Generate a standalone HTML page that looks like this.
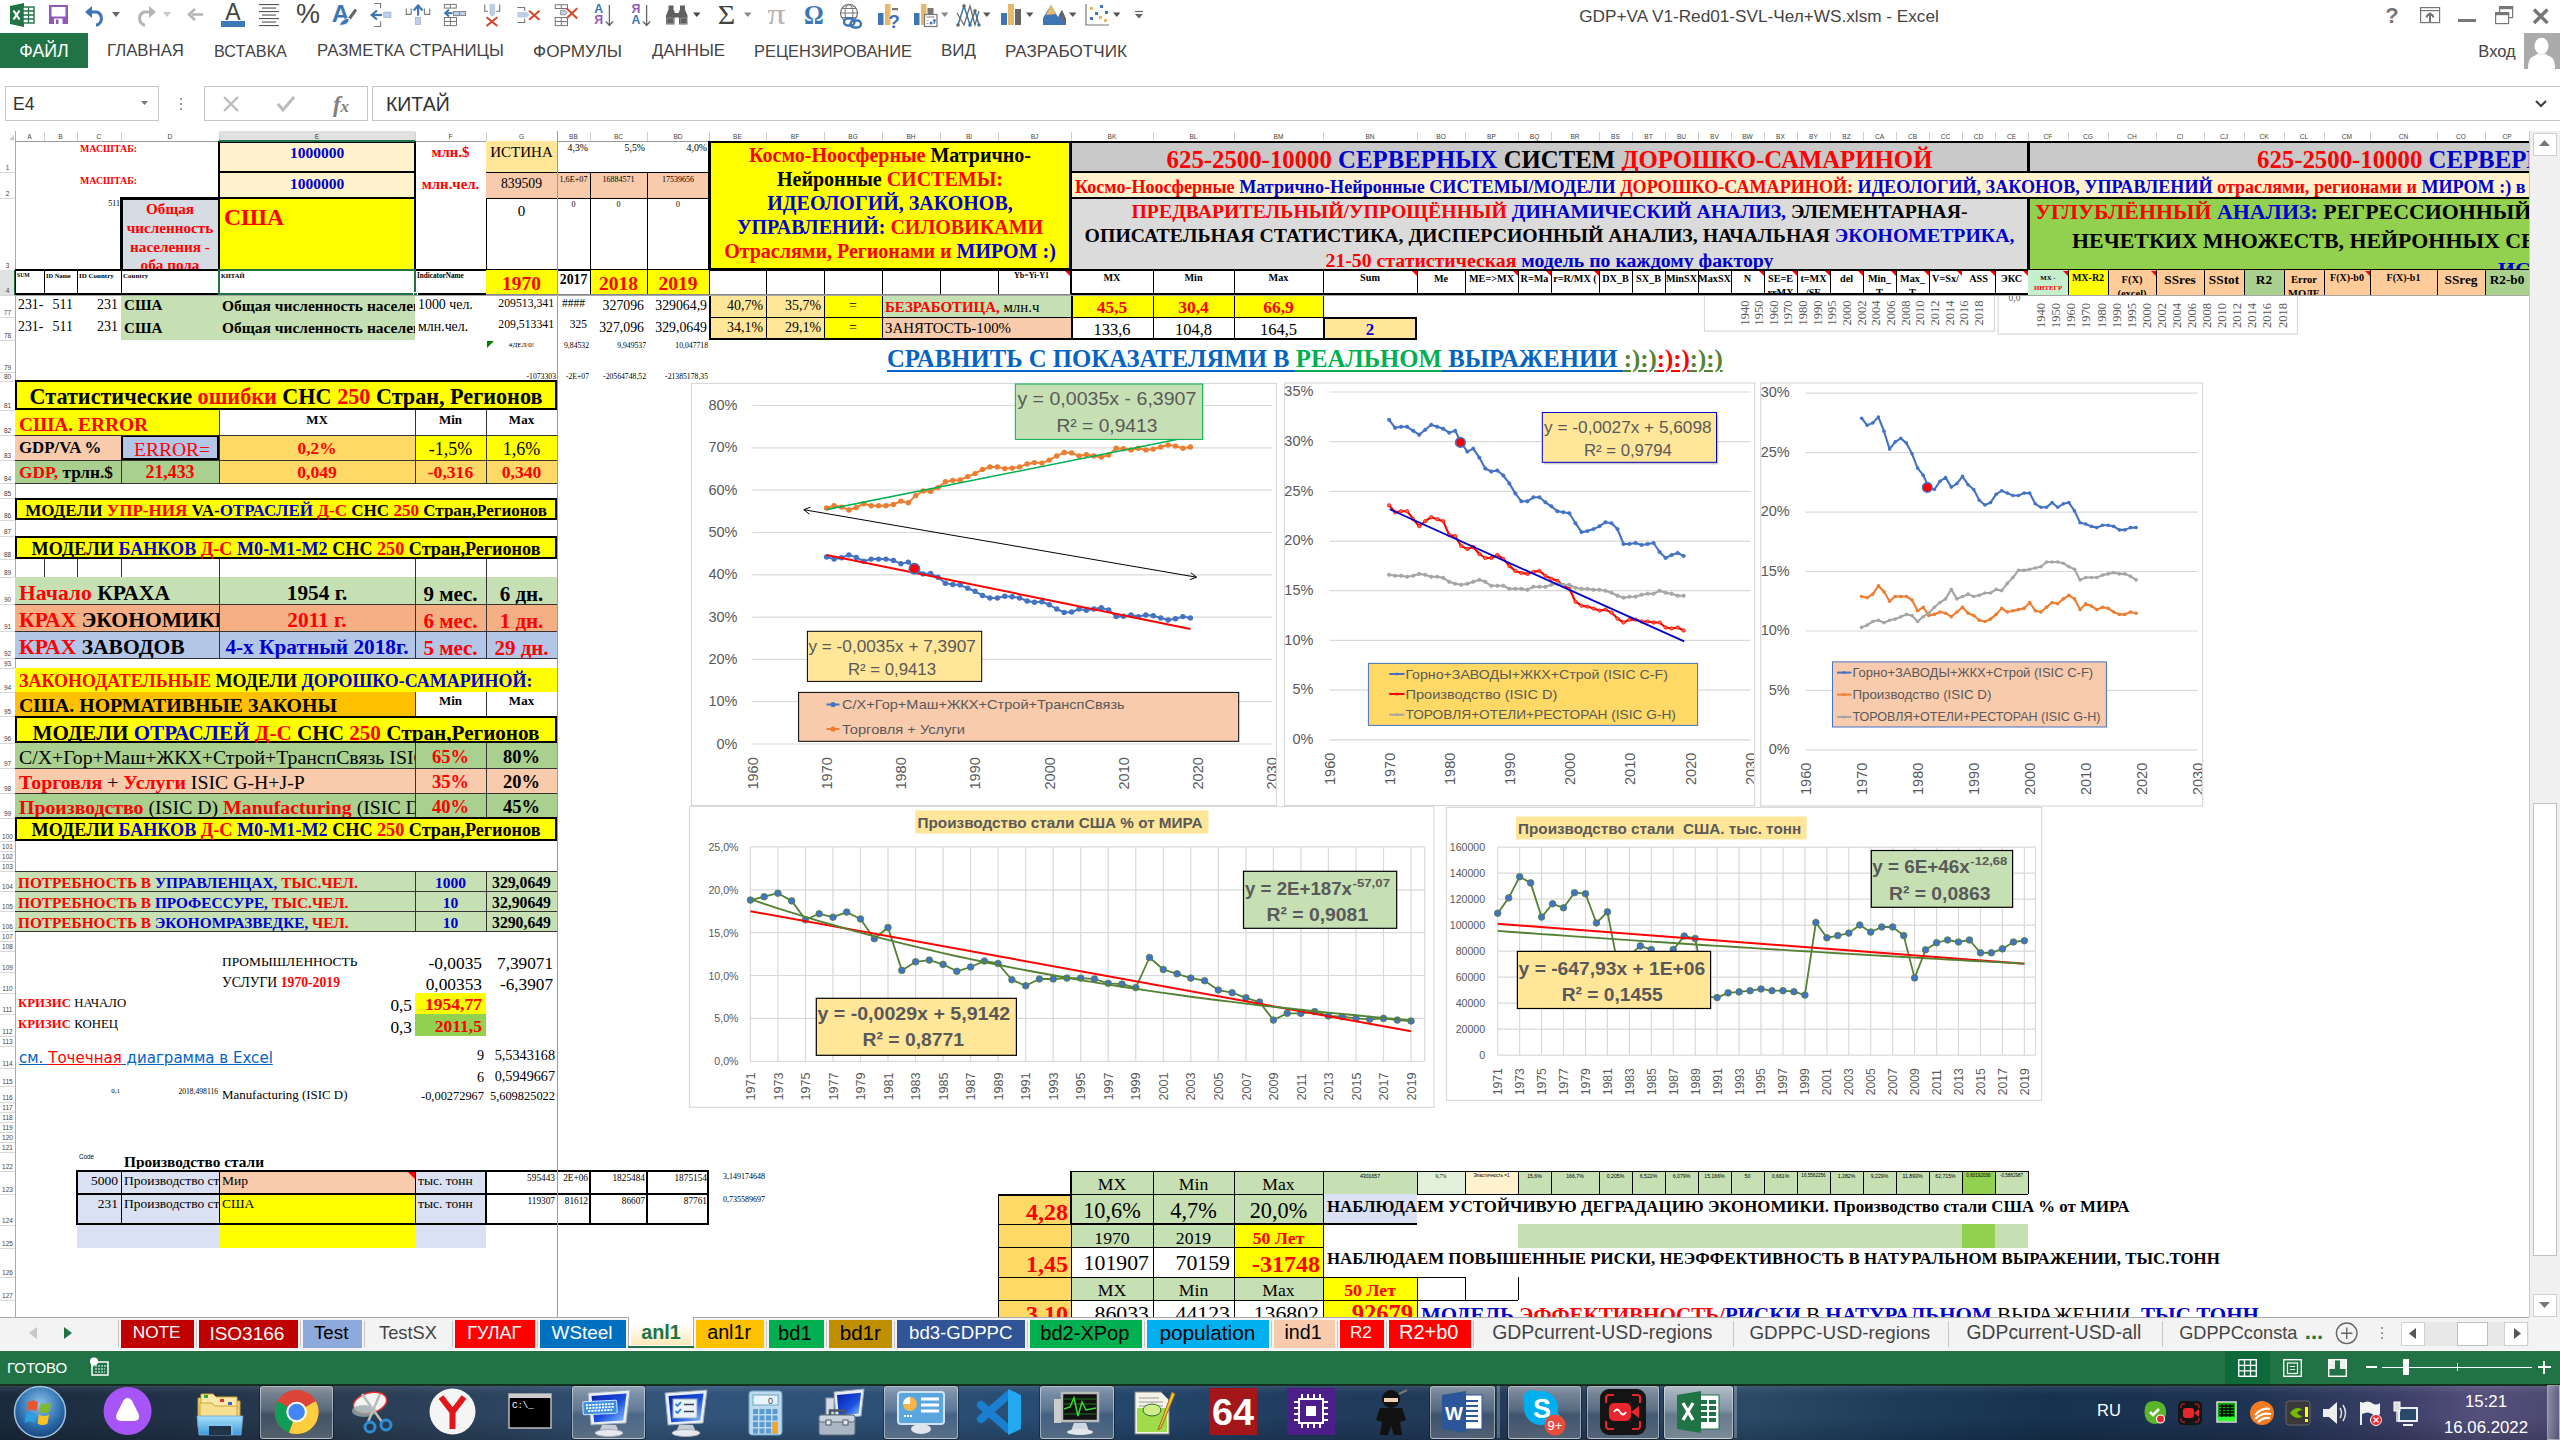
<!DOCTYPE html>
<html lang="ru"><head><meta charset="utf-8"><title>GDP+VA V1-Red01-SVL-Чел+WS.xlsm - Excel</title>
<style>
*{box-sizing:border-box;margin:0;padding:0}
html,body{width:2560px;height:1440px;overflow:hidden;background:#fff}
body{position:relative;font-family:"Liberation Serif",serif;color:#000}
div{position:absolute}
.t{display:flex;white-space:nowrap;overflow:hidden;line-height:1.0}
.t.nc{overflow:visible}
.t.wr{white-space:normal}
.t span{display:block}
.ts{font-family:"Liberation Serif",serif}
.ta{font-family:"Liberation Sans",sans-serif}
.td{font-family:"DejaVu Sans","Liberation Sans",sans-serif}
.b{font-weight:bold}
.al{justify-content:flex-start;text-align:left}
.ac{justify-content:center;text-align:center}
.ar{justify-content:flex-end;text-align:right}
.vt{align-items:flex-start}
.vm{align-items:center}
.vb{align-items:flex-end}
i{font-style:normal}
i.r{color:#f00}
i.u{color:#0000cd}
i.k{color:#000}
i.g{color:#00b050}
svg{position:absolute;overflow:visible}
</style></head>
<body>
<svg style="left:0;top:0" width="2560" height="1440" font-family="Liberation Sans, sans-serif"><path d="M1704.5 295V331.2H1994.5V295" fill="#fff" stroke="#d9d9d9" stroke-width="1.2"/><text x="1748.5" y="325.5" font-size="12.5" font-family="Liberation Serif, serif" fill="#595959" transform="rotate(-90 1748.5 325.5)">1940</text><text x="1763.1" y="325.5" font-size="12.5" font-family="Liberation Serif, serif" fill="#595959" transform="rotate(-90 1763.1 325.5)">1950</text><text x="1777.8" y="325.5" font-size="12.5" font-family="Liberation Serif, serif" fill="#595959" transform="rotate(-90 1777.8 325.5)">1960</text><text x="1792.4" y="325.5" font-size="12.5" font-family="Liberation Serif, serif" fill="#595959" transform="rotate(-90 1792.4 325.5)">1970</text><text x="1807.1" y="325.5" font-size="12.5" font-family="Liberation Serif, serif" fill="#595959" transform="rotate(-90 1807.1 325.5)">1980</text><text x="1821.7" y="325.5" font-size="12.5" font-family="Liberation Serif, serif" fill="#595959" transform="rotate(-90 1821.7 325.5)">1990</text><text x="1836.3" y="325.5" font-size="12.5" font-family="Liberation Serif, serif" fill="#595959" transform="rotate(-90 1836.3 325.5)">1995</text><text x="1851.0" y="325.5" font-size="12.5" font-family="Liberation Serif, serif" fill="#595959" transform="rotate(-90 1851.0 325.5)">2000</text><text x="1865.6" y="325.5" font-size="12.5" font-family="Liberation Serif, serif" fill="#595959" transform="rotate(-90 1865.6 325.5)">2002</text><text x="1880.3" y="325.5" font-size="12.5" font-family="Liberation Serif, serif" fill="#595959" transform="rotate(-90 1880.3 325.5)">2004</text><text x="1894.9" y="325.5" font-size="12.5" font-family="Liberation Serif, serif" fill="#595959" transform="rotate(-90 1894.9 325.5)">2006</text><text x="1909.5" y="325.5" font-size="12.5" font-family="Liberation Serif, serif" fill="#595959" transform="rotate(-90 1909.5 325.5)">2008</text><text x="1924.2" y="325.5" font-size="12.5" font-family="Liberation Serif, serif" fill="#595959" transform="rotate(-90 1924.2 325.5)">2010</text><text x="1938.8" y="325.5" font-size="12.5" font-family="Liberation Serif, serif" fill="#595959" transform="rotate(-90 1938.8 325.5)">2012</text><text x="1953.5" y="325.5" font-size="12.5" font-family="Liberation Serif, serif" fill="#595959" transform="rotate(-90 1953.5 325.5)">2014</text><text x="1968.1" y="325.5" font-size="12.5" font-family="Liberation Serif, serif" fill="#595959" transform="rotate(-90 1968.1 325.5)">2016</text><text x="1982.7" y="325.5" font-size="12.5" font-family="Liberation Serif, serif" fill="#595959" transform="rotate(-90 1982.7 325.5)">2018</text><path d="M1998.2 295V334.2H2297.5V295" fill="#fff" stroke="#d9d9d9" stroke-width="1.2"/><text x="2045.2" y="328" font-size="12.5" font-family="Liberation Serif, serif" fill="#595959" transform="rotate(-90 2045.2 328)">1940</text><text x="2060.3" y="328" font-size="12.5" font-family="Liberation Serif, serif" fill="#595959" transform="rotate(-90 2060.3 328)">1950</text><text x="2075.4" y="328" font-size="12.5" font-family="Liberation Serif, serif" fill="#595959" transform="rotate(-90 2075.4 328)">1960</text><text x="2090.4" y="328" font-size="12.5" font-family="Liberation Serif, serif" fill="#595959" transform="rotate(-90 2090.4 328)">1970</text><text x="2105.5" y="328" font-size="12.5" font-family="Liberation Serif, serif" fill="#595959" transform="rotate(-90 2105.5 328)">1980</text><text x="2120.6" y="328" font-size="12.5" font-family="Liberation Serif, serif" fill="#595959" transform="rotate(-90 2120.6 328)">1990</text><text x="2135.7" y="328" font-size="12.5" font-family="Liberation Serif, serif" fill="#595959" transform="rotate(-90 2135.7 328)">1995</text><text x="2150.8" y="328" font-size="12.5" font-family="Liberation Serif, serif" fill="#595959" transform="rotate(-90 2150.8 328)">2000</text><text x="2165.8" y="328" font-size="12.5" font-family="Liberation Serif, serif" fill="#595959" transform="rotate(-90 2165.8 328)">2002</text><text x="2180.9" y="328" font-size="12.5" font-family="Liberation Serif, serif" fill="#595959" transform="rotate(-90 2180.9 328)">2004</text><text x="2196.0" y="328" font-size="12.5" font-family="Liberation Serif, serif" fill="#595959" transform="rotate(-90 2196.0 328)">2006</text><text x="2211.1" y="328" font-size="12.5" font-family="Liberation Serif, serif" fill="#595959" transform="rotate(-90 2211.1 328)">2008</text><text x="2226.2" y="328" font-size="12.5" font-family="Liberation Serif, serif" fill="#595959" transform="rotate(-90 2226.2 328)">2010</text><text x="2241.2" y="328" font-size="12.5" font-family="Liberation Serif, serif" fill="#595959" transform="rotate(-90 2241.2 328)">2012</text><text x="2256.3" y="328" font-size="12.5" font-family="Liberation Serif, serif" fill="#595959" transform="rotate(-90 2256.3 328)">2014</text><text x="2271.4" y="328" font-size="12.5" font-family="Liberation Serif, serif" fill="#595959" transform="rotate(-90 2271.4 328)">2016</text><text x="2286.5" y="328" font-size="12.5" font-family="Liberation Serif, serif" fill="#595959" transform="rotate(-90 2286.5 328)">2018</text><text x="2008.5" y="301" font-size="9.5" font-family="Liberation Serif, serif" fill="#595959">0,0</text></svg>
<div style="left:15px;top:141px;width:2514px;height:154px;background:#fff;"></div>
<svg style="left:0;top:0" width="2560" height="1440" font-family="Liberation Sans, sans-serif"><defs><clipPath id="k1"><rect x="692" y="384" width="584" height="421"/></clipPath><clipPath id="k2"><rect x="1285" y="384" width="469" height="421"/></clipPath><clipPath id="k3"><rect x="1761" y="384" width="441" height="421"/></clipPath></defs><rect x="691.5" y="383.5" width="585.0" height="422.0" fill="#fff" stroke="#d9d9d9" stroke-width="1.2"/><path d="M752.4 744.0H1272" stroke="#d9d9d9" stroke-width="1.2"/><text x="737.5" y="748.5" font-size="14.5" text-anchor="end" fill="#595959">0%</text><path d="M752.4 701.7H1272" stroke="#d9d9d9" stroke-width="1.2"/><text x="737.5" y="706.2" font-size="14.5" text-anchor="end" fill="#595959">10%</text><path d="M752.4 659.4H1272" stroke="#d9d9d9" stroke-width="1.2"/><text x="737.5" y="663.9" font-size="14.5" text-anchor="end" fill="#595959">20%</text><path d="M752.4 617.1H1272" stroke="#d9d9d9" stroke-width="1.2"/><text x="737.5" y="621.6" font-size="14.5" text-anchor="end" fill="#595959">30%</text><path d="M752.4 574.8H1272" stroke="#d9d9d9" stroke-width="1.2"/><text x="737.5" y="579.3" font-size="14.5" text-anchor="end" fill="#595959">40%</text><path d="M752.4 532.5H1272" stroke="#d9d9d9" stroke-width="1.2"/><text x="737.5" y="537.0" font-size="14.5" text-anchor="end" fill="#595959">50%</text><path d="M752.4 490.1H1272" stroke="#d9d9d9" stroke-width="1.2"/><text x="737.5" y="494.6" font-size="14.5" text-anchor="end" fill="#595959">60%</text><path d="M752.4 447.8H1272" stroke="#d9d9d9" stroke-width="1.2"/><text x="737.5" y="452.3" font-size="14.5" text-anchor="end" fill="#595959">70%</text><path d="M752.4 405.5H1272" stroke="#d9d9d9" stroke-width="1.2"/><text x="737.5" y="410.0" font-size="14.5" text-anchor="end" fill="#595959">80%</text><g clip-path="url(#k1)"><text x="757.6" y="789.5" font-size="14.5" fill="#595959" transform="rotate(-90 757.6 789.5)">1960</text><text x="831.8" y="789.5" font-size="14.5" fill="#595959" transform="rotate(-90 831.8 789.5)">1970</text><text x="906.1" y="789.5" font-size="14.5" fill="#595959" transform="rotate(-90 906.1 789.5)">1980</text><text x="980.3" y="789.5" font-size="14.5" fill="#595959" transform="rotate(-90 980.3 789.5)">1990</text><text x="1054.5" y="789.5" font-size="14.5" fill="#595959" transform="rotate(-90 1054.5 789.5)">2000</text><text x="1128.8" y="789.5" font-size="14.5" fill="#595959" transform="rotate(-90 1128.8 789.5)">2010</text><text x="1203.0" y="789.5" font-size="14.5" fill="#595959" transform="rotate(-90 1203.0 789.5)">2020</text><text x="1277.2" y="789.5" font-size="14.5" fill="#595959" transform="rotate(-90 1277.2 789.5)">2030</text></g><polyline points="826.6,557.0 834.1,559.1 841.5,557.8 848.9,554.9 856.3,557.4 863.7,561.2 871.2,559.1 878.6,559.1 886.0,559.1 893.4,560.4 900.9,563.8 908.3,562.1 915.7,569.3 923.1,573.9 930.6,573.5 938.0,577.3 945.4,583.2 952.8,584.5 960.2,584.9 967.7,588.3 975.1,591.3 982.5,595.5 989.9,598.0 997.4,598.0 1004.8,596.3 1012.2,596.8 1019.6,598.0 1027.1,601.0 1034.5,602.3 1041.9,601.8 1049.3,604.8 1056.7,609.0 1064.2,612.4 1071.6,612.0 1079.0,609.0 1086.4,610.3 1093.9,609.0 1101.3,607.8 1108.7,609.9 1116.1,616.6 1123.5,616.2 1131.0,615.0 1138.4,616.6 1145.8,615.0 1153.2,615.8 1160.7,617.9 1168.1,620.0 1175.5,618.8 1182.9,616.6 1190.4,617.9" fill="none" stroke="#4472c4" stroke-width="2" stroke-linejoin="round"/><circle cx="826.6" cy="557.0" r="2.7" fill="#4472c4"/><circle cx="834.1" cy="559.1" r="2.7" fill="#4472c4"/><circle cx="841.5" cy="557.8" r="2.7" fill="#4472c4"/><circle cx="848.9" cy="554.9" r="2.7" fill="#4472c4"/><circle cx="856.3" cy="557.4" r="2.7" fill="#4472c4"/><circle cx="863.7" cy="561.2" r="2.7" fill="#4472c4"/><circle cx="871.2" cy="559.1" r="2.7" fill="#4472c4"/><circle cx="878.6" cy="559.1" r="2.7" fill="#4472c4"/><circle cx="886.0" cy="559.1" r="2.7" fill="#4472c4"/><circle cx="893.4" cy="560.4" r="2.7" fill="#4472c4"/><circle cx="900.9" cy="563.8" r="2.7" fill="#4472c4"/><circle cx="908.3" cy="562.1" r="2.7" fill="#4472c4"/><circle cx="915.7" cy="569.3" r="2.7" fill="#4472c4"/><circle cx="923.1" cy="573.9" r="2.7" fill="#4472c4"/><circle cx="930.6" cy="573.5" r="2.7" fill="#4472c4"/><circle cx="938.0" cy="577.3" r="2.7" fill="#4472c4"/><circle cx="945.4" cy="583.2" r="2.7" fill="#4472c4"/><circle cx="952.8" cy="584.5" r="2.7" fill="#4472c4"/><circle cx="960.2" cy="584.9" r="2.7" fill="#4472c4"/><circle cx="967.7" cy="588.3" r="2.7" fill="#4472c4"/><circle cx="975.1" cy="591.3" r="2.7" fill="#4472c4"/><circle cx="982.5" cy="595.5" r="2.7" fill="#4472c4"/><circle cx="989.9" cy="598.0" r="2.7" fill="#4472c4"/><circle cx="997.4" cy="598.0" r="2.7" fill="#4472c4"/><circle cx="1004.8" cy="596.3" r="2.7" fill="#4472c4"/><circle cx="1012.2" cy="596.8" r="2.7" fill="#4472c4"/><circle cx="1019.6" cy="598.0" r="2.7" fill="#4472c4"/><circle cx="1027.1" cy="601.0" r="2.7" fill="#4472c4"/><circle cx="1034.5" cy="602.3" r="2.7" fill="#4472c4"/><circle cx="1041.9" cy="601.8" r="2.7" fill="#4472c4"/><circle cx="1049.3" cy="604.8" r="2.7" fill="#4472c4"/><circle cx="1056.7" cy="609.0" r="2.7" fill="#4472c4"/><circle cx="1064.2" cy="612.4" r="2.7" fill="#4472c4"/><circle cx="1071.6" cy="612.0" r="2.7" fill="#4472c4"/><circle cx="1079.0" cy="609.0" r="2.7" fill="#4472c4"/><circle cx="1086.4" cy="610.3" r="2.7" fill="#4472c4"/><circle cx="1093.9" cy="609.0" r="2.7" fill="#4472c4"/><circle cx="1101.3" cy="607.8" r="2.7" fill="#4472c4"/><circle cx="1108.7" cy="609.9" r="2.7" fill="#4472c4"/><circle cx="1116.1" cy="616.6" r="2.7" fill="#4472c4"/><circle cx="1123.5" cy="616.2" r="2.7" fill="#4472c4"/><circle cx="1131.0" cy="615.0" r="2.7" fill="#4472c4"/><circle cx="1138.4" cy="616.6" r="2.7" fill="#4472c4"/><circle cx="1145.8" cy="615.0" r="2.7" fill="#4472c4"/><circle cx="1153.2" cy="615.8" r="2.7" fill="#4472c4"/><circle cx="1160.7" cy="617.9" r="2.7" fill="#4472c4"/><circle cx="1168.1" cy="620.0" r="2.7" fill="#4472c4"/><circle cx="1175.5" cy="618.8" r="2.7" fill="#4472c4"/><circle cx="1182.9" cy="616.6" r="2.7" fill="#4472c4"/><circle cx="1190.4" cy="617.9" r="2.7" fill="#4472c4"/><polyline points="826.6,507.9 834.1,505.8 841.5,507.1 848.9,510.0 856.3,507.5 863.7,503.7 871.2,505.8 878.6,505.8 886.0,505.8 893.4,504.5 900.9,501.1 908.3,502.8 915.7,495.6 923.1,491.0 930.6,491.4 938.0,487.6 945.4,481.7 952.8,480.4 960.2,480.0 967.7,476.6 975.1,473.6 982.5,469.4 989.9,466.9 997.4,466.9 1004.8,468.6 1012.2,468.1 1019.6,466.9 1027.1,463.9 1034.5,462.6 1041.9,463.1 1049.3,460.1 1056.7,455.9 1064.2,452.5 1071.6,452.9 1079.0,455.9 1086.4,454.6 1093.9,455.9 1101.3,457.1 1108.7,455.0 1116.1,448.3 1123.5,448.7 1131.0,449.9 1138.4,448.3 1145.8,449.9 1153.2,449.1 1160.7,447.0 1168.1,444.9 1175.5,446.1 1182.9,448.3 1190.4,447.0" fill="none" stroke="#ed7d31" stroke-width="2" stroke-linejoin="round"/><circle cx="826.6" cy="507.9" r="2.7" fill="#ed7d31"/><circle cx="834.1" cy="505.8" r="2.7" fill="#ed7d31"/><circle cx="841.5" cy="507.1" r="2.7" fill="#ed7d31"/><circle cx="848.9" cy="510.0" r="2.7" fill="#ed7d31"/><circle cx="856.3" cy="507.5" r="2.7" fill="#ed7d31"/><circle cx="863.7" cy="503.7" r="2.7" fill="#ed7d31"/><circle cx="871.2" cy="505.8" r="2.7" fill="#ed7d31"/><circle cx="878.6" cy="505.8" r="2.7" fill="#ed7d31"/><circle cx="886.0" cy="505.8" r="2.7" fill="#ed7d31"/><circle cx="893.4" cy="504.5" r="2.7" fill="#ed7d31"/><circle cx="900.9" cy="501.1" r="2.7" fill="#ed7d31"/><circle cx="908.3" cy="502.8" r="2.7" fill="#ed7d31"/><circle cx="915.7" cy="495.6" r="2.7" fill="#ed7d31"/><circle cx="923.1" cy="491.0" r="2.7" fill="#ed7d31"/><circle cx="930.6" cy="491.4" r="2.7" fill="#ed7d31"/><circle cx="938.0" cy="487.6" r="2.7" fill="#ed7d31"/><circle cx="945.4" cy="481.7" r="2.7" fill="#ed7d31"/><circle cx="952.8" cy="480.4" r="2.7" fill="#ed7d31"/><circle cx="960.2" cy="480.0" r="2.7" fill="#ed7d31"/><circle cx="967.7" cy="476.6" r="2.7" fill="#ed7d31"/><circle cx="975.1" cy="473.6" r="2.7" fill="#ed7d31"/><circle cx="982.5" cy="469.4" r="2.7" fill="#ed7d31"/><circle cx="989.9" cy="466.9" r="2.7" fill="#ed7d31"/><circle cx="997.4" cy="466.9" r="2.7" fill="#ed7d31"/><circle cx="1004.8" cy="468.6" r="2.7" fill="#ed7d31"/><circle cx="1012.2" cy="468.1" r="2.7" fill="#ed7d31"/><circle cx="1019.6" cy="466.9" r="2.7" fill="#ed7d31"/><circle cx="1027.1" cy="463.9" r="2.7" fill="#ed7d31"/><circle cx="1034.5" cy="462.6" r="2.7" fill="#ed7d31"/><circle cx="1041.9" cy="463.1" r="2.7" fill="#ed7d31"/><circle cx="1049.3" cy="460.1" r="2.7" fill="#ed7d31"/><circle cx="1056.7" cy="455.9" r="2.7" fill="#ed7d31"/><circle cx="1064.2" cy="452.5" r="2.7" fill="#ed7d31"/><circle cx="1071.6" cy="452.9" r="2.7" fill="#ed7d31"/><circle cx="1079.0" cy="455.9" r="2.7" fill="#ed7d31"/><circle cx="1086.4" cy="454.6" r="2.7" fill="#ed7d31"/><circle cx="1093.9" cy="455.9" r="2.7" fill="#ed7d31"/><circle cx="1101.3" cy="457.1" r="2.7" fill="#ed7d31"/><circle cx="1108.7" cy="455.0" r="2.7" fill="#ed7d31"/><circle cx="1116.1" cy="448.3" r="2.7" fill="#ed7d31"/><circle cx="1123.5" cy="448.7" r="2.7" fill="#ed7d31"/><circle cx="1131.0" cy="449.9" r="2.7" fill="#ed7d31"/><circle cx="1138.4" cy="448.3" r="2.7" fill="#ed7d31"/><circle cx="1145.8" cy="449.9" r="2.7" fill="#ed7d31"/><circle cx="1153.2" cy="449.1" r="2.7" fill="#ed7d31"/><circle cx="1160.7" cy="447.0" r="2.7" fill="#ed7d31"/><circle cx="1168.1" cy="444.9" r="2.7" fill="#ed7d31"/><circle cx="1175.5" cy="446.1" r="2.7" fill="#ed7d31"/><circle cx="1182.9" cy="448.3" r="2.7" fill="#ed7d31"/><circle cx="1190.4" cy="447.0" r="2.7" fill="#ed7d31"/><path d="M826.6 509.6L1190.4 436.8" stroke="#00b050" stroke-width="1.6"/><path d="M826.6 554.9L1190.4 628.9" stroke="#f00" stroke-width="2"/><path d="M803.8 509.7L1196.5 577.2" stroke="#000" stroke-width="1"/><path d="M810.5 507.2L803.8 509.7L809.5 514.2" fill="none" stroke="#000" stroke-width="1"/><path d="M1190.8 572.700L1196.500 577.200L1189.800 579.700" fill="none" stroke="#000" stroke-width="1"/><circle cx="914.4" cy="568.7" r="5.2" fill="#f00" stroke="#4472c4" stroke-width="1.6"/><rect x="1015.3" y="384" width="187.3" height="55.4" fill="#c6e0b4" stroke="#00b050" stroke-width="1"/><text x="1017.4" y="404.5" font-size="17.5" textLength="179.0" lengthAdjust="spacingAndGlyphs" fill="#595959">y = 0,0035x - 6,3907</text><text x="1056.5" y="431.5" font-size="17.5" textLength="100.9" lengthAdjust="spacingAndGlyphs" fill="#595959">R² = 0,9413</text><rect x="807.4" y="631.3" width="174.3" height="50.1" fill="#ffe699" stroke="#000" stroke-width="1"/><text x="808.4" y="652.0" font-size="16" textLength="167.5" lengthAdjust="spacingAndGlyphs" fill="#595959">y = -0,0035x + 7,3907</text><text x="848.0" y="675.0" font-size="16" textLength="88.0" lengthAdjust="spacingAndGlyphs" fill="#595959">R² = 0,9413</text><rect x="798.6" y="692.4" width="440.1" height="48.9" fill="#f8cbad" stroke="#000" stroke-width="1"/><path d="M826.5 704.500h13" stroke="#4472c4" stroke-width="2"/><circle cx="833" cy="704.500" r="2.6" fill="#4472c4"/><text x="842.0" y="709.3" font-size="13.5" textLength="282.7" lengthAdjust="spacingAndGlyphs" fill="#595959">С/Х+Гор+Маш+ЖКХ+Строй+ТранспСвязь</text><path d="M826.5 729h13" stroke="#ed7d31" stroke-width="2"/><circle cx="833" cy="729" r="2.6" fill="#ed7d31"/><text x="842.0" y="733.8" font-size="13.5" textLength="123.0" lengthAdjust="spacingAndGlyphs" fill="#595959">Торговля + Услуги</text><rect x="1284.5" y="383" width="470.20000000000005" height="422.5" fill="#fff" stroke="#d9d9d9" stroke-width="1.2"/><path d="M1329.6 739.8H1750.4" stroke="#d9d9d9" stroke-width="1.2"/><text x="1313.4" y="744.0" font-size="14.5" text-anchor="end" fill="#595959">0%</text><path d="M1329.6 690.1H1750.4" stroke="#d9d9d9" stroke-width="1.2"/><text x="1313.4" y="694.3" font-size="14.5" text-anchor="end" fill="#595959">5%</text><path d="M1329.6 640.4H1750.4" stroke="#d9d9d9" stroke-width="1.2"/><text x="1313.4" y="644.6" font-size="14.5" text-anchor="end" fill="#595959">10%</text><path d="M1329.6 590.7H1750.4" stroke="#d9d9d9" stroke-width="1.2"/><text x="1313.4" y="594.9" font-size="14.5" text-anchor="end" fill="#595959">15%</text><path d="M1329.6 541.1H1750.4" stroke="#d9d9d9" stroke-width="1.2"/><text x="1313.4" y="545.3" font-size="14.5" text-anchor="end" fill="#595959">20%</text><path d="M1329.6 491.4H1750.4" stroke="#d9d9d9" stroke-width="1.2"/><text x="1313.4" y="495.6" font-size="14.5" text-anchor="end" fill="#595959">25%</text><path d="M1329.6 441.7H1750.4" stroke="#d9d9d9" stroke-width="1.2"/><text x="1313.4" y="445.9" font-size="14.5" text-anchor="end" fill="#595959">30%</text><path d="M1329.6 392.0H1750.4" stroke="#d9d9d9" stroke-width="1.2"/><text x="1313.4" y="396.2" font-size="14.5" text-anchor="end" fill="#595959">35%</text><g clip-path="url(#k2)"><text x="1334.8" y="785.0" font-size="14.5" fill="#595959" transform="rotate(-90 1334.8 785.0)">1960</text><text x="1394.9" y="785.0" font-size="14.5" fill="#595959" transform="rotate(-90 1394.9 785.0)">1970</text><text x="1455.0" y="785.0" font-size="14.5" fill="#595959" transform="rotate(-90 1455.0 785.0)">1980</text><text x="1515.1" y="785.0" font-size="14.5" fill="#595959" transform="rotate(-90 1515.1 785.0)">1990</text><text x="1575.2" y="785.0" font-size="14.5" fill="#595959" transform="rotate(-90 1575.2 785.0)">2000</text><text x="1635.3" y="785.0" font-size="14.5" fill="#595959" transform="rotate(-90 1635.3 785.0)">2010</text><text x="1695.5" y="785.0" font-size="14.5" fill="#595959" transform="rotate(-90 1695.5 785.0)">2020</text><text x="1755.6" y="785.0" font-size="14.5" fill="#595959" transform="rotate(-90 1755.6 785.0)">2030</text></g><polyline points="1389.1,419.8 1395.1,427.8 1401.1,426.8 1407.1,426.8 1413.2,430.8 1419.2,434.7 1425.2,429.8 1431.2,424.8 1437.2,426.8 1443.2,428.8 1449.2,432.7 1455.2,430.8 1461.2,442.7 1467.3,451.6 1473.3,448.6 1479.3,457.6 1485.3,468.5 1491.3,471.5 1497.3,470.5 1503.3,475.5 1509.3,483.4 1515.3,493.4 1521.4,501.3 1527.4,501.3 1533.4,497.3 1539.4,497.3 1545.4,502.3 1551.4,506.3 1557.4,511.2 1563.4,512.2 1569.4,513.2 1575.5,523.2 1581.5,532.1 1587.5,531.1 1593.5,529.1 1599.5,526.2 1605.5,522.2 1611.5,523.2 1617.5,529.1 1623.5,544.0 1629.5,544.0 1635.6,543.0 1641.6,545.0 1647.6,544.0 1653.6,543.0 1659.6,552.0 1665.6,558.0 1671.6,555.0 1677.6,553.0 1683.6,556.0" fill="none" stroke="#4472c4" stroke-width="2.1" stroke-linejoin="round"/><circle cx="1389.1" cy="419.8" r="1.7" fill="#4472c4" stroke="#4472c4" stroke-width="0.7"/><circle cx="1395.1" cy="427.8" r="1.7" fill="#4472c4" stroke="#4472c4" stroke-width="0.7"/><circle cx="1401.1" cy="426.8" r="1.7" fill="#4472c4" stroke="#4472c4" stroke-width="0.7"/><circle cx="1407.1" cy="426.8" r="1.7" fill="#4472c4" stroke="#4472c4" stroke-width="0.7"/><circle cx="1413.2" cy="430.8" r="1.7" fill="#4472c4" stroke="#4472c4" stroke-width="0.7"/><circle cx="1419.2" cy="434.7" r="1.7" fill="#4472c4" stroke="#4472c4" stroke-width="0.7"/><circle cx="1425.2" cy="429.8" r="1.7" fill="#4472c4" stroke="#4472c4" stroke-width="0.7"/><circle cx="1431.2" cy="424.8" r="1.7" fill="#4472c4" stroke="#4472c4" stroke-width="0.7"/><circle cx="1437.2" cy="426.8" r="1.7" fill="#4472c4" stroke="#4472c4" stroke-width="0.7"/><circle cx="1443.2" cy="428.8" r="1.7" fill="#4472c4" stroke="#4472c4" stroke-width="0.7"/><circle cx="1449.2" cy="432.7" r="1.7" fill="#4472c4" stroke="#4472c4" stroke-width="0.7"/><circle cx="1455.2" cy="430.8" r="1.7" fill="#4472c4" stroke="#4472c4" stroke-width="0.7"/><circle cx="1461.2" cy="442.7" r="1.7" fill="#4472c4" stroke="#4472c4" stroke-width="0.7"/><circle cx="1467.3" cy="451.6" r="1.7" fill="#4472c4" stroke="#4472c4" stroke-width="0.7"/><circle cx="1473.3" cy="448.6" r="1.7" fill="#4472c4" stroke="#4472c4" stroke-width="0.7"/><circle cx="1479.3" cy="457.6" r="1.7" fill="#4472c4" stroke="#4472c4" stroke-width="0.7"/><circle cx="1485.3" cy="468.5" r="1.7" fill="#4472c4" stroke="#4472c4" stroke-width="0.7"/><circle cx="1491.3" cy="471.5" r="1.7" fill="#4472c4" stroke="#4472c4" stroke-width="0.7"/><circle cx="1497.3" cy="470.5" r="1.7" fill="#4472c4" stroke="#4472c4" stroke-width="0.7"/><circle cx="1503.3" cy="475.5" r="1.7" fill="#4472c4" stroke="#4472c4" stroke-width="0.7"/><circle cx="1509.3" cy="483.4" r="1.7" fill="#4472c4" stroke="#4472c4" stroke-width="0.7"/><circle cx="1515.3" cy="493.4" r="1.7" fill="#4472c4" stroke="#4472c4" stroke-width="0.7"/><circle cx="1521.4" cy="501.3" r="1.7" fill="#4472c4" stroke="#4472c4" stroke-width="0.7"/><circle cx="1527.4" cy="501.3" r="1.7" fill="#4472c4" stroke="#4472c4" stroke-width="0.7"/><circle cx="1533.4" cy="497.3" r="1.7" fill="#4472c4" stroke="#4472c4" stroke-width="0.7"/><circle cx="1539.4" cy="497.3" r="1.7" fill="#4472c4" stroke="#4472c4" stroke-width="0.7"/><circle cx="1545.4" cy="502.3" r="1.7" fill="#4472c4" stroke="#4472c4" stroke-width="0.7"/><circle cx="1551.4" cy="506.3" r="1.7" fill="#4472c4" stroke="#4472c4" stroke-width="0.7"/><circle cx="1557.4" cy="511.2" r="1.7" fill="#4472c4" stroke="#4472c4" stroke-width="0.7"/><circle cx="1563.4" cy="512.2" r="1.7" fill="#4472c4" stroke="#4472c4" stroke-width="0.7"/><circle cx="1569.4" cy="513.2" r="1.7" fill="#4472c4" stroke="#4472c4" stroke-width="0.7"/><circle cx="1575.5" cy="523.2" r="1.7" fill="#4472c4" stroke="#4472c4" stroke-width="0.7"/><circle cx="1581.5" cy="532.1" r="1.7" fill="#4472c4" stroke="#4472c4" stroke-width="0.7"/><circle cx="1587.5" cy="531.1" r="1.7" fill="#4472c4" stroke="#4472c4" stroke-width="0.7"/><circle cx="1593.5" cy="529.1" r="1.7" fill="#4472c4" stroke="#4472c4" stroke-width="0.7"/><circle cx="1599.5" cy="526.2" r="1.7" fill="#4472c4" stroke="#4472c4" stroke-width="0.7"/><circle cx="1605.5" cy="522.2" r="1.7" fill="#4472c4" stroke="#4472c4" stroke-width="0.7"/><circle cx="1611.5" cy="523.2" r="1.7" fill="#4472c4" stroke="#4472c4" stroke-width="0.7"/><circle cx="1617.5" cy="529.1" r="1.7" fill="#4472c4" stroke="#4472c4" stroke-width="0.7"/><circle cx="1623.5" cy="544.0" r="1.7" fill="#4472c4" stroke="#4472c4" stroke-width="0.7"/><circle cx="1629.5" cy="544.0" r="1.7" fill="#4472c4" stroke="#4472c4" stroke-width="0.7"/><circle cx="1635.6" cy="543.0" r="1.7" fill="#4472c4" stroke="#4472c4" stroke-width="0.7"/><circle cx="1641.6" cy="545.0" r="1.7" fill="#4472c4" stroke="#4472c4" stroke-width="0.7"/><circle cx="1647.6" cy="544.0" r="1.7" fill="#4472c4" stroke="#4472c4" stroke-width="0.7"/><circle cx="1653.6" cy="543.0" r="1.7" fill="#4472c4" stroke="#4472c4" stroke-width="0.7"/><circle cx="1659.6" cy="552.0" r="1.7" fill="#4472c4" stroke="#4472c4" stroke-width="0.7"/><circle cx="1665.6" cy="558.0" r="1.7" fill="#4472c4" stroke="#4472c4" stroke-width="0.7"/><circle cx="1671.6" cy="555.0" r="1.7" fill="#4472c4" stroke="#4472c4" stroke-width="0.7"/><circle cx="1677.6" cy="553.0" r="1.7" fill="#4472c4" stroke="#4472c4" stroke-width="0.7"/><circle cx="1683.6" cy="556.0" r="1.7" fill="#4472c4" stroke="#4472c4" stroke-width="0.7"/><polyline points="1389.1,505.3 1395.1,512.2 1401.1,511.2 1407.1,511.2 1413.2,519.2 1419.2,526.2 1425.2,521.2 1431.2,517.2 1437.2,519.2 1443.2,521.2 1449.2,535.1 1455.2,536.1 1461.2,546.0 1467.3,549.0 1473.3,547.0 1479.3,554.0 1485.3,558.0 1491.3,558.0 1497.3,555.0 1503.3,558.9 1509.3,565.9 1515.3,570.9 1521.4,572.9 1527.4,573.9 1533.4,571.9 1539.4,570.9 1545.4,575.8 1551.4,578.8 1557.4,580.8 1563.4,585.8 1569.4,588.8 1575.5,601.7 1581.5,605.7 1587.5,606.6 1593.5,608.6 1599.5,610.6 1605.5,609.6 1611.5,612.6 1617.5,618.6 1623.5,622.5 1629.5,619.6 1635.6,619.6 1641.6,621.5 1647.6,621.5 1653.6,622.5 1659.6,622.5 1665.6,627.5 1671.6,628.5 1677.6,627.5 1683.6,630.5" fill="none" stroke="#f00" stroke-width="2.1" stroke-linejoin="round"/><circle cx="1389.1" cy="505.3" r="1.7" fill="#ff6a3c" stroke="#f00" stroke-width="0.7"/><circle cx="1395.1" cy="512.2" r="1.7" fill="#ff6a3c" stroke="#f00" stroke-width="0.7"/><circle cx="1401.1" cy="511.2" r="1.7" fill="#ff6a3c" stroke="#f00" stroke-width="0.7"/><circle cx="1407.1" cy="511.2" r="1.7" fill="#ff6a3c" stroke="#f00" stroke-width="0.7"/><circle cx="1413.2" cy="519.2" r="1.7" fill="#ff6a3c" stroke="#f00" stroke-width="0.7"/><circle cx="1419.2" cy="526.2" r="1.7" fill="#ff6a3c" stroke="#f00" stroke-width="0.7"/><circle cx="1425.2" cy="521.2" r="1.7" fill="#ff6a3c" stroke="#f00" stroke-width="0.7"/><circle cx="1431.2" cy="517.2" r="1.7" fill="#ff6a3c" stroke="#f00" stroke-width="0.7"/><circle cx="1437.2" cy="519.2" r="1.7" fill="#ff6a3c" stroke="#f00" stroke-width="0.7"/><circle cx="1443.2" cy="521.2" r="1.7" fill="#ff6a3c" stroke="#f00" stroke-width="0.7"/><circle cx="1449.2" cy="535.1" r="1.7" fill="#ff6a3c" stroke="#f00" stroke-width="0.7"/><circle cx="1455.2" cy="536.1" r="1.7" fill="#ff6a3c" stroke="#f00" stroke-width="0.7"/><circle cx="1461.2" cy="546.0" r="1.7" fill="#ff6a3c" stroke="#f00" stroke-width="0.7"/><circle cx="1467.3" cy="549.0" r="1.7" fill="#ff6a3c" stroke="#f00" stroke-width="0.7"/><circle cx="1473.3" cy="547.0" r="1.7" fill="#ff6a3c" stroke="#f00" stroke-width="0.7"/><circle cx="1479.3" cy="554.0" r="1.7" fill="#ff6a3c" stroke="#f00" stroke-width="0.7"/><circle cx="1485.3" cy="558.0" r="1.7" fill="#ff6a3c" stroke="#f00" stroke-width="0.7"/><circle cx="1491.3" cy="558.0" r="1.7" fill="#ff6a3c" stroke="#f00" stroke-width="0.7"/><circle cx="1497.3" cy="555.0" r="1.7" fill="#ff6a3c" stroke="#f00" stroke-width="0.7"/><circle cx="1503.3" cy="558.9" r="1.7" fill="#ff6a3c" stroke="#f00" stroke-width="0.7"/><circle cx="1509.3" cy="565.9" r="1.7" fill="#ff6a3c" stroke="#f00" stroke-width="0.7"/><circle cx="1515.3" cy="570.9" r="1.7" fill="#ff6a3c" stroke="#f00" stroke-width="0.7"/><circle cx="1521.4" cy="572.9" r="1.7" fill="#ff6a3c" stroke="#f00" stroke-width="0.7"/><circle cx="1527.4" cy="573.9" r="1.7" fill="#ff6a3c" stroke="#f00" stroke-width="0.7"/><circle cx="1533.4" cy="571.9" r="1.7" fill="#ff6a3c" stroke="#f00" stroke-width="0.7"/><circle cx="1539.4" cy="570.9" r="1.7" fill="#ff6a3c" stroke="#f00" stroke-width="0.7"/><circle cx="1545.4" cy="575.8" r="1.7" fill="#ff6a3c" stroke="#f00" stroke-width="0.7"/><circle cx="1551.4" cy="578.8" r="1.7" fill="#ff6a3c" stroke="#f00" stroke-width="0.7"/><circle cx="1557.4" cy="580.8" r="1.7" fill="#ff6a3c" stroke="#f00" stroke-width="0.7"/><circle cx="1563.4" cy="585.8" r="1.7" fill="#ff6a3c" stroke="#f00" stroke-width="0.7"/><circle cx="1569.4" cy="588.8" r="1.7" fill="#ff6a3c" stroke="#f00" stroke-width="0.7"/><circle cx="1575.5" cy="601.7" r="1.7" fill="#ff6a3c" stroke="#f00" stroke-width="0.7"/><circle cx="1581.5" cy="605.7" r="1.7" fill="#ff6a3c" stroke="#f00" stroke-width="0.7"/><circle cx="1587.5" cy="606.6" r="1.7" fill="#ff6a3c" stroke="#f00" stroke-width="0.7"/><circle cx="1593.5" cy="608.6" r="1.7" fill="#ff6a3c" stroke="#f00" stroke-width="0.7"/><circle cx="1599.5" cy="610.6" r="1.7" fill="#ff6a3c" stroke="#f00" stroke-width="0.7"/><circle cx="1605.5" cy="609.6" r="1.7" fill="#ff6a3c" stroke="#f00" stroke-width="0.7"/><circle cx="1611.5" cy="612.6" r="1.7" fill="#ff6a3c" stroke="#f00" stroke-width="0.7"/><circle cx="1617.5" cy="618.6" r="1.7" fill="#ff6a3c" stroke="#f00" stroke-width="0.7"/><circle cx="1623.5" cy="622.5" r="1.7" fill="#ff6a3c" stroke="#f00" stroke-width="0.7"/><circle cx="1629.5" cy="619.6" r="1.7" fill="#ff6a3c" stroke="#f00" stroke-width="0.7"/><circle cx="1635.6" cy="619.6" r="1.7" fill="#ff6a3c" stroke="#f00" stroke-width="0.7"/><circle cx="1641.6" cy="621.5" r="1.7" fill="#ff6a3c" stroke="#f00" stroke-width="0.7"/><circle cx="1647.6" cy="621.5" r="1.7" fill="#ff6a3c" stroke="#f00" stroke-width="0.7"/><circle cx="1653.6" cy="622.5" r="1.7" fill="#ff6a3c" stroke="#f00" stroke-width="0.7"/><circle cx="1659.6" cy="622.5" r="1.7" fill="#ff6a3c" stroke="#f00" stroke-width="0.7"/><circle cx="1665.6" cy="627.5" r="1.7" fill="#ff6a3c" stroke="#f00" stroke-width="0.7"/><circle cx="1671.6" cy="628.5" r="1.7" fill="#ff6a3c" stroke="#f00" stroke-width="0.7"/><circle cx="1677.6" cy="627.5" r="1.7" fill="#ff6a3c" stroke="#f00" stroke-width="0.7"/><circle cx="1683.6" cy="630.5" r="1.7" fill="#ff6a3c" stroke="#f00" stroke-width="0.7"/><polyline points="1389.1,574.8 1395.1,575.8 1401.1,575.8 1407.1,576.8 1413.2,575.8 1419.2,573.9 1425.2,574.8 1431.2,576.8 1437.2,576.8 1443.2,577.8 1449.2,581.8 1455.2,583.8 1461.2,584.8 1467.3,583.8 1473.3,581.8 1479.3,579.8 1485.3,581.8 1491.3,585.8 1497.3,585.8 1503.3,585.8 1509.3,588.8 1515.3,588.8 1521.4,588.8 1527.4,589.8 1533.4,586.8 1539.4,586.8 1545.4,586.8 1551.4,584.8 1557.4,583.8 1563.4,584.8 1569.4,584.8 1575.5,587.8 1581.5,588.8 1587.5,588.8 1593.5,589.8 1599.5,589.8 1605.5,590.7 1611.5,592.7 1617.5,595.7 1623.5,597.7 1629.5,596.7 1635.6,596.7 1641.6,594.7 1647.6,593.7 1653.6,593.7 1659.6,590.7 1665.6,592.7 1671.6,593.7 1677.6,595.7 1683.6,595.7" fill="none" stroke="#a5a5a5" stroke-width="2.1" stroke-linejoin="round"/><circle cx="1389.1" cy="574.8" r="1.7" fill="#a5a5a5" stroke="#a5a5a5" stroke-width="0.7"/><circle cx="1395.1" cy="575.8" r="1.7" fill="#a5a5a5" stroke="#a5a5a5" stroke-width="0.7"/><circle cx="1401.1" cy="575.8" r="1.7" fill="#a5a5a5" stroke="#a5a5a5" stroke-width="0.7"/><circle cx="1407.1" cy="576.8" r="1.7" fill="#a5a5a5" stroke="#a5a5a5" stroke-width="0.7"/><circle cx="1413.2" cy="575.8" r="1.7" fill="#a5a5a5" stroke="#a5a5a5" stroke-width="0.7"/><circle cx="1419.2" cy="573.9" r="1.7" fill="#a5a5a5" stroke="#a5a5a5" stroke-width="0.7"/><circle cx="1425.2" cy="574.8" r="1.7" fill="#a5a5a5" stroke="#a5a5a5" stroke-width="0.7"/><circle cx="1431.2" cy="576.8" r="1.7" fill="#a5a5a5" stroke="#a5a5a5" stroke-width="0.7"/><circle cx="1437.2" cy="576.8" r="1.7" fill="#a5a5a5" stroke="#a5a5a5" stroke-width="0.7"/><circle cx="1443.2" cy="577.8" r="1.7" fill="#a5a5a5" stroke="#a5a5a5" stroke-width="0.7"/><circle cx="1449.2" cy="581.8" r="1.7" fill="#a5a5a5" stroke="#a5a5a5" stroke-width="0.7"/><circle cx="1455.2" cy="583.8" r="1.7" fill="#a5a5a5" stroke="#a5a5a5" stroke-width="0.7"/><circle cx="1461.2" cy="584.8" r="1.7" fill="#a5a5a5" stroke="#a5a5a5" stroke-width="0.7"/><circle cx="1467.3" cy="583.8" r="1.7" fill="#a5a5a5" stroke="#a5a5a5" stroke-width="0.7"/><circle cx="1473.3" cy="581.8" r="1.7" fill="#a5a5a5" stroke="#a5a5a5" stroke-width="0.7"/><circle cx="1479.3" cy="579.8" r="1.7" fill="#a5a5a5" stroke="#a5a5a5" stroke-width="0.7"/><circle cx="1485.3" cy="581.8" r="1.7" fill="#a5a5a5" stroke="#a5a5a5" stroke-width="0.7"/><circle cx="1491.3" cy="585.8" r="1.7" fill="#a5a5a5" stroke="#a5a5a5" stroke-width="0.7"/><circle cx="1497.3" cy="585.8" r="1.7" fill="#a5a5a5" stroke="#a5a5a5" stroke-width="0.7"/><circle cx="1503.3" cy="585.8" r="1.7" fill="#a5a5a5" stroke="#a5a5a5" stroke-width="0.7"/><circle cx="1509.3" cy="588.8" r="1.7" fill="#a5a5a5" stroke="#a5a5a5" stroke-width="0.7"/><circle cx="1515.3" cy="588.8" r="1.7" fill="#a5a5a5" stroke="#a5a5a5" stroke-width="0.7"/><circle cx="1521.4" cy="588.8" r="1.7" fill="#a5a5a5" stroke="#a5a5a5" stroke-width="0.7"/><circle cx="1527.4" cy="589.8" r="1.7" fill="#a5a5a5" stroke="#a5a5a5" stroke-width="0.7"/><circle cx="1533.4" cy="586.8" r="1.7" fill="#a5a5a5" stroke="#a5a5a5" stroke-width="0.7"/><circle cx="1539.4" cy="586.8" r="1.7" fill="#a5a5a5" stroke="#a5a5a5" stroke-width="0.7"/><circle cx="1545.4" cy="586.8" r="1.7" fill="#a5a5a5" stroke="#a5a5a5" stroke-width="0.7"/><circle cx="1551.4" cy="584.8" r="1.7" fill="#a5a5a5" stroke="#a5a5a5" stroke-width="0.7"/><circle cx="1557.4" cy="583.8" r="1.7" fill="#a5a5a5" stroke="#a5a5a5" stroke-width="0.7"/><circle cx="1563.4" cy="584.8" r="1.7" fill="#a5a5a5" stroke="#a5a5a5" stroke-width="0.7"/><circle cx="1569.4" cy="584.8" r="1.7" fill="#a5a5a5" stroke="#a5a5a5" stroke-width="0.7"/><circle cx="1575.5" cy="587.8" r="1.7" fill="#a5a5a5" stroke="#a5a5a5" stroke-width="0.7"/><circle cx="1581.5" cy="588.8" r="1.7" fill="#a5a5a5" stroke="#a5a5a5" stroke-width="0.7"/><circle cx="1587.5" cy="588.8" r="1.7" fill="#a5a5a5" stroke="#a5a5a5" stroke-width="0.7"/><circle cx="1593.5" cy="589.8" r="1.7" fill="#a5a5a5" stroke="#a5a5a5" stroke-width="0.7"/><circle cx="1599.5" cy="589.8" r="1.7" fill="#a5a5a5" stroke="#a5a5a5" stroke-width="0.7"/><circle cx="1605.5" cy="590.7" r="1.7" fill="#a5a5a5" stroke="#a5a5a5" stroke-width="0.7"/><circle cx="1611.5" cy="592.7" r="1.7" fill="#a5a5a5" stroke="#a5a5a5" stroke-width="0.7"/><circle cx="1617.5" cy="595.7" r="1.7" fill="#a5a5a5" stroke="#a5a5a5" stroke-width="0.7"/><circle cx="1623.5" cy="597.7" r="1.7" fill="#a5a5a5" stroke="#a5a5a5" stroke-width="0.7"/><circle cx="1629.5" cy="596.7" r="1.7" fill="#a5a5a5" stroke="#a5a5a5" stroke-width="0.7"/><circle cx="1635.6" cy="596.7" r="1.7" fill="#a5a5a5" stroke="#a5a5a5" stroke-width="0.7"/><circle cx="1641.6" cy="594.7" r="1.7" fill="#a5a5a5" stroke="#a5a5a5" stroke-width="0.7"/><circle cx="1647.6" cy="593.7" r="1.7" fill="#a5a5a5" stroke="#a5a5a5" stroke-width="0.7"/><circle cx="1653.6" cy="593.7" r="1.7" fill="#a5a5a5" stroke="#a5a5a5" stroke-width="0.7"/><circle cx="1659.6" cy="590.7" r="1.7" fill="#a5a5a5" stroke="#a5a5a5" stroke-width="0.7"/><circle cx="1665.6" cy="592.7" r="1.7" fill="#a5a5a5" stroke="#a5a5a5" stroke-width="0.7"/><circle cx="1671.6" cy="593.7" r="1.7" fill="#a5a5a5" stroke="#a5a5a5" stroke-width="0.7"/><circle cx="1677.6" cy="595.7" r="1.7" fill="#a5a5a5" stroke="#a5a5a5" stroke-width="0.7"/><circle cx="1683.6" cy="595.7" r="1.7" fill="#a5a5a5" stroke="#a5a5a5" stroke-width="0.7"/><path d="M1389.7 509.3L1684.2 641.4" stroke="#0000c8" stroke-width="1.8"/><circle cx="1460.4" cy="442.4" r="4.8" fill="#f00" stroke="#4472c4" stroke-width="1.6"/><rect x="1544" y="414.500" width="174.200" height="49.800" fill="#8a8a8a" opacity=".45"/><rect x="1542.300" y="412.500" width="174.200" height="49.800" fill="#ffe699" stroke="#0000c8" stroke-width="1"/><text x="1544.1" y="432.8" font-size="16" textLength="167.5" lengthAdjust="spacingAndGlyphs" fill="#595959">y = -0,0027x + 5,6098</text><text x="1583.9" y="455.8" font-size="16" textLength="88.0" lengthAdjust="spacingAndGlyphs" fill="#595959">R² = 0,9794</text><rect x="1368.4" y="663.4" width="329.200" height="62" fill="#ffd966" stroke="#4472c4" stroke-width="1"/><path d="M1389.2 674h15.3" stroke="#4472c4" stroke-width="2"/><circle cx="1396.8" cy="674" r="1.5" fill="#4472c4"/><text x="1405.4" y="678.6" font-size="13.2" textLength="262.5" lengthAdjust="spacingAndGlyphs" fill="#595959">Горно+ЗАВОДЫ+ЖКХ+Строй (ISIC C-F)</text><path d="M1389.2 694h15.3" stroke="#f00" stroke-width="2"/><circle cx="1396.8" cy="694" r="1.5" fill="#f00"/><text x="1405.4" y="698.6" font-size="13.2" textLength="152.0" lengthAdjust="spacingAndGlyphs" fill="#595959">Производство (ISIC D)</text><path d="M1389.2 714.7h15.3" stroke="#a5a5a5" stroke-width="2"/><circle cx="1396.8" cy="714.7" r="1.5" fill="#a5a5a5"/><text x="1405.4" y="719.3" font-size="13.2" textLength="270.5" lengthAdjust="spacingAndGlyphs" fill="#595959">ТОРОВЛЯ+ОТЕЛИ+РЕСТОРАН (ISIC G-H)</text><rect x="1760.7" y="383" width="441.89999999999986" height="423" fill="#fff" stroke="#d9d9d9" stroke-width="1.2"/><path d="M1805.6 749.9H2197.7" stroke="#d9d9d9" stroke-width="1.2"/><text x="1789.7" y="754.1" font-size="14.5" text-anchor="end" fill="#595959">0%</text><path d="M1805.6 690.4H2197.7" stroke="#d9d9d9" stroke-width="1.2"/><text x="1789.7" y="694.6" font-size="14.5" text-anchor="end" fill="#595959">5%</text><path d="M1805.6 631.0H2197.7" stroke="#d9d9d9" stroke-width="1.2"/><text x="1789.7" y="635.2" font-size="14.5" text-anchor="end" fill="#595959">10%</text><path d="M1805.6 571.5H2197.7" stroke="#d9d9d9" stroke-width="1.2"/><text x="1789.7" y="575.8" font-size="14.5" text-anchor="end" fill="#595959">15%</text><path d="M1805.6 512.1H2197.7" stroke="#d9d9d9" stroke-width="1.2"/><text x="1789.7" y="516.3" font-size="14.5" text-anchor="end" fill="#595959">20%</text><path d="M1805.6 452.6H2197.7" stroke="#d9d9d9" stroke-width="1.2"/><text x="1789.7" y="456.8" font-size="14.5" text-anchor="end" fill="#595959">25%</text><path d="M1805.6 393.2H2197.7" stroke="#d9d9d9" stroke-width="1.2"/><text x="1789.7" y="397.4" font-size="14.5" text-anchor="end" fill="#595959">30%</text><g clip-path="url(#k3)"><text x="1810.8" y="795.0" font-size="14.5" fill="#595959" transform="rotate(-90 1810.8 795.0)">1960</text><text x="1866.8" y="795.0" font-size="14.5" fill="#595959" transform="rotate(-90 1866.8 795.0)">1970</text><text x="1922.8" y="795.0" font-size="14.5" fill="#595959" transform="rotate(-90 1922.8 795.0)">1980</text><text x="1978.9" y="795.0" font-size="14.5" fill="#595959" transform="rotate(-90 1978.9 795.0)">1990</text><text x="2034.9" y="795.0" font-size="14.5" fill="#595959" transform="rotate(-90 2034.9 795.0)">2000</text><text x="2090.9" y="795.0" font-size="14.5" fill="#595959" transform="rotate(-90 2090.9 795.0)">2010</text><text x="2146.9" y="795.0" font-size="14.5" fill="#595959" transform="rotate(-90 2146.9 795.0)">2020</text><text x="2202.9" y="795.0" font-size="14.5" fill="#595959" transform="rotate(-90 2202.9 795.0)">2030</text></g><polyline points="1861.6,418.2 1867.2,425.3 1872.8,422.9 1878.4,417.0 1884.0,431.2 1889.6,449.1 1895.2,441.9 1900.8,438.4 1906.4,443.1 1912.0,453.8 1917.6,468.1 1923.2,475.2 1928.8,487.1 1934.4,489.5 1940.0,481.2 1945.6,477.6 1951.3,487.1 1956.9,483.6 1962.5,476.4 1968.1,484.8 1973.7,489.5 1979.3,500.2 1984.9,505.0 1990.5,502.6 1996.1,494.3 2001.7,490.7 2007.3,493.1 2012.9,495.5 2018.5,495.5 2024.1,493.1 2029.7,493.1 2035.3,503.8 2040.9,507.3 2046.5,507.3 2052.1,502.6 2057.7,507.3 2063.3,503.8 2068.9,502.6 2074.5,510.9 2080.1,522.8 2085.7,524.0 2091.3,526.4 2096.9,527.6 2102.5,525.2 2108.1,525.2 2113.7,526.4 2119.3,529.9 2124.9,529.9 2130.5,527.6 2136.1,527.6" fill="none" stroke="#4472c4" stroke-width="2.1" stroke-linejoin="round"/><circle cx="1861.6" cy="418.2" r="1.8" fill="#4472c4"/><circle cx="1867.2" cy="425.3" r="1.8" fill="#4472c4"/><circle cx="1872.8" cy="422.9" r="1.8" fill="#4472c4"/><circle cx="1878.4" cy="417.0" r="1.8" fill="#4472c4"/><circle cx="1884.0" cy="431.2" r="1.8" fill="#4472c4"/><circle cx="1889.6" cy="449.1" r="1.8" fill="#4472c4"/><circle cx="1895.2" cy="441.9" r="1.8" fill="#4472c4"/><circle cx="1900.8" cy="438.4" r="1.8" fill="#4472c4"/><circle cx="1906.4" cy="443.1" r="1.8" fill="#4472c4"/><circle cx="1912.0" cy="453.8" r="1.8" fill="#4472c4"/><circle cx="1917.6" cy="468.1" r="1.8" fill="#4472c4"/><circle cx="1923.2" cy="475.2" r="1.8" fill="#4472c4"/><circle cx="1928.8" cy="487.1" r="1.8" fill="#4472c4"/><circle cx="1934.4" cy="489.5" r="1.8" fill="#4472c4"/><circle cx="1940.0" cy="481.2" r="1.8" fill="#4472c4"/><circle cx="1945.6" cy="477.6" r="1.8" fill="#4472c4"/><circle cx="1951.3" cy="487.1" r="1.8" fill="#4472c4"/><circle cx="1956.9" cy="483.6" r="1.8" fill="#4472c4"/><circle cx="1962.5" cy="476.4" r="1.8" fill="#4472c4"/><circle cx="1968.1" cy="484.8" r="1.8" fill="#4472c4"/><circle cx="1973.7" cy="489.5" r="1.8" fill="#4472c4"/><circle cx="1979.3" cy="500.2" r="1.8" fill="#4472c4"/><circle cx="1984.9" cy="505.0" r="1.8" fill="#4472c4"/><circle cx="1990.5" cy="502.6" r="1.8" fill="#4472c4"/><circle cx="1996.1" cy="494.3" r="1.8" fill="#4472c4"/><circle cx="2001.7" cy="490.7" r="1.8" fill="#4472c4"/><circle cx="2007.3" cy="493.1" r="1.8" fill="#4472c4"/><circle cx="2012.9" cy="495.5" r="1.8" fill="#4472c4"/><circle cx="2018.5" cy="495.5" r="1.8" fill="#4472c4"/><circle cx="2024.1" cy="493.1" r="1.8" fill="#4472c4"/><circle cx="2029.7" cy="493.1" r="1.8" fill="#4472c4"/><circle cx="2035.3" cy="503.8" r="1.8" fill="#4472c4"/><circle cx="2040.9" cy="507.3" r="1.8" fill="#4472c4"/><circle cx="2046.5" cy="507.3" r="1.8" fill="#4472c4"/><circle cx="2052.1" cy="502.6" r="1.8" fill="#4472c4"/><circle cx="2057.7" cy="507.3" r="1.8" fill="#4472c4"/><circle cx="2063.3" cy="503.8" r="1.8" fill="#4472c4"/><circle cx="2068.9" cy="502.6" r="1.8" fill="#4472c4"/><circle cx="2074.5" cy="510.9" r="1.8" fill="#4472c4"/><circle cx="2080.1" cy="522.8" r="1.8" fill="#4472c4"/><circle cx="2085.7" cy="524.0" r="1.8" fill="#4472c4"/><circle cx="2091.3" cy="526.4" r="1.8" fill="#4472c4"/><circle cx="2096.9" cy="527.6" r="1.8" fill="#4472c4"/><circle cx="2102.5" cy="525.2" r="1.8" fill="#4472c4"/><circle cx="2108.1" cy="525.2" r="1.8" fill="#4472c4"/><circle cx="2113.7" cy="526.4" r="1.8" fill="#4472c4"/><circle cx="2119.3" cy="529.9" r="1.8" fill="#4472c4"/><circle cx="2124.9" cy="529.9" r="1.8" fill="#4472c4"/><circle cx="2130.5" cy="527.6" r="1.8" fill="#4472c4"/><circle cx="2136.1" cy="527.6" r="1.8" fill="#4472c4"/><polyline points="1861.6,596.5 1867.2,597.7 1872.8,594.1 1878.4,585.8 1884.0,591.8 1889.6,601.3 1895.2,596.5 1900.8,596.5 1906.4,596.5 1912.0,600.1 1917.6,610.8 1923.2,607.2 1928.8,615.5 1934.4,614.4 1940.0,612.0 1945.6,613.2 1951.3,616.7 1956.9,612.0 1962.5,607.2 1968.1,613.2 1973.7,615.5 1979.3,620.3 1984.9,621.5 1990.5,619.1 1996.1,614.4 2001.7,608.4 2007.3,612.0 2012.9,610.8 2018.5,609.6 2024.1,608.4 2029.7,602.5 2035.3,610.8 2040.9,612.0 2046.5,607.2 2052.1,602.5 2057.7,603.7 2063.3,598.9 2068.9,595.3 2074.5,598.9 2080.1,609.6 2085.7,603.7 2091.3,606.0 2096.9,609.6 2102.5,607.2 2108.1,608.4 2113.7,612.0 2119.3,614.4 2124.9,614.4 2130.5,612.0 2136.1,613.2" fill="none" stroke="#ed7d31" stroke-width="2.1" stroke-linejoin="round"/><circle cx="1861.6" cy="596.5" r="1.8" fill="#ed7d31"/><circle cx="1867.2" cy="597.7" r="1.8" fill="#ed7d31"/><circle cx="1872.8" cy="594.1" r="1.8" fill="#ed7d31"/><circle cx="1878.4" cy="585.8" r="1.8" fill="#ed7d31"/><circle cx="1884.0" cy="591.8" r="1.8" fill="#ed7d31"/><circle cx="1889.6" cy="601.3" r="1.8" fill="#ed7d31"/><circle cx="1895.2" cy="596.5" r="1.8" fill="#ed7d31"/><circle cx="1900.8" cy="596.5" r="1.8" fill="#ed7d31"/><circle cx="1906.4" cy="596.5" r="1.8" fill="#ed7d31"/><circle cx="1912.0" cy="600.1" r="1.8" fill="#ed7d31"/><circle cx="1917.6" cy="610.8" r="1.8" fill="#ed7d31"/><circle cx="1923.2" cy="607.2" r="1.8" fill="#ed7d31"/><circle cx="1928.8" cy="615.5" r="1.8" fill="#ed7d31"/><circle cx="1934.4" cy="614.4" r="1.8" fill="#ed7d31"/><circle cx="1940.0" cy="612.0" r="1.8" fill="#ed7d31"/><circle cx="1945.6" cy="613.2" r="1.8" fill="#ed7d31"/><circle cx="1951.3" cy="616.7" r="1.8" fill="#ed7d31"/><circle cx="1956.9" cy="612.0" r="1.8" fill="#ed7d31"/><circle cx="1962.5" cy="607.2" r="1.8" fill="#ed7d31"/><circle cx="1968.1" cy="613.2" r="1.8" fill="#ed7d31"/><circle cx="1973.7" cy="615.5" r="1.8" fill="#ed7d31"/><circle cx="1979.3" cy="620.3" r="1.8" fill="#ed7d31"/><circle cx="1984.9" cy="621.5" r="1.8" fill="#ed7d31"/><circle cx="1990.5" cy="619.1" r="1.8" fill="#ed7d31"/><circle cx="1996.1" cy="614.4" r="1.8" fill="#ed7d31"/><circle cx="2001.7" cy="608.4" r="1.8" fill="#ed7d31"/><circle cx="2007.3" cy="612.0" r="1.8" fill="#ed7d31"/><circle cx="2012.9" cy="610.8" r="1.8" fill="#ed7d31"/><circle cx="2018.5" cy="609.6" r="1.8" fill="#ed7d31"/><circle cx="2024.1" cy="608.4" r="1.8" fill="#ed7d31"/><circle cx="2029.7" cy="602.5" r="1.8" fill="#ed7d31"/><circle cx="2035.3" cy="610.8" r="1.8" fill="#ed7d31"/><circle cx="2040.9" cy="612.0" r="1.8" fill="#ed7d31"/><circle cx="2046.5" cy="607.2" r="1.8" fill="#ed7d31"/><circle cx="2052.1" cy="602.5" r="1.8" fill="#ed7d31"/><circle cx="2057.7" cy="603.7" r="1.8" fill="#ed7d31"/><circle cx="2063.3" cy="598.9" r="1.8" fill="#ed7d31"/><circle cx="2068.9" cy="595.3" r="1.8" fill="#ed7d31"/><circle cx="2074.5" cy="598.9" r="1.8" fill="#ed7d31"/><circle cx="2080.1" cy="609.6" r="1.8" fill="#ed7d31"/><circle cx="2085.7" cy="603.7" r="1.8" fill="#ed7d31"/><circle cx="2091.3" cy="606.0" r="1.8" fill="#ed7d31"/><circle cx="2096.9" cy="609.6" r="1.8" fill="#ed7d31"/><circle cx="2102.5" cy="607.2" r="1.8" fill="#ed7d31"/><circle cx="2108.1" cy="608.4" r="1.8" fill="#ed7d31"/><circle cx="2113.7" cy="612.0" r="1.8" fill="#ed7d31"/><circle cx="2119.3" cy="614.4" r="1.8" fill="#ed7d31"/><circle cx="2124.9" cy="614.4" r="1.8" fill="#ed7d31"/><circle cx="2130.5" cy="612.0" r="1.8" fill="#ed7d31"/><circle cx="2136.1" cy="613.2" r="1.8" fill="#ed7d31"/><polyline points="1861.6,627.4 1867.2,625.1 1872.8,621.5 1878.4,620.3 1884.0,622.7 1889.6,620.3 1895.2,619.1 1900.8,616.7 1906.4,614.4 1912.0,615.5 1917.6,621.5 1923.2,616.7 1928.8,613.2 1934.4,607.2 1940.0,602.5 1945.6,598.9 1951.3,589.4 1956.9,598.9 1962.5,596.5 1968.1,594.1 1973.7,596.5 1979.3,595.3 1984.9,593.0 1990.5,593.0 1996.1,589.4 2001.7,590.6 2007.3,583.4 2012.9,577.5 2018.5,570.4 2024.1,570.4 2029.7,569.2 2035.3,568.0 2040.9,566.8 2046.5,562.0 2052.1,562.0 2057.7,562.0 2063.3,563.2 2068.9,566.8 2074.5,569.2 2080.1,579.9 2085.7,577.5 2091.3,577.5 2096.9,577.5 2102.5,575.1 2108.1,573.9 2113.7,572.7 2119.3,573.9 2124.9,573.9 2130.5,576.3 2136.1,579.9" fill="none" stroke="#a5a5a5" stroke-width="2.1" stroke-linejoin="round"/><circle cx="1861.6" cy="627.4" r="1.8" fill="#a5a5a5"/><circle cx="1867.2" cy="625.1" r="1.8" fill="#a5a5a5"/><circle cx="1872.8" cy="621.5" r="1.8" fill="#a5a5a5"/><circle cx="1878.4" cy="620.3" r="1.8" fill="#a5a5a5"/><circle cx="1884.0" cy="622.7" r="1.8" fill="#a5a5a5"/><circle cx="1889.6" cy="620.3" r="1.8" fill="#a5a5a5"/><circle cx="1895.2" cy="619.1" r="1.8" fill="#a5a5a5"/><circle cx="1900.8" cy="616.7" r="1.8" fill="#a5a5a5"/><circle cx="1906.4" cy="614.4" r="1.8" fill="#a5a5a5"/><circle cx="1912.0" cy="615.5" r="1.8" fill="#a5a5a5"/><circle cx="1917.6" cy="621.5" r="1.8" fill="#a5a5a5"/><circle cx="1923.2" cy="616.7" r="1.8" fill="#a5a5a5"/><circle cx="1928.8" cy="613.2" r="1.8" fill="#a5a5a5"/><circle cx="1934.4" cy="607.2" r="1.8" fill="#a5a5a5"/><circle cx="1940.0" cy="602.5" r="1.8" fill="#a5a5a5"/><circle cx="1945.6" cy="598.9" r="1.8" fill="#a5a5a5"/><circle cx="1951.3" cy="589.4" r="1.8" fill="#a5a5a5"/><circle cx="1956.9" cy="598.9" r="1.8" fill="#a5a5a5"/><circle cx="1962.5" cy="596.5" r="1.8" fill="#a5a5a5"/><circle cx="1968.1" cy="594.1" r="1.8" fill="#a5a5a5"/><circle cx="1973.7" cy="596.5" r="1.8" fill="#a5a5a5"/><circle cx="1979.3" cy="595.3" r="1.8" fill="#a5a5a5"/><circle cx="1984.9" cy="593.0" r="1.8" fill="#a5a5a5"/><circle cx="1990.5" cy="593.0" r="1.8" fill="#a5a5a5"/><circle cx="1996.1" cy="589.4" r="1.8" fill="#a5a5a5"/><circle cx="2001.7" cy="590.6" r="1.8" fill="#a5a5a5"/><circle cx="2007.3" cy="583.4" r="1.8" fill="#a5a5a5"/><circle cx="2012.9" cy="577.5" r="1.8" fill="#a5a5a5"/><circle cx="2018.5" cy="570.4" r="1.8" fill="#a5a5a5"/><circle cx="2024.1" cy="570.4" r="1.8" fill="#a5a5a5"/><circle cx="2029.7" cy="569.2" r="1.8" fill="#a5a5a5"/><circle cx="2035.3" cy="568.0" r="1.8" fill="#a5a5a5"/><circle cx="2040.9" cy="566.8" r="1.8" fill="#a5a5a5"/><circle cx="2046.5" cy="562.0" r="1.8" fill="#a5a5a5"/><circle cx="2052.1" cy="562.0" r="1.8" fill="#a5a5a5"/><circle cx="2057.7" cy="562.0" r="1.8" fill="#a5a5a5"/><circle cx="2063.3" cy="563.2" r="1.8" fill="#a5a5a5"/><circle cx="2068.9" cy="566.8" r="1.8" fill="#a5a5a5"/><circle cx="2074.5" cy="569.2" r="1.8" fill="#a5a5a5"/><circle cx="2080.1" cy="579.9" r="1.8" fill="#a5a5a5"/><circle cx="2085.7" cy="577.5" r="1.8" fill="#a5a5a5"/><circle cx="2091.3" cy="577.5" r="1.8" fill="#a5a5a5"/><circle cx="2096.9" cy="577.5" r="1.8" fill="#a5a5a5"/><circle cx="2102.5" cy="575.1" r="1.8" fill="#a5a5a5"/><circle cx="2108.1" cy="573.9" r="1.8" fill="#a5a5a5"/><circle cx="2113.7" cy="572.7" r="1.8" fill="#a5a5a5"/><circle cx="2119.3" cy="573.9" r="1.8" fill="#a5a5a5"/><circle cx="2124.9" cy="573.9" r="1.8" fill="#a5a5a5"/><circle cx="2130.5" cy="576.3" r="1.8" fill="#a5a5a5"/><circle cx="2136.1" cy="579.9" r="1.8" fill="#a5a5a5"/><circle cx="1927.3" cy="487.4" r="4.8" fill="#f00" stroke="#4472c4" stroke-width="1.6"/><rect x="1832.5" y="661.9" width="273.900" height="65.100" fill="#f8cbad" stroke="#4472c4" stroke-width="1"/><path d="M1837.1 672.6h14.4" stroke="#4472c4" stroke-width="2"/><circle cx="1844.3" cy="672.6" r="1.5" fill="#4472c4"/><text x="1852.4" y="676.9" font-size="12.3" textLength="240.8" lengthAdjust="spacingAndGlyphs" fill="#595959">Горно+ЗАВОДЫ+ЖКХ+Строй (ISIC C-F)</text><path d="M1837.1 694.6h14.4" stroke="#ed7d31" stroke-width="2"/><circle cx="1844.3" cy="694.6" r="1.5" fill="#ed7d31"/><text x="1852.4" y="698.9" font-size="12.3" textLength="139.0" lengthAdjust="spacingAndGlyphs" fill="#595959">Производство (ISIC D)</text><path d="M1837.1 716.9h14.4" stroke="#a5a5a5" stroke-width="2"/><circle cx="1844.3" cy="716.9" r="1.5" fill="#a5a5a5"/><text x="1852.4" y="721.2" font-size="12.3" textLength="248.0" lengthAdjust="spacingAndGlyphs" fill="#595959">ТОРОВЛЯ+ОТЕЛИ+РЕСТОРАН (ISIC G-H)</text><rect x="689.5" y="806.5" width="744.5" height="300.79999999999995" fill="#fff" stroke="#d9d9d9" stroke-width="1.2"/><path d="M750.4 1061.3H1424.7" stroke="#d9d9d9" stroke-width="1.2"/><text x="738.5" y="1065.3" font-size="10.6" text-anchor="end" fill="#595959">0,0%</text><path d="M750.4 1018.4H1424.7" stroke="#d9d9d9" stroke-width="1.2"/><text x="738.5" y="1022.4" font-size="10.6" text-anchor="end" fill="#595959">5,0%</text><path d="M750.4 975.5H1424.7" stroke="#d9d9d9" stroke-width="1.2"/><text x="738.5" y="979.5" font-size="10.6" text-anchor="end" fill="#595959">10,0%</text><path d="M750.4 932.7H1424.7" stroke="#d9d9d9" stroke-width="1.2"/><text x="738.5" y="936.7" font-size="10.6" text-anchor="end" fill="#595959">15,0%</text><path d="M750.4 889.8H1424.7" stroke="#d9d9d9" stroke-width="1.2"/><text x="738.5" y="893.8" font-size="10.6" text-anchor="end" fill="#595959">20,0%</text><path d="M750.4 846.9H1424.7" stroke="#d9d9d9" stroke-width="1.2"/><text x="738.5" y="850.9" font-size="10.6" text-anchor="end" fill="#595959">25,0%</text><path d="M750.4 846.9V1061.3" stroke="#d9d9d9" stroke-width="1.2"/><path d="M777.9 846.9V1061.3" stroke="#d9d9d9" stroke-width="1.2"/><path d="M805.5 846.9V1061.3" stroke="#d9d9d9" stroke-width="1.2"/><path d="M833.0 846.9V1061.3" stroke="#d9d9d9" stroke-width="1.2"/><path d="M860.5 846.9V1061.3" stroke="#d9d9d9" stroke-width="1.2"/><path d="M888.0 846.9V1061.3" stroke="#d9d9d9" stroke-width="1.2"/><path d="M915.6 846.9V1061.3" stroke="#d9d9d9" stroke-width="1.2"/><path d="M943.1 846.9V1061.3" stroke="#d9d9d9" stroke-width="1.2"/><path d="M970.6 846.9V1061.3" stroke="#d9d9d9" stroke-width="1.2"/><path d="M998.1 846.9V1061.3" stroke="#d9d9d9" stroke-width="1.2"/><path d="M1025.7 846.9V1061.3" stroke="#d9d9d9" stroke-width="1.2"/><path d="M1053.2 846.9V1061.3" stroke="#d9d9d9" stroke-width="1.2"/><path d="M1080.7 846.9V1061.3" stroke="#d9d9d9" stroke-width="1.2"/><path d="M1108.2 846.9V1061.3" stroke="#d9d9d9" stroke-width="1.2"/><path d="M1135.8 846.9V1061.3" stroke="#d9d9d9" stroke-width="1.2"/><path d="M1163.3 846.9V1061.3" stroke="#d9d9d9" stroke-width="1.2"/><path d="M1190.8 846.9V1061.3" stroke="#d9d9d9" stroke-width="1.2"/><path d="M1218.3 846.9V1061.3" stroke="#d9d9d9" stroke-width="1.2"/><path d="M1245.9 846.9V1061.3" stroke="#d9d9d9" stroke-width="1.2"/><path d="M1273.4 846.9V1061.3" stroke="#d9d9d9" stroke-width="1.2"/><path d="M1300.9 846.9V1061.3" stroke="#d9d9d9" stroke-width="1.2"/><path d="M1328.4 846.9V1061.3" stroke="#d9d9d9" stroke-width="1.2"/><path d="M1356.0 846.9V1061.3" stroke="#d9d9d9" stroke-width="1.2"/><path d="M1383.5 846.9V1061.3" stroke="#d9d9d9" stroke-width="1.2"/><path d="M1411.0 846.9V1061.3" stroke="#d9d9d9" stroke-width="1.2"/><path d="M1424.7 846.9V1061.3" stroke="#d9d9d9" stroke-width="1.2"/><text x="755.0" y="1100.5" font-size="12.6" fill="#595959" transform="rotate(-90 755.0 1100.5)">1971</text><text x="782.5" y="1100.5" font-size="12.6" fill="#595959" transform="rotate(-90 782.5 1100.5)">1973</text><text x="810.1" y="1100.5" font-size="12.6" fill="#595959" transform="rotate(-90 810.1 1100.5)">1975</text><text x="837.6" y="1100.5" font-size="12.6" fill="#595959" transform="rotate(-90 837.6 1100.5)">1977</text><text x="865.1" y="1100.5" font-size="12.6" fill="#595959" transform="rotate(-90 865.1 1100.5)">1979</text><text x="892.6" y="1100.5" font-size="12.6" fill="#595959" transform="rotate(-90 892.6 1100.5)">1981</text><text x="920.2" y="1100.5" font-size="12.6" fill="#595959" transform="rotate(-90 920.2 1100.5)">1983</text><text x="947.7" y="1100.5" font-size="12.6" fill="#595959" transform="rotate(-90 947.7 1100.5)">1985</text><text x="975.2" y="1100.5" font-size="12.6" fill="#595959" transform="rotate(-90 975.2 1100.5)">1987</text><text x="1002.7" y="1100.5" font-size="12.6" fill="#595959" transform="rotate(-90 1002.7 1100.5)">1989</text><text x="1030.3" y="1100.5" font-size="12.6" fill="#595959" transform="rotate(-90 1030.3 1100.5)">1991</text><text x="1057.8" y="1100.5" font-size="12.6" fill="#595959" transform="rotate(-90 1057.8 1100.5)">1993</text><text x="1085.3" y="1100.5" font-size="12.6" fill="#595959" transform="rotate(-90 1085.3 1100.5)">1995</text><text x="1112.8" y="1100.5" font-size="12.6" fill="#595959" transform="rotate(-90 1112.8 1100.5)">1997</text><text x="1140.4" y="1100.5" font-size="12.6" fill="#595959" transform="rotate(-90 1140.4 1100.5)">1999</text><text x="1167.9" y="1100.5" font-size="12.6" fill="#595959" transform="rotate(-90 1167.9 1100.5)">2001</text><text x="1195.4" y="1100.5" font-size="12.6" fill="#595959" transform="rotate(-90 1195.4 1100.5)">2003</text><text x="1222.9" y="1100.5" font-size="12.6" fill="#595959" transform="rotate(-90 1222.9 1100.5)">2005</text><text x="1250.5" y="1100.5" font-size="12.6" fill="#595959" transform="rotate(-90 1250.5 1100.5)">2007</text><text x="1278.0" y="1100.5" font-size="12.6" fill="#595959" transform="rotate(-90 1278.0 1100.5)">2009</text><text x="1305.5" y="1100.5" font-size="12.6" fill="#595959" transform="rotate(-90 1305.5 1100.5)">2011</text><text x="1333.0" y="1100.5" font-size="12.6" fill="#595959" transform="rotate(-90 1333.0 1100.5)">2013</text><text x="1360.6" y="1100.5" font-size="12.6" fill="#595959" transform="rotate(-90 1360.6 1100.5)">2015</text><text x="1388.1" y="1100.5" font-size="12.6" fill="#595959" transform="rotate(-90 1388.1 1100.5)">2017</text><text x="1415.6" y="1100.5" font-size="12.6" fill="#595959" transform="rotate(-90 1415.6 1100.5)">2019</text><rect x="915.2" y="810.4" width="293.3" height="23.1" fill="#ffe699"/><text x="917.5" y="827.6" font-size="15" textLength="285.0" lengthAdjust="spacingAndGlyphs" font-weight="bold" fill="#595959">Производство стали США % от МИРА</text><polyline points="750.4,900.1 764.2,896.7 777.9,893.2 791.7,900.9 805.5,919.8 819.2,913.8 833.0,917.2 846.7,912.1 860.5,919.0 874.3,938.7 888.0,927.5 901.8,970.4 915.6,961.8 929.3,960.1 943.1,964.4 956.8,971.3 970.6,967.0 984.4,961.0 998.1,963.5 1011.9,979.8 1025.7,985.8 1039.4,979.0 1053.2,979.0 1066.9,978.1 1080.7,978.1 1094.5,979.0 1108.2,983.3 1122.0,984.1 1135.8,987.6 1149.5,957.5 1163.3,969.5 1177.1,973.8 1190.8,978.1 1204.6,980.7 1218.3,990.1 1232.1,992.7 1245.9,997.8 1259.6,1002.1 1273.4,1020.1 1287.2,1013.3 1300.9,1013.3 1314.7,1011.6 1328.4,1015.9 1342.2,1016.7 1356.0,1018.4 1369.7,1019.3 1383.5,1018.4 1397.3,1020.1 1411.0,1021.0" fill="none" stroke="#548235" stroke-width="1.8" stroke-linejoin="round"/><circle cx="750.4" cy="900.1" r="3.3" fill="#4472c4" stroke="#548235" stroke-width="0.8"/><circle cx="764.2" cy="896.7" r="3.3" fill="#4472c4" stroke="#548235" stroke-width="0.8"/><circle cx="777.9" cy="893.2" r="3.3" fill="#4472c4" stroke="#548235" stroke-width="0.8"/><circle cx="791.7" cy="900.9" r="3.3" fill="#4472c4" stroke="#548235" stroke-width="0.8"/><circle cx="805.5" cy="919.8" r="3.3" fill="#4472c4" stroke="#548235" stroke-width="0.8"/><circle cx="819.2" cy="913.8" r="3.3" fill="#4472c4" stroke="#548235" stroke-width="0.8"/><circle cx="833.0" cy="917.2" r="3.3" fill="#4472c4" stroke="#548235" stroke-width="0.8"/><circle cx="846.7" cy="912.1" r="3.3" fill="#4472c4" stroke="#548235" stroke-width="0.8"/><circle cx="860.5" cy="919.0" r="3.3" fill="#4472c4" stroke="#548235" stroke-width="0.8"/><circle cx="874.3" cy="938.7" r="3.3" fill="#4472c4" stroke="#548235" stroke-width="0.8"/><circle cx="888.0" cy="927.5" r="3.3" fill="#4472c4" stroke="#548235" stroke-width="0.8"/><circle cx="901.8" cy="970.4" r="3.3" fill="#4472c4" stroke="#548235" stroke-width="0.8"/><circle cx="915.6" cy="961.8" r="3.3" fill="#4472c4" stroke="#548235" stroke-width="0.8"/><circle cx="929.3" cy="960.1" r="3.3" fill="#4472c4" stroke="#548235" stroke-width="0.8"/><circle cx="943.1" cy="964.4" r="3.3" fill="#4472c4" stroke="#548235" stroke-width="0.8"/><circle cx="956.8" cy="971.3" r="3.3" fill="#4472c4" stroke="#548235" stroke-width="0.8"/><circle cx="970.6" cy="967.0" r="3.3" fill="#4472c4" stroke="#548235" stroke-width="0.8"/><circle cx="984.4" cy="961.0" r="3.3" fill="#4472c4" stroke="#548235" stroke-width="0.8"/><circle cx="998.1" cy="963.5" r="3.3" fill="#4472c4" stroke="#548235" stroke-width="0.8"/><circle cx="1011.9" cy="979.8" r="3.3" fill="#4472c4" stroke="#548235" stroke-width="0.8"/><circle cx="1025.7" cy="985.8" r="3.3" fill="#4472c4" stroke="#548235" stroke-width="0.8"/><circle cx="1039.4" cy="979.0" r="3.3" fill="#4472c4" stroke="#548235" stroke-width="0.8"/><circle cx="1053.2" cy="979.0" r="3.3" fill="#4472c4" stroke="#548235" stroke-width="0.8"/><circle cx="1066.9" cy="978.1" r="3.3" fill="#4472c4" stroke="#548235" stroke-width="0.8"/><circle cx="1080.7" cy="978.1" r="3.3" fill="#4472c4" stroke="#548235" stroke-width="0.8"/><circle cx="1094.5" cy="979.0" r="3.3" fill="#4472c4" stroke="#548235" stroke-width="0.8"/><circle cx="1108.2" cy="983.3" r="3.3" fill="#4472c4" stroke="#548235" stroke-width="0.8"/><circle cx="1122.0" cy="984.1" r="3.3" fill="#4472c4" stroke="#548235" stroke-width="0.8"/><circle cx="1135.8" cy="987.6" r="3.3" fill="#4472c4" stroke="#548235" stroke-width="0.8"/><circle cx="1149.5" cy="957.5" r="3.3" fill="#4472c4" stroke="#548235" stroke-width="0.8"/><circle cx="1163.3" cy="969.5" r="3.3" fill="#4472c4" stroke="#548235" stroke-width="0.8"/><circle cx="1177.1" cy="973.8" r="3.3" fill="#4472c4" stroke="#548235" stroke-width="0.8"/><circle cx="1190.8" cy="978.1" r="3.3" fill="#4472c4" stroke="#548235" stroke-width="0.8"/><circle cx="1204.6" cy="980.7" r="3.3" fill="#4472c4" stroke="#548235" stroke-width="0.8"/><circle cx="1218.3" cy="990.1" r="3.3" fill="#4472c4" stroke="#548235" stroke-width="0.8"/><circle cx="1232.1" cy="992.7" r="3.3" fill="#4472c4" stroke="#548235" stroke-width="0.8"/><circle cx="1245.9" cy="997.8" r="3.3" fill="#4472c4" stroke="#548235" stroke-width="0.8"/><circle cx="1259.6" cy="1002.1" r="3.3" fill="#4472c4" stroke="#548235" stroke-width="0.8"/><circle cx="1273.4" cy="1020.1" r="3.3" fill="#4472c4" stroke="#548235" stroke-width="0.8"/><circle cx="1287.2" cy="1013.3" r="3.3" fill="#4472c4" stroke="#548235" stroke-width="0.8"/><circle cx="1300.9" cy="1013.3" r="3.3" fill="#4472c4" stroke="#548235" stroke-width="0.8"/><circle cx="1314.7" cy="1011.6" r="3.3" fill="#4472c4" stroke="#548235" stroke-width="0.8"/><circle cx="1328.4" cy="1015.9" r="3.3" fill="#4472c4" stroke="#548235" stroke-width="0.8"/><circle cx="1342.2" cy="1016.7" r="3.3" fill="#4472c4" stroke="#548235" stroke-width="0.8"/><circle cx="1356.0" cy="1018.4" r="3.3" fill="#4472c4" stroke="#548235" stroke-width="0.8"/><circle cx="1369.7" cy="1019.3" r="3.3" fill="#4472c4" stroke="#548235" stroke-width="0.8"/><circle cx="1383.5" cy="1018.4" r="3.3" fill="#4472c4" stroke="#548235" stroke-width="0.8"/><circle cx="1397.3" cy="1020.1" r="3.3" fill="#4472c4" stroke="#548235" stroke-width="0.8"/><circle cx="1411.0" cy="1021.0" r="3.3" fill="#4472c4" stroke="#548235" stroke-width="0.8"/><path d="M750.4 911.2L1411.0 1031.3" stroke="#f00" stroke-width="2"/><polyline points="750.4,899.2 764.2,903.9 777.9,908.3 791.7,912.7 805.5,916.9 819.2,921.1 833.0,925.0 846.7,928.9 860.5,932.7 874.3,936.3 888.0,939.9 901.8,943.3 915.6,946.7 929.3,949.9 943.1,953.1 956.8,956.2 970.6,959.1 984.4,962.0 998.1,964.8 1011.9,967.6 1025.7,970.2 1039.4,972.8 1053.2,975.3 1066.9,977.7 1080.7,980.1 1094.5,982.4 1108.2,984.6 1122.0,986.7 1135.8,988.8 1149.5,990.9 1163.3,992.9 1177.1,994.8 1190.8,996.7 1204.6,998.5 1218.3,1000.2 1232.1,1001.9 1245.9,1003.6 1259.6,1005.2 1273.4,1006.8 1287.2,1008.3 1300.9,1009.8 1314.7,1011.2 1328.4,1012.6 1342.2,1014.0 1356.0,1015.3 1369.7,1016.6 1383.5,1017.9 1397.3,1019.1 1411.0,1020.2" fill="none" stroke="#548235" stroke-width="1.9" stroke-linejoin="round"/><rect x="1243.5" y="871.3" width="153.2" height="57" fill="#c6e0b4" stroke="#000" stroke-width="1.2"/><text x="1245.0" y="895.0" font-size="18.5" textLength="107.0" lengthAdjust="spacingAndGlyphs" font-weight="bold" fill="#595959">y = 2E+187x</text><text x="1352.5" y="886.5" font-size="11.5" textLength="37.5" lengthAdjust="spacingAndGlyphs" font-weight="bold" fill="#595959">-57,07</text><text x="1266.4" y="920.5" font-size="18.5" textLength="101.8" lengthAdjust="spacingAndGlyphs" font-weight="bold" fill="#595959">R² = 0,9081</text><rect x="816.3" y="998.3" width="200.1" height="57" fill="#ffe699" stroke="#000" stroke-width="1.2"/><text x="817.5" y="1019.5" font-size="18.5" textLength="192.7" lengthAdjust="spacingAndGlyphs" font-weight="bold" fill="#595959">y = -0,0029x + 5,9142</text><text x="862.6" y="1046.3" font-size="18.5" textLength="101.5" lengthAdjust="spacingAndGlyphs" font-weight="bold" fill="#595959">R² = 0,8771</text><rect x="1446.5" y="807.4" width="595.0999999999999" height="292.9" fill="#fff" stroke="#d9d9d9" stroke-width="1.2"/><path d="M1497.7 1055.2H2035.5" stroke="#d9d9d9" stroke-width="1.2"/><text x="1485.1" y="1059.1" font-size="10.6" text-anchor="end" fill="#595959">0</text><path d="M1497.7 1029.2H2035.5" stroke="#d9d9d9" stroke-width="1.2"/><text x="1485.1" y="1033.1" font-size="10.6" text-anchor="end" fill="#595959">20000</text><path d="M1497.7 1003.2H2035.5" stroke="#d9d9d9" stroke-width="1.2"/><text x="1485.1" y="1007.1" font-size="10.6" text-anchor="end" fill="#595959">40000</text><path d="M1497.7 977.2H2035.5" stroke="#d9d9d9" stroke-width="1.2"/><text x="1485.1" y="981.1" font-size="10.6" text-anchor="end" fill="#595959">60000</text><path d="M1497.7 951.2H2035.5" stroke="#d9d9d9" stroke-width="1.2"/><text x="1485.1" y="955.1" font-size="10.6" text-anchor="end" fill="#595959">80000</text><path d="M1497.7 925.2H2035.5" stroke="#d9d9d9" stroke-width="1.2"/><text x="1485.1" y="929.1" font-size="10.6" text-anchor="end" fill="#595959">100000</text><path d="M1497.7 899.2H2035.5" stroke="#d9d9d9" stroke-width="1.2"/><text x="1485.1" y="903.1" font-size="10.6" text-anchor="end" fill="#595959">120000</text><path d="M1497.7 873.2H2035.5" stroke="#d9d9d9" stroke-width="1.2"/><text x="1485.1" y="877.1" font-size="10.6" text-anchor="end" fill="#595959">140000</text><path d="M1497.7 847.2H2035.5" stroke="#d9d9d9" stroke-width="1.2"/><text x="1485.1" y="851.1" font-size="10.6" text-anchor="end" fill="#595959">160000</text><path d="M1497.7 847.3V1055.2" stroke="#d9d9d9" stroke-width="1.2"/><path d="M1519.6 847.3V1055.2" stroke="#d9d9d9" stroke-width="1.2"/><path d="M1541.6 847.3V1055.2" stroke="#d9d9d9" stroke-width="1.2"/><path d="M1563.5 847.3V1055.2" stroke="#d9d9d9" stroke-width="1.2"/><path d="M1585.5 847.3V1055.2" stroke="#d9d9d9" stroke-width="1.2"/><path d="M1607.4 847.3V1055.2" stroke="#d9d9d9" stroke-width="1.2"/><path d="M1629.4 847.3V1055.2" stroke="#d9d9d9" stroke-width="1.2"/><path d="M1651.3 847.3V1055.2" stroke="#d9d9d9" stroke-width="1.2"/><path d="M1673.3 847.3V1055.2" stroke="#d9d9d9" stroke-width="1.2"/><path d="M1695.2 847.3V1055.2" stroke="#d9d9d9" stroke-width="1.2"/><path d="M1717.1 847.3V1055.2" stroke="#d9d9d9" stroke-width="1.2"/><path d="M1739.1 847.3V1055.2" stroke="#d9d9d9" stroke-width="1.2"/><path d="M1761.0 847.3V1055.2" stroke="#d9d9d9" stroke-width="1.2"/><path d="M1783.0 847.3V1055.2" stroke="#d9d9d9" stroke-width="1.2"/><path d="M1804.9 847.3V1055.2" stroke="#d9d9d9" stroke-width="1.2"/><path d="M1826.9 847.3V1055.2" stroke="#d9d9d9" stroke-width="1.2"/><path d="M1848.8 847.3V1055.2" stroke="#d9d9d9" stroke-width="1.2"/><path d="M1870.7 847.3V1055.2" stroke="#d9d9d9" stroke-width="1.2"/><path d="M1892.7 847.3V1055.2" stroke="#d9d9d9" stroke-width="1.2"/><path d="M1914.6 847.3V1055.2" stroke="#d9d9d9" stroke-width="1.2"/><path d="M1936.6 847.3V1055.2" stroke="#d9d9d9" stroke-width="1.2"/><path d="M1958.5 847.3V1055.2" stroke="#d9d9d9" stroke-width="1.2"/><path d="M1980.5 847.3V1055.2" stroke="#d9d9d9" stroke-width="1.2"/><path d="M2002.4 847.3V1055.2" stroke="#d9d9d9" stroke-width="1.2"/><path d="M2024.4 847.3V1055.2" stroke="#d9d9d9" stroke-width="1.2"/><path d="M2035.5 847.3V1055.2" stroke="#d9d9d9" stroke-width="1.2"/><text x="1502.2" y="1095.3" font-size="12.2" fill="#595959" transform="rotate(-90 1502.2 1095.3)">1971</text><text x="1524.1" y="1095.3" font-size="12.2" fill="#595959" transform="rotate(-90 1524.1 1095.3)">1973</text><text x="1546.1" y="1095.3" font-size="12.2" fill="#595959" transform="rotate(-90 1546.1 1095.3)">1975</text><text x="1568.0" y="1095.3" font-size="12.2" fill="#595959" transform="rotate(-90 1568.0 1095.3)">1977</text><text x="1590.0" y="1095.3" font-size="12.2" fill="#595959" transform="rotate(-90 1590.0 1095.3)">1979</text><text x="1611.9" y="1095.3" font-size="12.2" fill="#595959" transform="rotate(-90 1611.9 1095.3)">1981</text><text x="1633.9" y="1095.3" font-size="12.2" fill="#595959" transform="rotate(-90 1633.9 1095.3)">1983</text><text x="1655.8" y="1095.3" font-size="12.2" fill="#595959" transform="rotate(-90 1655.8 1095.3)">1985</text><text x="1677.8" y="1095.3" font-size="12.2" fill="#595959" transform="rotate(-90 1677.8 1095.3)">1987</text><text x="1699.7" y="1095.3" font-size="12.2" fill="#595959" transform="rotate(-90 1699.7 1095.3)">1989</text><text x="1721.6" y="1095.3" font-size="12.2" fill="#595959" transform="rotate(-90 1721.6 1095.3)">1991</text><text x="1743.6" y="1095.3" font-size="12.2" fill="#595959" transform="rotate(-90 1743.6 1095.3)">1993</text><text x="1765.5" y="1095.3" font-size="12.2" fill="#595959" transform="rotate(-90 1765.5 1095.3)">1995</text><text x="1787.5" y="1095.3" font-size="12.2" fill="#595959" transform="rotate(-90 1787.5 1095.3)">1997</text><text x="1809.4" y="1095.3" font-size="12.2" fill="#595959" transform="rotate(-90 1809.4 1095.3)">1999</text><text x="1831.4" y="1095.3" font-size="12.2" fill="#595959" transform="rotate(-90 1831.4 1095.3)">2001</text><text x="1853.3" y="1095.3" font-size="12.2" fill="#595959" transform="rotate(-90 1853.3 1095.3)">2003</text><text x="1875.2" y="1095.3" font-size="12.2" fill="#595959" transform="rotate(-90 1875.2 1095.3)">2005</text><text x="1897.2" y="1095.3" font-size="12.2" fill="#595959" transform="rotate(-90 1897.2 1095.3)">2007</text><text x="1919.1" y="1095.3" font-size="12.2" fill="#595959" transform="rotate(-90 1919.1 1095.3)">2009</text><text x="1941.1" y="1095.3" font-size="12.2" fill="#595959" transform="rotate(-90 1941.1 1095.3)">2011</text><text x="1963.0" y="1095.3" font-size="12.2" fill="#595959" transform="rotate(-90 1963.0 1095.3)">2013</text><text x="1985.0" y="1095.3" font-size="12.2" fill="#595959" transform="rotate(-90 1985.0 1095.3)">2015</text><text x="2006.9" y="1095.3" font-size="12.2" fill="#595959" transform="rotate(-90 2006.9 1095.3)">2017</text><text x="2028.9" y="1095.3" font-size="12.2" fill="#595959" transform="rotate(-90 2028.9 1095.3)">2019</text><rect x="1516" y="816.5" width="290.6" height="22.9" fill="#ffe699"/><text x="1518.1" y="834.0" font-size="15" textLength="283.0" lengthAdjust="spacingAndGlyphs" font-weight="bold" fill="#595959" xml:space="preserve">Производство стали  США. тыс. тонн</text><polyline points="1497.7,913.2 1508.7,897.9 1519.6,876.7 1530.6,882.9 1541.6,917.1 1552.6,903.8 1563.5,907.8 1574.5,892.7 1585.5,893.7 1596.4,923.0 1607.4,911.9 1618.4,968.1 1629.4,955.4 1640.3,945.9 1651.3,949.6 1662.3,959.0 1673.3,949.6 1684.2,936.1 1695.2,938.5 1706.2,996.7 1717.1,997.6 1728.1,992.9 1739.1,991.9 1750.1,990.7 1761.0,989.0 1772.0,990.7 1783.0,990.7 1793.9,991.7 1804.9,995.1 1815.9,922.5 1826.9,937.8 1837.8,935.6 1848.8,933.1 1859.8,925.0 1870.7,932.1 1881.7,927.0 1892.7,927.0 1903.7,935.6 1914.6,977.9 1925.6,949.8 1936.6,942.7 1947.6,940.0 1958.5,942.0 1969.5,940.0 1980.5,952.8 1991.4,952.8 2002.4,948.9 2013.4,942.0 2024.4,940.7" fill="none" stroke="#548235" stroke-width="1.8" stroke-linejoin="round"/><circle cx="1497.7" cy="913.2" r="3.3" fill="#4472c4" stroke="#548235" stroke-width="0.8"/><circle cx="1508.7" cy="897.9" r="3.3" fill="#4472c4" stroke="#548235" stroke-width="0.8"/><circle cx="1519.6" cy="876.7" r="3.3" fill="#4472c4" stroke="#548235" stroke-width="0.8"/><circle cx="1530.6" cy="882.9" r="3.3" fill="#4472c4" stroke="#548235" stroke-width="0.8"/><circle cx="1541.6" cy="917.1" r="3.3" fill="#4472c4" stroke="#548235" stroke-width="0.8"/><circle cx="1552.6" cy="903.8" r="3.3" fill="#4472c4" stroke="#548235" stroke-width="0.8"/><circle cx="1563.5" cy="907.8" r="3.3" fill="#4472c4" stroke="#548235" stroke-width="0.8"/><circle cx="1574.5" cy="892.7" r="3.3" fill="#4472c4" stroke="#548235" stroke-width="0.8"/><circle cx="1585.5" cy="893.7" r="3.3" fill="#4472c4" stroke="#548235" stroke-width="0.8"/><circle cx="1596.4" cy="923.0" r="3.3" fill="#4472c4" stroke="#548235" stroke-width="0.8"/><circle cx="1607.4" cy="911.9" r="3.3" fill="#4472c4" stroke="#548235" stroke-width="0.8"/><circle cx="1618.4" cy="968.1" r="3.3" fill="#4472c4" stroke="#548235" stroke-width="0.8"/><circle cx="1629.4" cy="955.4" r="3.3" fill="#4472c4" stroke="#548235" stroke-width="0.8"/><circle cx="1640.3" cy="945.9" r="3.3" fill="#4472c4" stroke="#548235" stroke-width="0.8"/><circle cx="1651.3" cy="949.6" r="3.3" fill="#4472c4" stroke="#548235" stroke-width="0.8"/><circle cx="1662.3" cy="959.0" r="3.3" fill="#4472c4" stroke="#548235" stroke-width="0.8"/><circle cx="1673.3" cy="949.6" r="3.3" fill="#4472c4" stroke="#548235" stroke-width="0.8"/><circle cx="1684.2" cy="936.1" r="3.3" fill="#4472c4" stroke="#548235" stroke-width="0.8"/><circle cx="1695.2" cy="938.5" r="3.3" fill="#4472c4" stroke="#548235" stroke-width="0.8"/><circle cx="1706.2" cy="996.7" r="3.3" fill="#4472c4" stroke="#548235" stroke-width="0.8"/><circle cx="1717.1" cy="997.6" r="3.3" fill="#4472c4" stroke="#548235" stroke-width="0.8"/><circle cx="1728.1" cy="992.9" r="3.3" fill="#4472c4" stroke="#548235" stroke-width="0.8"/><circle cx="1739.1" cy="991.9" r="3.3" fill="#4472c4" stroke="#548235" stroke-width="0.8"/><circle cx="1750.1" cy="990.7" r="3.3" fill="#4472c4" stroke="#548235" stroke-width="0.8"/><circle cx="1761.0" cy="989.0" r="3.3" fill="#4472c4" stroke="#548235" stroke-width="0.8"/><circle cx="1772.0" cy="990.7" r="3.3" fill="#4472c4" stroke="#548235" stroke-width="0.8"/><circle cx="1783.0" cy="990.7" r="3.3" fill="#4472c4" stroke="#548235" stroke-width="0.8"/><circle cx="1793.9" cy="991.7" r="3.3" fill="#4472c4" stroke="#548235" stroke-width="0.8"/><circle cx="1804.9" cy="995.1" r="3.3" fill="#4472c4" stroke="#548235" stroke-width="0.8"/><circle cx="1815.9" cy="922.5" r="3.3" fill="#4472c4" stroke="#548235" stroke-width="0.8"/><circle cx="1826.9" cy="937.8" r="3.3" fill="#4472c4" stroke="#548235" stroke-width="0.8"/><circle cx="1837.8" cy="935.6" r="3.3" fill="#4472c4" stroke="#548235" stroke-width="0.8"/><circle cx="1848.8" cy="933.1" r="3.3" fill="#4472c4" stroke="#548235" stroke-width="0.8"/><circle cx="1859.8" cy="925.0" r="3.3" fill="#4472c4" stroke="#548235" stroke-width="0.8"/><circle cx="1870.7" cy="932.1" r="3.3" fill="#4472c4" stroke="#548235" stroke-width="0.8"/><circle cx="1881.7" cy="927.0" r="3.3" fill="#4472c4" stroke="#548235" stroke-width="0.8"/><circle cx="1892.7" cy="927.0" r="3.3" fill="#4472c4" stroke="#548235" stroke-width="0.8"/><circle cx="1903.7" cy="935.6" r="3.3" fill="#4472c4" stroke="#548235" stroke-width="0.8"/><circle cx="1914.6" cy="977.9" r="3.3" fill="#4472c4" stroke="#548235" stroke-width="0.8"/><circle cx="1925.6" cy="949.8" r="3.3" fill="#4472c4" stroke="#548235" stroke-width="0.8"/><circle cx="1936.6" cy="942.7" r="3.3" fill="#4472c4" stroke="#548235" stroke-width="0.8"/><circle cx="1947.6" cy="940.0" r="3.3" fill="#4472c4" stroke="#548235" stroke-width="0.8"/><circle cx="1958.5" cy="942.0" r="3.3" fill="#4472c4" stroke="#548235" stroke-width="0.8"/><circle cx="1969.5" cy="940.0" r="3.3" fill="#4472c4" stroke="#548235" stroke-width="0.8"/><circle cx="1980.5" cy="952.8" r="3.3" fill="#4472c4" stroke="#548235" stroke-width="0.8"/><circle cx="1991.4" cy="952.8" r="3.3" fill="#4472c4" stroke="#548235" stroke-width="0.8"/><circle cx="2002.4" cy="948.9" r="3.3" fill="#4472c4" stroke="#548235" stroke-width="0.8"/><circle cx="2013.4" cy="942.0" r="3.3" fill="#4472c4" stroke="#548235" stroke-width="0.8"/><circle cx="2024.4" cy="940.7" r="3.3" fill="#4472c4" stroke="#548235" stroke-width="0.8"/><path d="M1497.7 923.8L2024.4 963.7" stroke="#f00" stroke-width="2"/><polyline points="1497.7,930.9 1508.7,931.7 1519.6,932.5 1530.6,933.3 1541.6,934.1 1552.6,934.8 1563.5,935.6 1574.5,936.4 1585.5,937.1 1596.4,937.9 1607.4,938.6 1618.4,939.4 1629.4,940.1 1640.3,940.9 1651.3,941.6 1662.3,942.3 1673.3,943.0 1684.2,943.7 1695.2,944.5 1706.2,945.2 1717.1,945.9 1728.1,946.5 1739.1,947.2 1750.1,947.9 1761.0,948.6 1772.0,949.3 1783.0,949.9 1793.9,950.6 1804.9,951.3 1815.9,951.9 1826.9,952.6 1837.8,953.2 1848.8,953.9 1859.8,954.5 1870.7,955.1 1881.7,955.8 1892.7,956.4 1903.7,957.0 1914.6,957.6 1925.6,958.3 1936.6,958.9 1947.6,959.5 1958.5,960.1 1969.5,960.7 1980.5,961.3 1991.4,961.9 2002.4,962.4 2013.4,963.0 2024.4,963.6" fill="none" stroke="#548235" stroke-width="1.9" stroke-linejoin="round"/><rect x="1871.3" y="850.5" width="141.3" height="56.8" fill="#c6e0b4" stroke="#000" stroke-width="1.2"/><text x="1872.3" y="873.2" font-size="18.5" textLength="97.5" lengthAdjust="spacingAndGlyphs" font-weight="bold" fill="#595959">y = 6E+46x</text><text x="1970.3" y="865.0" font-size="11.5" textLength="37.0" lengthAdjust="spacingAndGlyphs" font-weight="bold" fill="#595959">-12,68</text><text x="1889.0" y="899.8" font-size="18.5" textLength="101.4" lengthAdjust="spacingAndGlyphs" font-weight="bold" fill="#595959">R² = 0,0863</text><rect x="1517.4" y="951.4" width="193.2" height="57.1" fill="#ffe699" stroke="#000" stroke-width="1.2"/><text x="1518.6" y="974.5" font-size="18.5" textLength="186.6" lengthAdjust="spacingAndGlyphs" font-weight="bold" fill="#595959">y = -647,93x + 1E+06</text><text x="1561.7" y="1000.8" font-size="18.5" textLength="100.9" lengthAdjust="spacingAndGlyphs" font-weight="bold" fill="#595959">R² = 0,1455</text></svg>
<div style="left:0px;top:131px;width:2529px;height:10.5px;background:#fff;"></div>
<div class="t ta ac vm" style="left:15px;top:132px;width:29px;height:10px;font-size:6.6px;color:#444;"><span>A</span></div>
<div style="left:15px;top:132px;width:1px;height:9px;background:#d0d0d0;"></div>
<div class="t ta ac vm" style="left:44px;top:132px;width:33px;height:10px;font-size:6.6px;color:#444;"><span>B</span></div>
<div style="left:44px;top:132px;width:1px;height:9px;background:#d0d0d0;"></div>
<div class="t ta ac vm" style="left:77px;top:132px;width:44px;height:10px;font-size:6.6px;color:#444;"><span>C</span></div>
<div style="left:77px;top:132px;width:1px;height:9px;background:#d0d0d0;"></div>
<div class="t ta ac vm" style="left:121px;top:132px;width:98px;height:10px;font-size:6.6px;color:#444;"><span>D</span></div>
<div style="left:121px;top:132px;width:1px;height:9px;background:#d0d0d0;"></div>
<div style="left:219px;top:131px;width:196px;height:10px;background:#e1e1e1;"></div>
<div style="left:219px;top:140px;width:196px;height:1.5px;background:#217346;"></div>
<div class="t ta ac vm" style="left:219px;top:132px;width:196px;height:10px;font-size:6.6px;color:#444;"><span>E</span></div>
<div style="left:219px;top:132px;width:1px;height:9px;background:#d0d0d0;"></div>
<div class="t ta ac vm" style="left:415px;top:132px;width:71px;height:10px;font-size:6.6px;color:#444;"><span>F</span></div>
<div style="left:415px;top:132px;width:1px;height:9px;background:#d0d0d0;"></div>
<div class="t ta ac vm" style="left:486px;top:132px;width:71px;height:10px;font-size:6.6px;color:#444;"><span>G</span></div>
<div style="left:486px;top:132px;width:1px;height:9px;background:#d0d0d0;"></div>
<div class="t ta ac vm" style="left:557px;top:132px;width:33px;height:10px;font-size:6.6px;color:#444;"><span>BB</span></div>
<div style="left:557px;top:132px;width:1px;height:9px;background:#d0d0d0;"></div>
<div class="t ta ac vm" style="left:590px;top:132px;width:57px;height:10px;font-size:6.6px;color:#444;"><span>BC</span></div>
<div style="left:590px;top:132px;width:1px;height:9px;background:#d0d0d0;"></div>
<div class="t ta ac vm" style="left:647px;top:132px;width:62px;height:10px;font-size:6.6px;color:#444;"><span>BD</span></div>
<div style="left:647px;top:132px;width:1px;height:9px;background:#d0d0d0;"></div>
<div class="t ta ac vm" style="left:709px;top:132px;width:57px;height:10px;font-size:6.6px;color:#444;"><span>BE</span></div>
<div style="left:709px;top:132px;width:1px;height:9px;background:#d0d0d0;"></div>
<div class="t ta ac vm" style="left:766px;top:132px;width:58px;height:10px;font-size:6.6px;color:#444;"><span>BF</span></div>
<div style="left:766px;top:132px;width:1px;height:9px;background:#d0d0d0;"></div>
<div class="t ta ac vm" style="left:824px;top:132px;width:58px;height:10px;font-size:6.6px;color:#444;"><span>BG</span></div>
<div style="left:824px;top:132px;width:1px;height:9px;background:#d0d0d0;"></div>
<div class="t ta ac vm" style="left:882px;top:132px;width:58px;height:10px;font-size:6.6px;color:#444;"><span>BH</span></div>
<div style="left:882px;top:132px;width:1px;height:9px;background:#d0d0d0;"></div>
<div class="t ta ac vm" style="left:940px;top:132px;width:58px;height:10px;font-size:6.6px;color:#444;"><span>BI</span></div>
<div style="left:940px;top:132px;width:1px;height:9px;background:#d0d0d0;"></div>
<div class="t ta ac vm" style="left:998px;top:132px;width:73px;height:10px;font-size:6.6px;color:#444;"><span>BJ</span></div>
<div style="left:998px;top:132px;width:1px;height:9px;background:#d0d0d0;"></div>
<div class="t ta ac vm" style="left:1071px;top:132px;width:82px;height:10px;font-size:6.6px;color:#444;"><span>BK</span></div>
<div style="left:1071px;top:132px;width:1px;height:9px;background:#d0d0d0;"></div>
<div class="t ta ac vm" style="left:1153px;top:132px;width:81px;height:10px;font-size:6.6px;color:#444;"><span>BL</span></div>
<div style="left:1153px;top:132px;width:1px;height:9px;background:#d0d0d0;"></div>
<div class="t ta ac vm" style="left:1234px;top:132px;width:89px;height:10px;font-size:6.6px;color:#444;"><span>BM</span></div>
<div style="left:1234px;top:132px;width:1px;height:9px;background:#d0d0d0;"></div>
<div class="t ta ac vm" style="left:1323px;top:132px;width:94px;height:10px;font-size:6.6px;color:#444;"><span>BN</span></div>
<div style="left:1323px;top:132px;width:1px;height:9px;background:#d0d0d0;"></div>
<div class="t ta ac vm" style="left:1417px;top:132px;width:48px;height:10px;font-size:6.6px;color:#444;"><span>BO</span></div>
<div style="left:1417px;top:132px;width:1px;height:9px;background:#d0d0d0;"></div>
<div class="t ta ac vm" style="left:1465px;top:132px;width:53px;height:10px;font-size:6.6px;color:#444;"><span>BP</span></div>
<div style="left:1465px;top:132px;width:1px;height:9px;background:#d0d0d0;"></div>
<div class="t ta ac vm" style="left:1518px;top:132px;width:33px;height:10px;font-size:6.6px;color:#444;"><span>BQ</span></div>
<div style="left:1518px;top:132px;width:1px;height:9px;background:#d0d0d0;"></div>
<div class="t ta ac vm" style="left:1551px;top:132px;width:48px;height:10px;font-size:6.6px;color:#444;"><span>BR</span></div>
<div style="left:1551px;top:132px;width:1px;height:9px;background:#d0d0d0;"></div>
<div class="t ta ac vm" style="left:1599px;top:132px;width:33px;height:10px;font-size:6.6px;color:#444;"><span>BS</span></div>
<div style="left:1599px;top:132px;width:1px;height:9px;background:#d0d0d0;"></div>
<div class="t ta ac vm" style="left:1632px;top:132px;width:33px;height:10px;font-size:6.6px;color:#444;"><span>BT</span></div>
<div style="left:1632px;top:132px;width:1px;height:9px;background:#d0d0d0;"></div>
<div class="t ta ac vm" style="left:1665px;top:132px;width:33px;height:10px;font-size:6.6px;color:#444;"><span>BU</span></div>
<div style="left:1665px;top:132px;width:1px;height:9px;background:#d0d0d0;"></div>
<div class="t ta ac vm" style="left:1698px;top:132px;width:33px;height:10px;font-size:6.6px;color:#444;"><span>BV</span></div>
<div style="left:1698px;top:132px;width:1px;height:9px;background:#d0d0d0;"></div>
<div class="t ta ac vm" style="left:1731px;top:132px;width:33px;height:10px;font-size:6.6px;color:#444;"><span>BW</span></div>
<div style="left:1731px;top:132px;width:1px;height:9px;background:#d0d0d0;"></div>
<div class="t ta ac vm" style="left:1764px;top:132px;width:33px;height:10px;font-size:6.6px;color:#444;"><span>BX</span></div>
<div style="left:1764px;top:132px;width:1px;height:9px;background:#d0d0d0;"></div>
<div class="t ta ac vm" style="left:1797px;top:132px;width:33px;height:10px;font-size:6.6px;color:#444;"><span>BY</span></div>
<div style="left:1797px;top:132px;width:1px;height:9px;background:#d0d0d0;"></div>
<div class="t ta ac vm" style="left:1830px;top:132px;width:33px;height:10px;font-size:6.6px;color:#444;"><span>BZ</span></div>
<div style="left:1830px;top:132px;width:1px;height:9px;background:#d0d0d0;"></div>
<div class="t ta ac vm" style="left:1863px;top:132px;width:33px;height:10px;font-size:6.6px;color:#444;"><span>CA</span></div>
<div style="left:1863px;top:132px;width:1px;height:9px;background:#d0d0d0;"></div>
<div class="t ta ac vm" style="left:1896px;top:132px;width:33px;height:10px;font-size:6.6px;color:#444;"><span>CB</span></div>
<div style="left:1896px;top:132px;width:1px;height:9px;background:#d0d0d0;"></div>
<div class="t ta ac vm" style="left:1929px;top:132px;width:33px;height:10px;font-size:6.6px;color:#444;"><span>CC</span></div>
<div style="left:1929px;top:132px;width:1px;height:9px;background:#d0d0d0;"></div>
<div class="t ta ac vm" style="left:1962px;top:132px;width:33px;height:10px;font-size:6.6px;color:#444;"><span>CD</span></div>
<div style="left:1962px;top:132px;width:1px;height:9px;background:#d0d0d0;"></div>
<div class="t ta ac vm" style="left:1995px;top:132px;width:33px;height:10px;font-size:6.6px;color:#444;"><span>CE</span></div>
<div style="left:1995px;top:132px;width:1px;height:9px;background:#d0d0d0;"></div>
<div class="t ta ac vm" style="left:2028px;top:132px;width:40px;height:10px;font-size:6.6px;color:#444;"><span>CF</span></div>
<div style="left:2028px;top:132px;width:1px;height:9px;background:#d0d0d0;"></div>
<div class="t ta ac vm" style="left:2068px;top:132px;width:40px;height:10px;font-size:6.6px;color:#444;"><span>CG</span></div>
<div style="left:2068px;top:132px;width:1px;height:9px;background:#d0d0d0;"></div>
<div class="t ta ac vm" style="left:2108px;top:132px;width:48px;height:10px;font-size:6.6px;color:#444;"><span>CH</span></div>
<div style="left:2108px;top:132px;width:1px;height:9px;background:#d0d0d0;"></div>
<div class="t ta ac vm" style="left:2156px;top:132px;width:48px;height:10px;font-size:6.6px;color:#444;"><span>CI</span></div>
<div style="left:2156px;top:132px;width:1px;height:9px;background:#d0d0d0;"></div>
<div class="t ta ac vm" style="left:2204px;top:132px;width:40px;height:10px;font-size:6.6px;color:#444;"><span>CJ</span></div>
<div style="left:2204px;top:132px;width:1px;height:9px;background:#d0d0d0;"></div>
<div class="t ta ac vm" style="left:2244px;top:132px;width:40px;height:10px;font-size:6.6px;color:#444;"><span>CK</span></div>
<div style="left:2244px;top:132px;width:1px;height:9px;background:#d0d0d0;"></div>
<div class="t ta ac vm" style="left:2284px;top:132px;width:40px;height:10px;font-size:6.6px;color:#444;"><span>CL</span></div>
<div style="left:2284px;top:132px;width:1px;height:9px;background:#d0d0d0;"></div>
<div class="t ta ac vm" style="left:2324px;top:132px;width:46px;height:10px;font-size:6.6px;color:#444;"><span>CM</span></div>
<div style="left:2324px;top:132px;width:1px;height:9px;background:#d0d0d0;"></div>
<div class="t ta ac vm" style="left:2370px;top:132px;width:67px;height:10px;font-size:6.6px;color:#444;"><span>CN</span></div>
<div style="left:2370px;top:132px;width:1px;height:9px;background:#d0d0d0;"></div>
<div class="t ta ac vm" style="left:2437px;top:132px;width:48px;height:10px;font-size:6.6px;color:#444;"><span>CO</span></div>
<div style="left:2437px;top:132px;width:1px;height:9px;background:#d0d0d0;"></div>
<div class="t ta ac vm" style="left:2485px;top:132px;width:44px;height:10px;font-size:6.6px;color:#444;"><span>CP</span></div>
<div style="left:2485px;top:132px;width:1px;height:9px;background:#d0d0d0;"></div>
<div style="left:15px;top:141px;width:2514px;height:1px;background:#9b9b9b;"></div>
<svg style="left:9px;top:135px" width="5" height="5"><path d="M5 0v5H0z" fill="#c8c8c8"/></svg>
<div style="left:15px;top:131px;width:1px;height:1186px;background:#ababab;"></div>
<div class="t ta ac vb" style="left:0px;top:141px;width:15px;height:31px;font-size:6.5px;color:#444;padding:0px 0px 0.5px 0px;"><span>1</span></div>
<div style="left:0px;top:172px;width:15px;height:1px;background:#d8d8d8;"></div>
<div class="t ta ac vb" style="left:0px;top:172px;width:15px;height:26px;font-size:6.5px;color:#444;padding:0px 0px 0.5px 0px;"><span>2</span></div>
<div style="left:0px;top:198px;width:15px;height:1px;background:#d8d8d8;"></div>
<div class="t ta ac vb" style="left:0px;top:198px;width:15px;height:72px;font-size:6.5px;color:#444;padding:0px 0px 0.5px 0px;"><span>3</span></div>
<div style="left:0px;top:270px;width:15px;height:1px;background:#d8d8d8;"></div>
<div style="left:0px;top:270px;width:15px;height:25px;background:#e1e1e1;"></div>
<div style="left:14px;top:270px;width:1.5px;height:25px;background:#217346;"></div>
<div class="t ta ac vb" style="left:0px;top:270px;width:15px;height:25px;font-size:6.5px;color:#444;padding:0px 0px 0.5px 0px;"><span>4</span></div>
<div style="left:0px;top:295px;width:15px;height:1px;background:#d8d8d8;"></div>
<div class="t ta ac vb" style="left:0px;top:295px;width:15px;height:22px;font-size:6.5px;color:#444;padding:0px 0px 0.5px 0px;"><span>77</span></div>
<div style="left:0px;top:317px;width:15px;height:1px;background:#d8d8d8;"></div>
<div class="t ta ac vb" style="left:0px;top:317px;width:15px;height:22.5px;font-size:6.5px;color:#444;padding:0px 0px 0.5px 0px;"><span>78</span></div>
<div style="left:0px;top:339.5px;width:15px;height:1px;background:#d8d8d8;"></div>
<div class="t ta ac vb" style="left:0px;top:339.5px;width:15px;height:32.5px;font-size:6.5px;color:#444;padding:0px 0px 0.5px 0px;"><span>79</span></div>
<div style="left:0px;top:372.0px;width:15px;height:1px;background:#d8d8d8;"></div>
<div class="t ta ac vb" style="left:0px;top:372px;width:15px;height:9px;font-size:6.5px;color:#444;padding:0px 0px 0.5px 0px;"><span>80</span></div>
<div style="left:0px;top:381px;width:15px;height:1px;background:#d8d8d8;"></div>
<div class="t ta ac vb" style="left:0px;top:381px;width:15px;height:29px;font-size:6.5px;color:#444;padding:0px 0px 0.5px 0px;"><span>81</span></div>
<div style="left:0px;top:410px;width:15px;height:1px;background:#d8d8d8;"></div>
<div class="t ta ac vb" style="left:0px;top:410px;width:15px;height:25px;font-size:6.5px;color:#444;padding:0px 0px 0.5px 0px;"><span>82</span></div>
<div style="left:0px;top:435px;width:15px;height:1px;background:#d8d8d8;"></div>
<div class="t ta ac vb" style="left:0px;top:435px;width:15px;height:25px;font-size:6.5px;color:#444;padding:0px 0px 0.5px 0px;"><span>83</span></div>
<div style="left:0px;top:460px;width:15px;height:1px;background:#d8d8d8;"></div>
<div class="t ta ac vb" style="left:0px;top:460px;width:15px;height:23px;font-size:6.5px;color:#444;padding:0px 0px 0.5px 0px;"><span>84</span></div>
<div style="left:0px;top:483px;width:15px;height:1px;background:#d8d8d8;"></div>
<div class="t ta ac vb" style="left:0px;top:483px;width:15px;height:15px;font-size:6.5px;color:#444;padding:0px 0px 0.5px 0px;"><span>85</span></div>
<div style="left:0px;top:498px;width:15px;height:1px;background:#d8d8d8;"></div>
<div class="t ta ac vb" style="left:0px;top:498px;width:15px;height:22px;font-size:6.5px;color:#444;padding:0px 0px 0.5px 0px;"><span>86</span></div>
<div style="left:0px;top:520px;width:15px;height:1px;background:#d8d8d8;"></div>
<div class="t ta ac vb" style="left:0px;top:520px;width:15px;height:16px;font-size:6.5px;color:#444;padding:0px 0px 0.5px 0px;"><span>87</span></div>
<div style="left:0px;top:536px;width:15px;height:1px;background:#d8d8d8;"></div>
<div class="t ta ac vb" style="left:0px;top:536px;width:15px;height:23px;font-size:6.5px;color:#444;padding:0px 0px 0.5px 0px;"><span>88</span></div>
<div style="left:0px;top:559px;width:15px;height:1px;background:#d8d8d8;"></div>
<div class="t ta ac vb" style="left:0px;top:559px;width:15px;height:18px;font-size:6.5px;color:#444;padding:0px 0px 0.5px 0px;"><span>89</span></div>
<div style="left:0px;top:577px;width:15px;height:1px;background:#d8d8d8;"></div>
<div class="t ta ac vb" style="left:0px;top:577px;width:15px;height:27px;font-size:6.5px;color:#444;padding:0px 0px 0.5px 0px;"><span>90</span></div>
<div style="left:0px;top:604px;width:15px;height:1px;background:#d8d8d8;"></div>
<div class="t ta ac vb" style="left:0px;top:604px;width:15px;height:27px;font-size:6.5px;color:#444;padding:0px 0px 0.5px 0px;"><span>91</span></div>
<div style="left:0px;top:631px;width:15px;height:1px;background:#d8d8d8;"></div>
<div class="t ta ac vb" style="left:0px;top:631px;width:15px;height:27px;font-size:6.5px;color:#444;padding:0px 0px 0.5px 0px;"><span>92</span></div>
<div style="left:0px;top:658px;width:15px;height:1px;background:#d8d8d8;"></div>
<div class="t ta ac vb" style="left:0px;top:658px;width:15px;height:10px;font-size:6.5px;color:#444;padding:0px 0px 0.5px 0px;"><span>93</span></div>
<div style="left:0px;top:668px;width:15px;height:1px;background:#d8d8d8;"></div>
<div class="t ta ac vb" style="left:0px;top:668px;width:15px;height:24px;font-size:6.5px;color:#444;padding:0px 0px 0.5px 0px;"><span>94</span></div>
<div style="left:0px;top:692px;width:15px;height:1px;background:#d8d8d8;"></div>
<div class="t ta ac vb" style="left:0px;top:692px;width:15px;height:24px;font-size:6.5px;color:#444;padding:0px 0px 0.5px 0px;"><span>95</span></div>
<div style="left:0px;top:716px;width:15px;height:1px;background:#d8d8d8;"></div>
<div class="t ta ac vb" style="left:0px;top:716px;width:15px;height:27px;font-size:6.5px;color:#444;padding:0px 0px 0.5px 0px;"><span>96</span></div>
<div style="left:0px;top:743px;width:15px;height:1px;background:#d8d8d8;"></div>
<div class="t ta ac vb" style="left:0px;top:743px;width:15px;height:25px;font-size:6.5px;color:#444;padding:0px 0px 0.5px 0px;"><span>97</span></div>
<div style="left:0px;top:768px;width:15px;height:1px;background:#d8d8d8;"></div>
<div class="t ta ac vb" style="left:0px;top:768px;width:15px;height:25px;font-size:6.5px;color:#444;padding:0px 0px 0.5px 0px;"><span>98</span></div>
<div style="left:0px;top:793px;width:15px;height:1px;background:#d8d8d8;"></div>
<div class="t ta ac vb" style="left:0px;top:793px;width:15px;height:25px;font-size:6.5px;color:#444;padding:0px 0px 0.5px 0px;"><span>99</span></div>
<div style="left:0px;top:818px;width:15px;height:1px;background:#d8d8d8;"></div>
<div class="t ta ac vb" style="left:0px;top:818px;width:15px;height:23px;font-size:6.5px;color:#444;padding:0px 0px 0.5px 0px;"><span>100</span></div>
<div style="left:0px;top:841px;width:15px;height:1px;background:#d8d8d8;"></div>
<div class="t ta ac vb" style="left:0px;top:841px;width:15px;height:10px;font-size:6.5px;color:#444;padding:0px 0px 0.5px 0px;"><span>101</span></div>
<div style="left:0px;top:851px;width:15px;height:1px;background:#d8d8d8;"></div>
<div class="t ta ac vb" style="left:0px;top:851px;width:15px;height:10px;font-size:6.5px;color:#444;padding:0px 0px 0.5px 0px;"><span>102</span></div>
<div style="left:0px;top:861px;width:15px;height:1px;background:#d8d8d8;"></div>
<div class="t ta ac vb" style="left:0px;top:861px;width:15px;height:10px;font-size:6.5px;color:#444;padding:0px 0px 0.5px 0px;"><span>103</span></div>
<div style="left:0px;top:871px;width:15px;height:1px;background:#d8d8d8;"></div>
<div class="t ta ac vb" style="left:0px;top:871px;width:15px;height:20px;font-size:6.5px;color:#444;padding:0px 0px 0.5px 0px;"><span>104</span></div>
<div style="left:0px;top:891px;width:15px;height:1px;background:#d8d8d8;"></div>
<div class="t ta ac vb" style="left:0px;top:891px;width:15px;height:20px;font-size:6.5px;color:#444;padding:0px 0px 0.5px 0px;"><span>105</span></div>
<div style="left:0px;top:911px;width:15px;height:1px;background:#d8d8d8;"></div>
<div class="t ta ac vb" style="left:0px;top:911px;width:15px;height:20px;font-size:6.5px;color:#444;padding:0px 0px 0.5px 0px;"><span>106</span></div>
<div style="left:0px;top:931px;width:15px;height:1px;background:#d8d8d8;"></div>
<div class="t ta ac vb" style="left:0px;top:931px;width:15px;height:10px;font-size:6.5px;color:#444;padding:0px 0px 0.5px 0px;"><span>107</span></div>
<div style="left:0px;top:941px;width:15px;height:1px;background:#d8d8d8;"></div>
<div class="t ta ac vb" style="left:0px;top:941px;width:15px;height:10px;font-size:6.5px;color:#444;padding:0px 0px 0.5px 0px;"><span>108</span></div>
<div style="left:0px;top:951px;width:15px;height:1px;background:#d8d8d8;"></div>
<div class="t ta ac vb" style="left:0px;top:951px;width:15px;height:21px;font-size:6.5px;color:#444;padding:0px 0px 0.5px 0px;"><span>109</span></div>
<div style="left:0px;top:972px;width:15px;height:1px;background:#d8d8d8;"></div>
<div class="t ta ac vb" style="left:0px;top:972px;width:15px;height:21px;font-size:6.5px;color:#444;padding:0px 0px 0.5px 0px;"><span>110</span></div>
<div style="left:0px;top:993px;width:15px;height:1px;background:#d8d8d8;"></div>
<div class="t ta ac vb" style="left:0px;top:993px;width:15px;height:21px;font-size:6.5px;color:#444;padding:0px 0px 0.5px 0px;"><span>111</span></div>
<div style="left:0px;top:1014px;width:15px;height:1px;background:#d8d8d8;"></div>
<div class="t ta ac vb" style="left:0px;top:1014px;width:15px;height:22px;font-size:6.5px;color:#444;padding:0px 0px 0.5px 0px;"><span>112</span></div>
<div style="left:0px;top:1036px;width:15px;height:1px;background:#d8d8d8;"></div>
<div class="t ta ac vb" style="left:0px;top:1036px;width:15px;height:10px;font-size:6.5px;color:#444;padding:0px 0px 0.5px 0px;"><span>113</span></div>
<div style="left:0px;top:1046px;width:15px;height:1px;background:#d8d8d8;"></div>
<div class="t ta ac vb" style="left:0px;top:1046px;width:15px;height:22px;font-size:6.5px;color:#444;padding:0px 0px 0.5px 0px;"><span>114</span></div>
<div style="left:0px;top:1068px;width:15px;height:1px;background:#d8d8d8;"></div>
<div class="t ta ac vb" style="left:0px;top:1068px;width:15px;height:18px;font-size:6.5px;color:#444;padding:0px 0px 0.5px 0px;"><span>115</span></div>
<div style="left:0px;top:1086px;width:15px;height:1px;background:#d8d8d8;"></div>
<div class="t ta ac vb" style="left:0px;top:1086px;width:15px;height:16px;font-size:6.5px;color:#444;padding:0px 0px 0.5px 0px;"><span>116</span></div>
<div style="left:0px;top:1102px;width:15px;height:1px;background:#d8d8d8;"></div>
<div class="t ta ac vb" style="left:0px;top:1102px;width:15px;height:10px;font-size:6.5px;color:#444;padding:0px 0px 0.5px 0px;"><span>117</span></div>
<div style="left:0px;top:1112px;width:15px;height:1px;background:#d8d8d8;"></div>
<div class="t ta ac vb" style="left:0px;top:1112px;width:15px;height:10px;font-size:6.5px;color:#444;padding:0px 0px 0.5px 0px;"><span>118</span></div>
<div style="left:0px;top:1122px;width:15px;height:1px;background:#d8d8d8;"></div>
<div class="t ta ac vb" style="left:0px;top:1122px;width:15px;height:10px;font-size:6.5px;color:#444;padding:0px 0px 0.5px 0px;"><span>119</span></div>
<div style="left:0px;top:1132px;width:15px;height:1px;background:#d8d8d8;"></div>
<div class="t ta ac vb" style="left:0px;top:1132px;width:15px;height:10px;font-size:6.5px;color:#444;padding:0px 0px 0.5px 0px;"><span>120</span></div>
<div style="left:0px;top:1142px;width:15px;height:1px;background:#d8d8d8;"></div>
<div class="t ta ac vb" style="left:0px;top:1142px;width:15px;height:10px;font-size:6.5px;color:#444;padding:0px 0px 0.5px 0px;"><span>121</span></div>
<div style="left:0px;top:1152px;width:15px;height:1px;background:#d8d8d8;"></div>
<div class="t ta ac vb" style="left:0px;top:1152px;width:15px;height:19px;font-size:6.5px;color:#444;padding:0px 0px 0.5px 0px;"><span>122</span></div>
<div style="left:0px;top:1171px;width:15px;height:1px;background:#d8d8d8;"></div>
<div class="t ta ac vb" style="left:0px;top:1171px;width:15px;height:23px;font-size:6.5px;color:#444;padding:0px 0px 0.5px 0px;"><span>123</span></div>
<div style="left:0px;top:1194px;width:15px;height:1px;background:#d8d8d8;"></div>
<div class="t ta ac vb" style="left:0px;top:1194px;width:15px;height:30.5px;font-size:6.5px;color:#444;padding:0px 0px 0.5px 0px;"><span>124</span></div>
<div style="left:0px;top:1224.5px;width:15px;height:1px;background:#d8d8d8;"></div>
<div class="t ta ac vb" style="left:0px;top:1224.5px;width:15px;height:23.0px;font-size:6.5px;color:#444;padding:0px 0px 0.5px 0px;"><span>125</span></div>
<div style="left:0px;top:1247.5px;width:15px;height:1px;background:#d8d8d8;"></div>
<div class="t ta ac vb" style="left:0px;top:1247.5px;width:15px;height:29.5px;font-size:6.5px;color:#444;padding:0px 0px 0.5px 0px;"><span>126</span></div>
<div style="left:0px;top:1277.0px;width:15px;height:1px;background:#d8d8d8;"></div>
<div class="t ta ac vb" style="left:0px;top:1277px;width:15px;height:23px;font-size:6.5px;color:#444;padding:0px 0px 0.5px 0px;"><span>127</span></div>
<div style="left:0px;top:1300px;width:15px;height:1px;background:#d8d8d8;"></div>
<div class="t ts b al vt" style="left:80px;top:144.4px;width:100px;height:12px;font-size:9.9px;color:#f00;padding:0px 2px 0px 0px;"><span>МАСШТАБ:</span></div>
<div class="t ts b al vt" style="left:80px;top:176px;width:100px;height:12px;font-size:9.9px;color:#f00;padding:0px 2px 0px 0px;"><span>МАСШТАБ:</span></div>
<div style="left:219px;top:141px;width:196px;height:31px;background:#fff2cc;"></div>
<div style="left:219px;top:172px;width:196px;height:26px;background:#fff2cc;"></div>
<div class="t ts b ac vt" style="left:219px;top:141px;width:196px;height:31px;font-size:15.5px;color:#0000cd;padding:4px 2px 0px 2px;"><span>1000000</span></div>
<div class="t ts b ac vt" style="left:219px;top:172px;width:196px;height:26px;font-size:15.5px;color:#0000cd;padding:4px 2px 0px 2px;"><span>1000000</span></div>
<div class="t ts b ac vt" style="left:415px;top:141px;width:71px;height:31px;font-size:14.8px;color:#f00;padding:4px 2px 0px 2px;"><span>млн.$</span></div>
<div class="t ts b ac vt" style="left:415px;top:172px;width:71px;height:26px;font-size:14.8px;color:#f00;padding:5px 0px 0px 0px;"><span>млн.чел.</span></div>
<div style="left:486px;top:141px;width:71px;height:31px;background:#ffe699;"></div>
<div class="t ts ac vt" style="left:486px;top:141px;width:71px;height:31px;font-size:15px;padding:4px 0px 0px 0px;"><span>ИСТИНА</span></div>
<div style="left:486px;top:172px;width:71px;height:26px;background:#f8cbad;"></div>
<div class="t ts ac vt" style="left:486px;top:172px;width:71px;height:26px;font-size:13.7px;padding:5px 2px 0px 2px;"><span>839509</span></div>
<div class="t ts ar vt" style="left:557px;top:141px;width:33px;height:31px;font-size:9.8px;padding:2px 2px 0px 2px;"><span>4,3%</span></div>
<div class="t ts ar vt" style="left:590px;top:141px;width:57px;height:31px;font-size:9.8px;padding:2px 2px 0px 2px;"><span>5,5%</span></div>
<div class="t ts ar vt" style="left:647px;top:141px;width:62px;height:31px;font-size:9.8px;padding:2px 2px 0px 2px;"><span>4,0%</span></div>
<div style="left:557px;top:172px;width:33px;height:26px;background:#f8cbad;"></div>
<div class="t ts ac vt" style="left:557px;top:172px;width:33px;height:26px;font-size:8.2px;padding:3.5px 0px 0px 0px;"><span>1,6E+07</span></div>
<div style="left:590px;top:172px;width:57px;height:26px;background:#f8cbad;"></div>
<div class="t ts ac vt" style="left:590px;top:172px;width:57px;height:26px;font-size:8px;padding:3.5px 0px 0px 0px;"><span>16884571</span></div>
<div style="left:647px;top:172px;width:62px;height:26px;background:#f8cbad;"></div>
<div class="t ts ac vt" style="left:647px;top:172px;width:62px;height:26px;font-size:8px;padding:3.5px 0px 0px 0px;"><span>17539656</span></div>
<div class="t ts ar vt" style="left:100px;top:199px;width:20px;height:10px;font-size:8px;padding:1px 0px 0px 2px;"><span>511</span></div>
<div style="left:121px;top:198px;width:98px;height:72px;background:#d6dce4;"></div>
<div class="t ts b ac vt wr" style="left:121px;top:198px;width:98px;height:72px;font-size:15.2px;color:#f00;padding:2px 0px 0px 0px;line-height:18.8px;"><span>Общая<br>численность<br>населения -<br>оба пола</span></div>
<div style="left:219px;top:198px;width:196px;height:72px;background:#ff0;"></div>
<div class="t ts b al vt" style="left:219px;top:198px;width:196px;height:72px;font-size:23.6px;color:#f00;padding:8px 2px 0px 5px;"><span>США</span></div>
<div class="t ts ac vt" style="left:486px;top:198px;width:71px;height:72px;font-size:15px;padding:6px 2px 0px 2px;"><span>0</span></div>
<div class="t ts ac vt" style="left:557px;top:198px;width:33px;height:72px;font-size:8px;padding:3.4px 2px 0px 2px;"><span>0</span></div>
<div class="t ts ac vt" style="left:590px;top:198px;width:57px;height:72px;font-size:8px;padding:3.4px 2px 0px 2px;"><span>0</span></div>
<div class="t ts ac vt" style="left:647px;top:198px;width:62px;height:72px;font-size:8px;padding:3.4px 2px 0px 2px;"><span>0</span></div>
<div style="left:218px;top:141px;width:2px;height:129px;background:#000;"></div>
<div style="left:414px;top:141px;width:2px;height:129px;background:#000;"></div>
<div style="left:218px;top:141px;width:198px;height:1.5px;background:#000;"></div>
<div style="left:218px;top:171px;width:198px;height:2px;background:#000;"></div>
<div style="left:218px;top:197px;width:198px;height:2px;background:#000;"></div>
<div style="left:120px;top:198px;width:2.5px;height:72px;background:#000;"></div>
<div style="left:120px;top:197px;width:99px;height:2.5px;background:#000;"></div>
<div style="left:486px;top:172px;width:223px;height:1px;background:#000;"></div>
<div style="left:486px;top:198px;width:223px;height:1px;background:#000;"></div>
<div style="left:486px;top:198px;width:1px;height:97px;background:#000;"></div>
<div style="left:590px;top:172px;width:1px;height:98px;background:#000;"></div>
<div style="left:647px;top:172px;width:1px;height:98px;background:#000;"></div>
<div style="left:708px;top:141px;width:1.5px;height:129px;background:#000;"></div>
<div style="left:709px;top:141px;width:362px;height:129px;background:#ff0;border:2px solid #000;"></div>
<div class="t ts b ac vt wr" style="left:709px;top:141px;width:362px;height:129px;font-size:20px;padding:2px 0px 0px 0px;line-height:24px;"><span><i class="r">Космо-Ноосферные</i> Матрично-<br>Нейронные <i class="r">СИСТЕМЫ:</i><br><i class="u">ИДЕОЛОГИЙ, ЗАКОНОВ,</i><br><i class="u">УПРАВЛЕНИЙ:</i> <i class="r">СИЛОВИКАМИ</i><br><i class="r">Отраслями, Регионами и</i> <i class="u">МИРОМ :)</i></span></div>
<div style="left:1071px;top:141px;width:957px;height:31px;background:#c9c9c9;"></div>
<div style="left:2028px;top:141px;width:501px;height:31px;background:#c9c9c9;"></div>
<div style="left:1071px;top:172px;width:1458px;height:26px;background:#fff2cc;"></div>
<div style="left:1071px;top:198px;width:957px;height:72px;background:#dbdbdb;"></div>
<div style="left:2028px;top:198px;width:501px;height:72px;background:#92d050;"></div>
<div class="t ts b ac vm" style="left:1071px;top:141px;width:957px;height:31px;font-size:24.8px;padding:8px 0px 0px 0px;"><span><i class="r">625-2500-10000</i> <i class="u">СЕРВЕРНЫХ</i> СИСТЕМ <i class="r">ДОРОШКО-САМАРИНОЙ</i></span></div>
<div class="t ts b al vm" style="left:2028px;top:141px;width:501px;height:31px;font-size:24.8px;padding:8px 0px 0px 229px;"><span><i class="r">625-2500-10000</i> <i class="u">СЕРВЕРНЫХ</i> СИСТЕМ <i class="r">ДОРОШКО-САМАРИНОЙ</i></span></div>
<div class="t ts b al vm" style="left:1071px;top:172px;width:1458px;height:26px;font-size:18.1px;padding:4px 0px 0px 4px;"><span><i class="r">Космо-Ноосферные</i> <i class="u">Матрично-Нейронные СИСТЕМЫ/МОДЕЛИ</i> <i class="r">ДОРОШКО-САМАРИНОЙ:</i> <i class="u">ИДЕОЛОГИЙ, ЗАКОНОВ, УПРАВЛЕНИЙ</i> <i class="r">отраслями, регионами и</i> <i class="u">МИРОМ :) в</i> <i class="r">РЕЖИМЕ</i></span></div>
<div class="t ts b ac vt wr" style="left:1071px;top:198px;width:957px;height:72px;font-size:19.8px;padding:1px 0px 0px 0px;line-height:24.3px;"><span><i class="r">ПРЕДВАРИТЕЛЬНЫЙ/УПРОЩЁННЫЙ</i> <i class="u">ДИНАМИЧЕСКИЙ АНАЛИЗ,</i> ЭЛЕМЕНТАРНАЯ-<br>ОПИСАТЕЛЬНАЯ СТАТИСТИКА, ДИСПЕРСИОННЫЙ АНАЛИЗ, НАЧАЛЬНАЯ <i class="u">ЭКОНОМЕТРИКА,</i><br><i class="r">21-50 статистическая</i> <i class="u">модель по каждому фактору</i></span></div>
<div class="t ts b al vt" style="left:2028px;top:198px;width:501px;height:72px;font-size:21.9px;padding:3px 0px 0px 7px;"><span><i class="r">УГЛУБЛЁННЫЙ</i> <i class="u">АНАЛИЗ:</i> РЕГРЕССИОННЫЙ, КЛАСТЕРНЫЙ</span></div>
<div class="t ts b al vt" style="left:2028px;top:198px;width:501px;height:72px;font-size:21.9px;padding:32px 0px 0px 44px;"><span>НЕЧЕТКИХ МНОЖЕСТВ, НЕЙРОННЫХ СЕТЕЙ</span></div>
<div class="t ts b al vt" style="left:2028px;top:198px;width:501px;height:72px;font-size:21.9px;padding:61px 0px 0px 470px;"><span><i class="u">ИСКУССТВЕННЫЙ</i></span></div>
<div style="left:1071px;top:141px;width:1458px;height:1.5px;background:#000;"></div>
<div style="left:1071px;top:171px;width:1458px;height:2px;background:#000;"></div>
<div style="left:1071px;top:197px;width:1458px;height:2px;background:#000;"></div>
<div style="left:1070px;top:141px;width:2px;height:129px;background:#000;"></div>
<div style="left:2027px;top:141px;width:2.5px;height:31px;background:#000;"></div>
<div style="left:2027px;top:198px;width:2.5px;height:72px;background:#000;"></div>
<div style="left:15px;top:269px;width:2514px;height:2px;background:#000;"></div>
<div class="t ts b al vt" style="left:15px;top:270px;width:29px;height:25px;font-size:5.7px;padding:3px 2px 0px 2px;"><span>SUM</span></div>
<div class="t ts b al vt" style="left:44px;top:270px;width:33px;height:25px;font-size:6.4px;padding:3px 2px 0px 2px;"><span>ID Name</span></div>
<div class="t ts b al vt" style="left:77px;top:270px;width:44px;height:25px;font-size:7px;padding:3px 2px 0px 2px;"><span>ID Country</span></div>
<div class="t ts b al vt" style="left:121px;top:270px;width:98px;height:25px;font-size:7px;padding:3px 2px 0px 2px;"><span>Country</span></div>
<div class="t ts b al vt" style="left:219px;top:270px;width:196px;height:25px;font-size:6.5px;padding:3px 2px 0px 2px;"><span>КИТАЙ</span></div>
<div class="t ts b al vt" style="left:415px;top:270px;width:71px;height:25px;font-size:7.2px;padding:3px 2px 0px 2px;"><span>IndicatorName</span></div>
<div style="left:15px;top:270px;width:1px;height:25px;background:#000;"></div>
<div style="left:44px;top:270px;width:1px;height:25px;background:#000;"></div>
<div style="left:77px;top:270px;width:1px;height:25px;background:#000;"></div>
<div style="left:121px;top:270px;width:1px;height:25px;background:#000;"></div>
<div style="left:219px;top:270px;width:1px;height:25px;background:#000;"></div>
<div style="left:415px;top:270px;width:1px;height:25px;background:#000;"></div>
<div style="left:486px;top:270px;width:1px;height:25px;background:#000;"></div>
<div style="left:486px;top:270px;width:71px;height:25px;background:#ff0;"></div>
<div class="t ts b ac vb" style="left:486px;top:270px;width:71px;height:25px;font-size:19.4px;color:#f00;padding:0px 0px 1.2px 0px;"><span>1970</span></div>
<div class="t ts b ac vt" style="left:557px;top:270px;width:33px;height:25px;font-size:13.75px;color:#000;padding:3px 0px 0px 0px;"><span>2017</span></div>
<div style="left:590px;top:270px;width:57px;height:25px;background:#ff0;"></div>
<div class="t ts b ac vb" style="left:590px;top:270px;width:57px;height:25px;font-size:19.4px;color:#f00;padding:0px 0px 1.2px 0px;"><span>2018</span></div>
<div style="left:647px;top:270px;width:62px;height:25px;background:#ff0;"></div>
<div class="t ts b ac vb" style="left:647px;top:270px;width:62px;height:25px;font-size:19.4px;color:#f00;padding:0px 0px 1.2px 0px;"><span>2019</span></div>
<div style="left:590px;top:270px;width:1px;height:25px;background:#000;"></div>
<div style="left:647px;top:270px;width:1px;height:25px;background:#000;"></div>
<div style="left:709px;top:270px;width:1px;height:25px;background:#000;"></div>
<div style="left:766px;top:270px;width:1px;height:25px;background:#000;"></div>
<div style="left:824px;top:270px;width:1px;height:25px;background:#000;"></div>
<div style="left:882px;top:270px;width:1px;height:25px;background:#000;"></div>
<div style="left:940px;top:270px;width:1px;height:25px;background:#000;"></div>
<div style="left:998px;top:270px;width:1px;height:25px;background:#000;"></div>
<div class="t ts b ac vt" style="left:998px;top:270px;width:73px;height:25px;font-size:8px;padding:2px 6px 0px 0px;"><span>Yb=Yi-Y1</span></div>
<svg style="left:1065px;top:271px" width="5" height="5"><path d="M0 0h5v5z" fill="#f00"/></svg>
<div class="t ts b ac vt" style="left:1071px;top:270px;width:82px;height:25px;font-size:10.2px;padding:3.4px 2px 0px 2px;"><span>MX</span></div>
<div class="t ts b ac vt" style="left:1153px;top:270px;width:81px;height:25px;font-size:10.2px;padding:3.4px 2px 0px 2px;"><span>Min</span></div>
<div class="t ts b ac vt" style="left:1234px;top:270px;width:89px;height:25px;font-size:10.2px;padding:3.4px 2px 0px 2px;"><span>Max</span></div>
<div class="t ts b ac vt" style="left:1323px;top:270px;width:94px;height:25px;font-size:10.2px;padding:3.4px 2px 0px 2px;"><span>Sum</span></div>
<svg style="left:1412px;top:271px" width="5" height="5"><path d="M0 0h5v5z" fill="#f00"/></svg>
<div class="t ts b ac vt" style="left:1417px;top:270px;width:48px;height:25px;font-size:10.2px;padding:2px 0px 0px 0px;line-height:13.5px;"><span>Me</span></div>
<div class="t ts b ac vt" style="left:1465px;top:270px;width:53px;height:25px;font-size:10.2px;padding:2px 0px 0px 0px;line-height:13.5px;"><span>ME=>MX</span></div>
<svg style="left:1513px;top:271px" width="5" height="5"><path d="M0 0h5v5z" fill="#f00"/></svg>
<div class="t ts b ac vt" style="left:1518px;top:270px;width:33px;height:25px;font-size:10.2px;padding:2px 0px 0px 0px;line-height:13.5px;"><span>R=Ma</span></div>
<svg style="left:1546px;top:271px" width="5" height="5"><path d="M0 0h5v5z" fill="#f00"/></svg>
<div class="t ts b ac vt" style="left:1551px;top:270px;width:48px;height:25px;font-size:10.2px;padding:2px 0px 0px 0px;line-height:13.5px;"><span>r=R/MX (</span></div>
<svg style="left:1594px;top:271px" width="5" height="5"><path d="M0 0h5v5z" fill="#f00"/></svg>
<div class="t ts b ac vt" style="left:1599px;top:270px;width:33px;height:25px;font-size:10.2px;padding:2px 0px 0px 0px;line-height:13.5px;"><span>DX_B</span></div>
<div class="t ts b ac vt" style="left:1632px;top:270px;width:33px;height:25px;font-size:10.2px;padding:2px 0px 0px 0px;line-height:13.5px;"><span>SX_B</span></div>
<div class="t ts b ac vt" style="left:1665px;top:270px;width:33px;height:25px;font-size:10.2px;padding:2px 0px 0px 0px;line-height:13.5px;"><span>MinSX</span></div>
<div class="t ts b ac vt" style="left:1698px;top:270px;width:33px;height:25px;font-size:10.2px;padding:2px 0px 0px 0px;line-height:13.5px;"><span>MaxSX</span></div>
<div class="t ts b ac vt" style="left:1731px;top:270px;width:33px;height:25px;font-size:10.2px;padding:2px 0px 0px 0px;line-height:13.5px;"><span>N</span></div>
<svg style="left:1759px;top:271px" width="5" height="5"><path d="M0 0h5v5z" fill="#f00"/></svg>
<div class="t ts b ac vt wr" style="left:1764px;top:270px;width:33px;height:25px;font-size:10.2px;padding:2px 0px 0px 0px;line-height:13.5px;"><span>SE=E<br>rrMX</span></div>
<svg style="left:1792px;top:271px" width="5" height="5"><path d="M0 0h5v5z" fill="#f00"/></svg>
<div class="t ts b ac vt wr" style="left:1797px;top:270px;width:33px;height:25px;font-size:10.2px;padding:2px 0px 0px 0px;line-height:13.5px;"><span>t=MX<br>/SE</span></div>
<svg style="left:1825px;top:271px" width="5" height="5"><path d="M0 0h5v5z" fill="#f00"/></svg>
<div class="t ts b ac vt" style="left:1830px;top:270px;width:33px;height:25px;font-size:10.2px;padding:2px 0px 0px 0px;line-height:13.5px;"><span>del</span></div>
<svg style="left:1858px;top:271px" width="5" height="5"><path d="M0 0h5v5z" fill="#f00"/></svg>
<div class="t ts b ac vt wr" style="left:1863px;top:270px;width:33px;height:25px;font-size:10.2px;padding:2px 0px 0px 0px;line-height:13.5px;"><span>Min_<br>T</span></div>
<svg style="left:1891px;top:271px" width="5" height="5"><path d="M0 0h5v5z" fill="#f00"/></svg>
<div class="t ts b ac vt wr" style="left:1896px;top:270px;width:33px;height:25px;font-size:10.2px;padding:2px 0px 0px 0px;line-height:13.5px;"><span>Max_<br>T</span></div>
<svg style="left:1924px;top:271px" width="5" height="5"><path d="M0 0h5v5z" fill="#f00"/></svg>
<div class="t ts b ac vt" style="left:1929px;top:270px;width:33px;height:25px;font-size:10.2px;padding:2px 0px 0px 0px;line-height:13.5px;"><span>V=Sx/</span></div>
<svg style="left:1957px;top:271px" width="5" height="5"><path d="M0 0h5v5z" fill="#f00"/></svg>
<div class="t ts b ac vt" style="left:1962px;top:270px;width:33px;height:25px;font-size:10.2px;padding:2px 0px 0px 0px;line-height:13.5px;"><span>ASS</span></div>
<svg style="left:1990px;top:271px" width="5" height="5"><path d="M0 0h5v5z" fill="#f00"/></svg>
<div class="t ts b ac vt" style="left:1995px;top:270px;width:33px;height:25px;font-size:10.2px;padding:2px 0px 0px 0px;line-height:13.5px;"><span>ЭКС</span></div>
<svg style="left:2023px;top:271px" width="5" height="5"><path d="M0 0h5v5z" fill="#f00"/></svg>
<div style="left:1070px;top:270px;width:2px;height:25px;background:#000;"></div>
<div style="left:1153px;top:270px;width:1px;height:25px;background:#000;"></div>
<div style="left:1234px;top:270px;width:1px;height:25px;background:#000;"></div>
<div style="left:1323px;top:270px;width:1px;height:25px;background:#000;"></div>
<div style="left:1417px;top:270px;width:1px;height:25px;background:#000;"></div>
<div style="left:1465px;top:270px;width:1px;height:25px;background:#000;"></div>
<div style="left:1518px;top:270px;width:1px;height:25px;background:#000;"></div>
<div style="left:1551px;top:270px;width:1px;height:25px;background:#000;"></div>
<div style="left:1599px;top:270px;width:1px;height:25px;background:#000;"></div>
<div style="left:1632px;top:270px;width:1px;height:25px;background:#000;"></div>
<div style="left:1665px;top:270px;width:1px;height:25px;background:#000;"></div>
<div style="left:1698px;top:270px;width:1px;height:25px;background:#000;"></div>
<div style="left:1731px;top:270px;width:1px;height:25px;background:#000;"></div>
<div style="left:1764px;top:270px;width:1px;height:25px;background:#000;"></div>
<div style="left:1797px;top:270px;width:1px;height:25px;background:#000;"></div>
<div style="left:1830px;top:270px;width:1px;height:25px;background:#000;"></div>
<div style="left:1863px;top:270px;width:1px;height:25px;background:#000;"></div>
<div style="left:1896px;top:270px;width:1px;height:25px;background:#000;"></div>
<div style="left:1929px;top:270px;width:1px;height:25px;background:#000;"></div>
<div style="left:1995px;top:270px;width:1px;height:25px;background:#000;"></div>
<div style="left:2028px;top:270px;width:2px;height:25px;background:#000;"></div>
<div style="left:2028px;top:270px;width:40px;height:25px;background:#c6efce;"></div>
<div class="t ts b ac vt wr" style="left:2028px;top:270px;width:40px;height:25px;font-size:6.8px;padding:3px 0px 0px 0px;line-height:9.5px;"><span>MX -<br><i class="r">ИНТЕГР</i></span></div>
<svg style="left:2063px;top:271px" width="5" height="5"><path d="M0 0h5v5z" fill="#f00"/></svg>
<div style="left:2068px;top:270px;width:40px;height:25px;background:#ff0;"></div>
<div class="t ts b ac vt" style="left:2068px;top:270px;width:40px;height:25px;font-size:10px;padding:3px 0px 0px 0px;"><span>MX-R2</span></div>
<div style="left:2108px;top:270px;width:48px;height:25px;background:#ffcc99;"></div>
<div class="t ts b ac vt wr" style="left:2108px;top:270px;width:48px;height:25px;font-size:10.5px;padding:3px 0px 0px 0px;line-height:13.5px;"><span>F(X)<br>(excel)</span></div>
<svg style="left:2151px;top:271px" width="5" height="5"><path d="M0 0h5v5z" fill="#f00"/></svg>
<div style="left:2156px;top:270px;width:48px;height:25px;background:#ffcc99;"></div>
<div class="t ts b ac vt" style="left:2156px;top:270px;width:48px;height:25px;font-size:13.3px;padding:3px 0px 0px 0px;"><span>SSres</span></div>
<div style="left:2204px;top:270px;width:40px;height:25px;background:#ffcc99;"></div>
<div class="t ts b ac vt" style="left:2204px;top:270px;width:40px;height:25px;font-size:13.3px;padding:3px 0px 0px 0px;"><span>SStot</span></div>
<div style="left:2284px;top:270px;width:40px;height:25px;background:#ffcc99;"></div>
<div class="t ts b ac vt wr" style="left:2284px;top:270px;width:40px;height:25px;font-size:10.5px;padding:3px 0px 0px 0px;line-height:13.5px;"><span>Error<br>МОДЕ</span></div>
<div style="left:2324px;top:270px;width:46px;height:25px;background:#ffcc99;"></div>
<div class="t ts b ac vt" style="left:2324px;top:270px;width:46px;height:25px;font-size:10px;padding:3px 0px 0px 0px;"><span>F(X)-b0</span></div>
<svg style="left:2365px;top:271px" width="5" height="5"><path d="M0 0h5v5z" fill="#f00"/></svg>
<div style="left:2370px;top:270px;width:67px;height:25px;background:#ffcc99;"></div>
<div class="t ts b ac vt" style="left:2370px;top:270px;width:67px;height:25px;font-size:10px;padding:3px 0px 0px 0px;"><span>F(X)-b1</span></div>
<div style="left:2437px;top:270px;width:48px;height:25px;background:#ffcc99;"></div>
<div class="t ts b ac vt" style="left:2437px;top:270px;width:48px;height:25px;font-size:13.3px;padding:3px 0px 0px 0px;"><span>SSreg</span></div>
<div style="left:2244px;top:270px;width:40px;height:25px;background:#a9d08e;"></div>
<div class="t ts b ac vt" style="left:2244px;top:270px;width:40px;height:25px;font-size:13.3px;padding:3px 0px 0px 0px;"><span>R2</span></div>
<div style="left:2485px;top:270px;width:44px;height:25px;background:#a9d08e;"></div>
<div class="t ts b ac vt" style="left:2485px;top:270px;width:44px;height:25px;font-size:13.3px;padding:3px 0px 0px 0px;"><span>R2-b0</span></div>
<div style="left:2068px;top:270px;width:1px;height:25px;background:#000;"></div>
<div style="left:2108px;top:270px;width:1px;height:25px;background:#000;"></div>
<div style="left:2156px;top:270px;width:1px;height:25px;background:#000;"></div>
<div style="left:2204px;top:270px;width:1px;height:25px;background:#000;"></div>
<div style="left:2244px;top:270px;width:1px;height:25px;background:#000;"></div>
<div style="left:2284px;top:270px;width:1px;height:25px;background:#000;"></div>
<div style="left:2324px;top:270px;width:1px;height:25px;background:#000;"></div>
<div style="left:2370px;top:270px;width:1px;height:25px;background:#000;"></div>
<div style="left:2437px;top:270px;width:1px;height:25px;background:#000;"></div>
<div style="left:2485px;top:270px;width:1px;height:25px;background:#000;"></div>
<div style="left:15px;top:293px;width:471px;height:2px;background:#000;"></div>
<div style="left:1071px;top:293px;width:957px;height:2px;background:#000;"></div>
<div style="left:486px;top:294px;width:585px;height:1px;background:#888;"></div>
<div style="left:218px;top:269px;width:198px;height:26px;border:2px solid #217346;"></div>
<div style="left:413px;top:292px;width:5px;height:5px;background:#217346;border:1px solid #fff;"></div>
<div class="t ts al vm" style="left:15px;top:295px;width:29px;height:22px;font-size:13.8px;padding:0px 2px 3px 3px;"><span>231-</span></div>
<div class="t ts ar vm" style="left:44px;top:295px;width:33px;height:22px;font-size:14px;padding:0px 4px 3px 2px;"><span>511</span></div>
<div class="t ts ar vm" style="left:77px;top:295px;width:44px;height:22px;font-size:14px;padding:0px 3px 3px 2px;"><span>231</span></div>
<div style="left:121px;top:295px;width:294px;height:22px;background:#c6e0b4;"></div>
<div class="t ts b al vm" style="left:121px;top:295px;width:98px;height:22px;font-size:15.1px;padding:0px 2px 0px 3px;"><span>США</span></div>
<div class="t ts b al vm" style="left:219px;top:295px;width:196px;height:22px;font-size:15.47px;padding:0px 0px 1px 3px;"><span>Общая численность населения</span></div>
<div class="t ts al vm" style="left:415px;top:295px;width:71px;height:22px;font-size:13.9px;padding:0px 2px 2px 3px;"><span>1000 чел.</span></div>
<div class="t ts al vm" style="left:15px;top:317px;width:29px;height:22.5px;font-size:13.8px;padding:0px 2px 3px 3px;"><span>231-</span></div>
<div class="t ts ar vm" style="left:44px;top:317px;width:33px;height:22.5px;font-size:14px;padding:0px 4px 3px 2px;"><span>511</span></div>
<div class="t ts ar vm" style="left:77px;top:317px;width:44px;height:22.5px;font-size:14px;padding:0px 3px 3px 2px;"><span>231</span></div>
<div style="left:121px;top:317px;width:294px;height:22.5px;background:#c6e0b4;"></div>
<div class="t ts b al vm" style="left:121px;top:317px;width:98px;height:22.5px;font-size:15.1px;padding:0px 2px 0px 3px;"><span>США</span></div>
<div class="t ts b al vm" style="left:219px;top:317px;width:196px;height:22.5px;font-size:15.47px;padding:0px 0px 1px 3px;"><span>Общая численность населения</span></div>
<div class="t ts al vm" style="left:415px;top:317px;width:71px;height:22.5px;font-size:13.9px;padding:0px 2px 2px 3px;"><span>млн.чел.</span></div>
<div class="t ts ar vt" style="left:486px;top:295px;width:71px;height:22px;font-size:11.73px;padding:3px 3px 0px 2px;"><span>209513,341</span></div>
<div class="t ts ar vt" style="left:486px;top:317px;width:71px;height:22.5px;font-size:11.73px;padding:2px 3px 0px 2px;"><span>209,513341</span></div>
<div class="t ts al vt" style="left:557px;top:295px;width:33px;height:22px;font-size:11.5px;padding:3px 2px 0px 5px;"><span>####</span></div>
<div class="t ts ar vt" style="left:557px;top:317px;width:33px;height:22.5px;font-size:11.5px;padding:2px 3px 0px 2px;"><span>325</span></div>
<div class="t ts ar vm" style="left:590px;top:295px;width:57px;height:22px;font-size:13.8px;padding:0px 3px 0px 2px;"><span>327096</span></div>
<div class="t ts ar vm" style="left:590px;top:317px;width:57px;height:22.5px;font-size:13.8px;padding:0px 3px 0px 2px;"><span>327,096</span></div>
<div class="t ts ar vm" style="left:647px;top:295px;width:62px;height:22px;font-size:13.8px;padding:0px 2px 0px 0px;"><span>329064,9</span></div>
<div class="t ts ar vm" style="left:647px;top:317px;width:62px;height:22.5px;font-size:13.8px;padding:0px 2px 0px 0px;"><span>329,0649</span></div>
<div style="left:709px;top:295px;width:115px;height:22px;background:#ffe699;"></div>
<div style="left:824px;top:295px;width:58px;height:22px;background:#ff0;"></div>
<div class="t ts ar vm" style="left:709px;top:295px;width:57px;height:22px;font-size:13.9px;padding:0px 3px 0px 2px;"><span>40,7%</span></div>
<div class="t ts ar vm" style="left:766px;top:295px;width:58px;height:22px;font-size:13.9px;padding:0px 3px 0px 2px;"><span>35,7%</span></div>
<div class="t ts ac vm" style="left:824px;top:295px;width:58px;height:22px;font-size:14px;padding:0px 2px 0px 2px;"><span>=</span></div>
<div style="left:709px;top:317px;width:115px;height:22.5px;background:#ffe699;"></div>
<div style="left:824px;top:317px;width:58px;height:22.5px;background:#ff0;"></div>
<div class="t ts ar vm" style="left:709px;top:317px;width:57px;height:22.5px;font-size:13.9px;padding:0px 3px 0px 2px;"><span>34,1%</span></div>
<div class="t ts ar vm" style="left:766px;top:317px;width:58px;height:22.5px;font-size:13.9px;padding:0px 3px 0px 2px;"><span>29,1%</span></div>
<div class="t ts ac vm" style="left:824px;top:317px;width:58px;height:22.5px;font-size:14px;padding:0px 2px 0px 2px;"><span>=</span></div>
<div style="left:882px;top:295px;width:189px;height:22px;background:#c6e0b4;"></div>
<div class="t ts b al vm" style="left:882px;top:295px;width:189px;height:22px;font-size:14.9px;padding:3px 2px 0px 3px;"><span><i class="r">БЕЗРАБОТИЦА,</i> <i style="font-weight:normal">млн.ч</i></span></div>
<div style="left:882px;top:317px;width:189px;height:22.5px;background:#f8cbad;"></div>
<div class="t ts al vm" style="left:882px;top:317px;width:189px;height:22.5px;font-size:14.9px;padding:0px 2px 0px 3px;"><span>ЗАНЯТОСТЬ-100%</span></div>
<div style="left:1071px;top:295px;width:82px;height:22px;background:#ff0;"></div>
<div class="t ts b ac vm" style="left:1071px;top:295px;width:82px;height:22px;font-size:17.4px;color:#f00;padding:3px 2px 0px 2px;"><span>45,5</span></div>
<div style="left:1153px;top:295px;width:81px;height:22px;background:#ff0;"></div>
<div class="t ts b ac vm" style="left:1153px;top:295px;width:81px;height:22px;font-size:17.4px;color:#f00;padding:3px 2px 0px 2px;"><span>30,4</span></div>
<div style="left:1234px;top:295px;width:89px;height:22px;background:#ff0;"></div>
<div class="t ts b ac vm" style="left:1234px;top:295px;width:89px;height:22px;font-size:17.4px;color:#f00;padding:3px 2px 0px 2px;"><span>66,9</span></div>
<div class="t ts ac vm" style="left:1071px;top:317px;width:82px;height:22.5px;font-size:16.5px;padding:3px 2px 0px 2px;"><span>133,6</span></div>
<div class="t ts ac vm" style="left:1153px;top:317px;width:81px;height:22.5px;font-size:16.5px;padding:3px 2px 0px 2px;"><span>104,8</span></div>
<div class="t ts ac vm" style="left:1234px;top:317px;width:89px;height:22.5px;font-size:16.5px;padding:3px 2px 0px 2px;"><span>164,5</span></div>
<div style="left:1323px;top:317px;width:94px;height:22.5px;background:#ffe699;border:2px solid #000;"></div>
<div class="t ts b ac vm" style="left:1323px;top:317px;width:94px;height:22.5px;font-size:17px;color:#0000cd;padding:3px 2px 0px 2px;"><span>2</span></div>
<div style="left:709px;top:295px;width:1.5px;height:44.5px;background:#000;"></div>
<div style="left:766px;top:295px;width:1px;height:44.5px;background:#000;"></div>
<div style="left:824px;top:295px;width:1px;height:44.5px;background:#000;"></div>
<div style="left:882px;top:295px;width:1px;height:44.5px;background:#000;"></div>
<div style="left:1071px;top:295px;width:1.5px;height:44.5px;background:#000;"></div>
<div style="left:1153px;top:295px;width:1px;height:44.5px;background:#000;"></div>
<div style="left:1234px;top:295px;width:1px;height:44.5px;background:#000;"></div>
<div style="left:1323px;top:295px;width:1px;height:44.5px;background:#000;"></div>
<div style="left:709px;top:316.5px;width:614px;height:1px;background:#000;"></div>
<div style="left:709px;top:338px;width:708px;height:2px;background:#000;"></div>
<div style="left:709px;top:295px;width:1319px;height:1px;background:#666;"></div>
<svg style="left:487px;top:340.5px" width="7" height="7"><path d="M0 0h7L0 7z" fill="#008000"/></svg>
<div class="t ts ar vt" style="left:486px;top:340px;width:60px;height:12px;font-size:7px;padding:2px 12px 0px 2px;"><span>#ДЕЛ/0!</span></div>
<div class="t ts ar vt" style="left:557px;top:339.5px;width:33px;height:32.5px;font-size:7.7px;padding:2px 1px 0px 0px;"><span>9,84532</span></div>
<div class="t ts ar vt" style="left:590px;top:339.5px;width:57px;height:32.5px;font-size:7.7px;padding:2px 1px 0px 0px;"><span>9,949537</span></div>
<div class="t ts ar vt" style="left:647px;top:339.5px;width:62px;height:32.5px;font-size:7.7px;padding:2px 1px 0px 0px;"><span>10,047718</span></div>
<div class="t ts ar vb nc" style="left:486px;top:372px;width:71px;height:9px;font-size:7.7px;padding:0px 1px 0px 0px;"><span>-1073303</span></div>
<div class="t ts ar vb nc" style="left:557px;top:372px;width:33px;height:9px;font-size:7.7px;padding:0px 1px 0px 0px;"><span>-2E+07</span></div>
<div class="t ts ar vb nc" style="left:590px;top:372px;width:57px;height:9px;font-size:7.7px;padding:0px 1px 0px 0px;"><span>-20564748,52</span></div>
<div class="t ts ar vb nc" style="left:647px;top:372px;width:62px;height:9px;font-size:7.7px;padding:0px 1px 0px 0px;"><span>-21385178,35</span></div>
<div class="t ts b al vm nc" style="left:887px;top:344px;width:900px;height:30px;font-size:24.76px;color:#0563c1;padding:0px 2px 0px 0px;white-space:pre;"><span><i style="color:#0563c1;text-decoration:underline;text-decoration-thickness:2px;text-underline-offset:3px;">СРАВНИТЬ С ПОКАЗАТЕЛЯМИ В </i><i style="color:#00b050;text-decoration:underline;text-decoration-thickness:2px;text-underline-offset:3px;">РЕАЛЬНОМ</i><i style="color:#0563c1;text-decoration:underline;text-decoration-thickness:2px;text-underline-offset:3px;"> ВЫРАЖЕНИИ </i><i style="color:#548235;text-decoration:underline;text-decoration-thickness:2px;text-underline-offset:3px;">:):)</i><i style="color:#f00;text-decoration:underline;text-decoration-thickness:2px;text-underline-offset:3px;">:):)</i><i style="color:#548235;text-decoration:underline;text-decoration-thickness:2px;text-underline-offset:3px;">:):)</i></span></div>
<div style="left:15px;top:380px;width:542px;height:30px;background:#ff0;border:2px solid #000;"></div>
<div class="t ts b ac vm" style="left:15px;top:380px;width:542px;height:30px;font-size:22.18px;padding:5px 0px 0px 0px;"><span>Статистические <i class="r">ошибки</i> СНС <i class="r">250</i> Стран, Регионов</span></div>
<div style="left:15px;top:410px;width:204px;height:25px;background:#ff0;"></div>
<div class="t ts b al vb" style="left:15px;top:410px;width:204px;height:25px;font-size:19.4px;color:#f00;padding:0px 2px 1px 4px;"><span>США. ERROR</span></div>
<div class="t ts b ac vt" style="left:219px;top:410px;width:196px;height:25px;font-size:13px;padding:3px 2px 0px 2px;"><span>MX</span></div>
<div class="t ts b ac vt" style="left:415px;top:410px;width:71px;height:25px;font-size:13px;padding:3px 2px 0px 2px;"><span>Min</span></div>
<div class="t ts b ac vt" style="left:486px;top:410px;width:71px;height:25px;font-size:13px;padding:3px 2px 0px 2px;"><span>Max</span></div>
<div style="left:15px;top:435px;width:106px;height:25px;background:#f8cbad;"></div>
<div class="t ts b al vm" style="left:15px;top:435px;width:106px;height:25px;font-size:16.84px;padding:2px 2px 0px 4px;"><span>GDP/VA %</span></div>
<div style="left:121px;top:435px;width:98px;height:25px;background:#b4c6e7;border:2px solid #000;"></div>
<div class="t ts ac vm" style="left:121px;top:435px;width:98px;height:25px;font-size:19.5px;color:#f00;padding:4px 2px 0px 6px;"><span>ERROR=</span></div>
<div style="left:219px;top:435px;width:196px;height:25px;background:#ffd966;"></div>
<div class="t ts b ac vm" style="left:219px;top:435px;width:196px;height:25px;font-size:17.33px;color:#f00;padding:2px 2px 0px 2px;"><span>0,2%</span></div>
<div style="left:415px;top:435px;width:142px;height:25px;background:#ff0;"></div>
<div class="t ts ac vm" style="left:415px;top:435px;width:71px;height:25px;font-size:18px;padding:3px 2px 0px 2px;"><span>-1,5%</span></div>
<div class="t ts ac vm" style="left:486px;top:435px;width:71px;height:25px;font-size:18px;padding:3px 2px 0px 2px;"><span>1,6%</span></div>
<div style="left:15px;top:460px;width:204px;height:23px;background:#a9d08e;"></div>
<div class="t ts b al vm" style="left:15px;top:460px;width:106px;height:23px;font-size:17.28px;padding:2px 2px 0px 4px;"><span><i class="r">GDP,</i> трлн.$</span></div>
<div class="t ts b ac vm" style="left:121px;top:460px;width:98px;height:23px;font-size:17.82px;color:#f00;padding:3px 2px 0px 2px;"><span>21,433</span></div>
<div style="left:219px;top:460px;width:338px;height:23px;background:#ffd966;"></div>
<div class="t ts b ac vm" style="left:219px;top:460px;width:196px;height:23px;font-size:17.6px;color:#f00;padding:3px 2px 0px 2px;"><span>0,049</span></div>
<div class="t ts b ac vm" style="left:415px;top:460px;width:71px;height:23px;font-size:17.6px;color:#f00;padding:3px 2px 0px 2px;"><span>-0,316</span></div>
<div class="t ts b ac vm" style="left:486px;top:460px;width:71px;height:23px;font-size:17.6px;color:#f00;padding:3px 2px 0px 2px;"><span>0,340</span></div>
<div style="left:15px;top:435px;width:542px;height:1px;background:#333;"></div>
<div style="left:15px;top:460px;width:542px;height:1px;background:#333;"></div>
<div style="left:15px;top:483px;width:542px;height:1px;background:#333;"></div>
<div style="left:121px;top:460px;width:1px;height:23px;background:#333;"></div>
<div style="left:219px;top:410px;width:1px;height:73px;background:#333;"></div>
<div style="left:415px;top:410px;width:1px;height:73px;background:#333;"></div>
<div style="left:486px;top:410px;width:1px;height:73px;background:#333;"></div>
<div style="left:15px;top:498px;width:542px;height:22px;background:#ff0;border:2px solid #000;"></div>
<div class="t ts b ac vm" style="left:15px;top:498px;width:542px;height:22px;font-size:17.04px;padding:3px 0px 0px 0px;"><span>МОДЕЛИ <i class="r">УПР-НИЯ</i> VA-<i class="u">ОТРАСЛЕЙ</i> <i class="r">Д-С</i> СНС <i class="r">250</i> Стран,Регионов</span></div>
<div style="left:15px;top:536px;width:542px;height:23px;background:#ff0;border:2px solid #000;"></div>
<div class="t ts b ac vm" style="left:15px;top:536px;width:542px;height:23px;font-size:18.15px;padding:3px 0px 0px 0px;"><span>МОДЕЛИ <i class="u">БАНКОВ</i> <i class="r">Д-С</i> <i class="u">М0-М1-М2</i> СНС <i class="r">250</i> Стран,Регионов</span></div>
<div style="left:44px;top:559px;width:1px;height:18px;background:#333;"></div>
<div style="left:77px;top:559px;width:1px;height:18px;background:#333;"></div>
<div style="left:121px;top:559px;width:1px;height:18px;background:#333;"></div>
<div style="left:219px;top:559px;width:1px;height:18px;background:#333;"></div>
<div style="left:415px;top:559px;width:1px;height:18px;background:#333;"></div>
<div style="left:486px;top:559px;width:1px;height:18px;background:#333;"></div>
<div style="left:15px;top:577px;width:542px;height:1px;background:#333;"></div>
<div style="left:15px;top:577px;width:542px;height:27px;background:#c6e0b4;"></div>
<div class="t ts b al vm" style="left:15px;top:577px;width:204px;height:27px;font-size:21.58px;padding:7px 0px 0px 4px;"><span><i class="r">Начало</i> КРАХА</span></div>
<div class="t ts b ac vm" style="left:219px;top:577px;width:196px;height:27px;font-size:21.3px;color:#000;padding:7px 0px 0px 0px;"><span>1954 г.</span></div>
<div class="t ts b ac vm" style="left:415px;top:577px;width:71px;height:27px;font-size:21px;color:#000;padding:7px 0px 0px 0px;"><span>9 мес.</span></div>
<div class="t ts b ac vm" style="left:486px;top:577px;width:71px;height:27px;font-size:21px;color:#000;padding:7px 0px 0px 0px;"><span>6 дн.</span></div>
<div style="left:15px;top:604px;width:542px;height:27px;background:#f4b084;"></div>
<div class="t ts b al vm" style="left:15px;top:604px;width:204px;height:27px;font-size:21.58px;padding:7px 0px 0px 4px;"><span><i class="r">КРАХ</i> ЭКОНОМИКИ</span></div>
<div class="t ts b ac vm" style="left:219px;top:604px;width:196px;height:27px;font-size:21.3px;color:#f00;padding:7px 0px 0px 0px;"><span>2011 г.</span></div>
<div class="t ts b ac vm" style="left:415px;top:604px;width:71px;height:27px;font-size:21px;color:#f00;padding:7px 0px 0px 0px;"><span>6 мес.</span></div>
<div class="t ts b ac vm" style="left:486px;top:604px;width:71px;height:27px;font-size:21px;color:#f00;padding:7px 0px 0px 0px;"><span>1 дн.</span></div>
<div style="left:15px;top:631px;width:542px;height:27px;background:#b4c6e7;"></div>
<div class="t ts b al vm" style="left:15px;top:631px;width:204px;height:27px;font-size:21.58px;padding:7px 0px 0px 4px;"><span><i class="r">КРАХ</i> ЗАВОДОВ</span></div>
<div class="t ts b ac vm" style="left:219px;top:631px;width:196px;height:27px;font-size:21.3px;color:#0000cd;padding:7px 0px 0px 0px;"><span>4-х Кратный 2018г.</span></div>
<div class="t ts b ac vm" style="left:415px;top:631px;width:71px;height:27px;font-size:21px;color:#f00;padding:7px 0px 0px 0px;"><span>5 мес.</span></div>
<div class="t ts b ac vm" style="left:486px;top:631px;width:71px;height:27px;font-size:21px;color:#f00;padding:7px 0px 0px 0px;"><span>29 дн.</span></div>
<div style="left:15px;top:604px;width:542px;height:1px;background:#333;"></div>
<div style="left:15px;top:631px;width:542px;height:1px;background:#333;"></div>
<div style="left:15px;top:658px;width:542px;height:1px;background:#333;"></div>
<div style="left:219px;top:577px;width:1px;height:81px;background:#333;"></div>
<div style="left:415px;top:577px;width:1px;height:81px;background:#333;"></div>
<div style="left:486px;top:577px;width:1px;height:81px;background:#333;"></div>
<div style="left:15px;top:668px;width:542px;height:24px;background:#ff0;"></div>
<div class="t ts b al vm" style="left:15px;top:668px;width:542px;height:24px;font-size:17.96px;padding:4px 2px 0px 4px;"><span><i class="r">ЗАКОНОДАТЕЛЬНЫЕ</i> МОДЕЛИ <i class="u">ДОРОШКО-САМАРИНОЙ:</i></span></div>
<div style="left:15px;top:692px;width:400px;height:24px;background:#ffc000;"></div>
<div class="t ts b al vm" style="left:15px;top:692px;width:400px;height:24px;font-size:19.82px;padding:4px 2px 0px 4px;"><span>США. НОРМАТИВНЫЕ ЗАКОНЫ</span></div>
<div class="t ts b ac vt" style="left:415px;top:692px;width:71px;height:24px;font-size:13px;padding:1.5px 2px 0px 2px;"><span>Min</span></div>
<div class="t ts b ac vt" style="left:486px;top:692px;width:71px;height:24px;font-size:13px;padding:1.5px 2px 0px 2px;"><span>Max</span></div>
<div style="left:415px;top:692px;width:1px;height:24px;background:#333;"></div>
<div style="left:486px;top:692px;width:1px;height:24px;background:#333;"></div>
<div style="left:15px;top:716px;width:542px;height:27px;background:#ff0;border:2px solid #000;"></div>
<div class="t ts b ac vm" style="left:15px;top:716px;width:542px;height:27px;font-size:21.13px;padding:8px 0px 0px 0px;"><span>МОДЕЛИ <i class="u">ОТРАСЛЕЙ</i> <i class="r">Д-С</i> СНС <i class="r">250</i> Стран,Регионов</span></div>
<div style="left:15px;top:743px;width:542px;height:25px;background:#a9d08e;"></div>
<div class="t ts b al vm" style="left:15px;top:743px;width:400px;height:25px;font-size:19.8px;padding:5px 0px 0px 4px;"><span><i style="font-weight:normal">С/Х+Гор+Маш+ЖКХ+Строй+ТранспСвязь ISIC</i></span></div>
<div class="t ts b ac vm" style="left:415px;top:743px;width:71px;height:25px;font-size:18.5px;color:#f00;padding:3px 2px 0px 2px;"><span>65%</span></div>
<div class="t ts b ac vm" style="left:486px;top:743px;width:71px;height:25px;font-size:18.5px;padding:3px 2px 0px 2px;"><span>80%</span></div>
<div style="left:15px;top:768px;width:542px;height:25px;background:#f8cbad;"></div>
<div class="t ts b al vm" style="left:15px;top:768px;width:400px;height:25px;font-size:19.8px;padding:5px 0px 0px 4px;"><span><i class="r">Торговля</i><i style="font-weight:normal"> + </i><i class="r">Услуги</i><i style="font-weight:normal"> ISIC G-H+J-P</i></span></div>
<div class="t ts b ac vm" style="left:415px;top:768px;width:71px;height:25px;font-size:18.5px;color:#f00;padding:3px 2px 0px 2px;"><span>35%</span></div>
<div class="t ts b ac vm" style="left:486px;top:768px;width:71px;height:25px;font-size:18.5px;padding:3px 2px 0px 2px;"><span>20%</span></div>
<div style="left:15px;top:793px;width:542px;height:25px;background:#a9d08e;"></div>
<div class="t ts b al vm" style="left:15px;top:793px;width:400px;height:25px;font-size:19.8px;padding:5px 0px 0px 4px;"><span><i class="r">Производство</i><i style="font-weight:normal"> (ISIC D) </i><i class="r">Manufacturing</i><i style="font-weight:normal"> (ISIC D)</i></span></div>
<div class="t ts b ac vm" style="left:415px;top:793px;width:71px;height:25px;font-size:18.5px;color:#f00;padding:3px 2px 0px 2px;"><span>40%</span></div>
<div class="t ts b ac vm" style="left:486px;top:793px;width:71px;height:25px;font-size:18.5px;padding:3px 2px 0px 2px;"><span>45%</span></div>
<div style="left:15px;top:768px;width:542px;height:1px;background:#333;"></div>
<div style="left:15px;top:793px;width:542px;height:1px;background:#333;"></div>
<div style="left:415px;top:743px;width:1px;height:75px;background:#333;"></div>
<div style="left:486px;top:743px;width:1px;height:75px;background:#333;"></div>
<div style="left:15px;top:817px;width:542px;height:24px;background:#ff0;border:2px solid #000;"></div>
<div class="t ts b ac vm" style="left:15px;top:817px;width:542px;height:24px;font-size:18.15px;padding:3px 0px 0px 0px;"><span>МОДЕЛИ <i class="u">БАНКОВ</i> <i class="r">Д-С</i> <i class="u">М0-М1-М2</i> СНС <i class="r">250</i> Стран,Регионов</span></div>
<div style="left:15px;top:871px;width:542px;height:20px;background:#c6e0b4;"></div>
<div class="t ts b al vm" style="left:15px;top:871px;width:400px;height:20px;font-size:15.31px;padding:3px 0px 0px 3px;"><span><i class="r">ПОТРЕБНОСТЬ В</i> <i class="u">УПРАВЛЕНЦАХ,</i> <i class="r">ТЫС.ЧЕЛ.</i></span></div>
<div class="t ts b ac vm" style="left:415px;top:871px;width:71px;height:20px;font-size:15.5px;color:#0000cd;padding:3px 2px 0px 2px;"><span>1000</span></div>
<div class="t ts b ac vm" style="left:486px;top:871px;width:71px;height:20px;font-size:15.73px;padding:3px 0px 0px 0px;"><span>329,0649</span></div>
<div style="left:15px;top:891px;width:542px;height:20px;background:#c6e0b4;"></div>
<div class="t ts b al vm" style="left:15px;top:891px;width:400px;height:20px;font-size:15.31px;padding:3px 0px 0px 3px;"><span><i class="r">ПОТРЕБНОСТЬ В</i> <i class="u">ПРОФЕССУРЕ,</i> <i class="r">ТЫС.ЧЕЛ.</i></span></div>
<div class="t ts b ac vm" style="left:415px;top:891px;width:71px;height:20px;font-size:15.5px;color:#0000cd;padding:3px 2px 0px 2px;"><span>10</span></div>
<div class="t ts b ac vm" style="left:486px;top:891px;width:71px;height:20px;font-size:15.73px;padding:3px 0px 0px 0px;"><span>32,90649</span></div>
<div style="left:15px;top:911px;width:542px;height:20px;background:#c6e0b4;"></div>
<div class="t ts b al vm" style="left:15px;top:911px;width:400px;height:20px;font-size:15.31px;padding:3px 0px 0px 3px;"><span><i class="r">ПОТРЕБНОСТЬ В</i> <i class="u">ЭКОНОМРАЗВЕДКЕ,</i> <i class="r">ЧЕЛ.</i></span></div>
<div class="t ts b ac vm" style="left:415px;top:911px;width:71px;height:20px;font-size:15.5px;color:#0000cd;padding:3px 2px 0px 2px;"><span>10</span></div>
<div class="t ts b ac vm" style="left:486px;top:911px;width:71px;height:20px;font-size:15.73px;padding:3px 0px 0px 0px;"><span>3290,649</span></div>
<div style="left:15px;top:871px;width:542px;height:1px;background:#333;"></div>
<div style="left:15px;top:891px;width:542px;height:1px;background:#333;"></div>
<div style="left:15px;top:911px;width:542px;height:1px;background:#333;"></div>
<div style="left:15px;top:931px;width:542px;height:1px;background:#333;"></div>
<div style="left:415px;top:871px;width:1px;height:60px;background:#333;"></div>
<div style="left:486px;top:871px;width:1px;height:60px;background:#333;"></div>
<div class="t ts al vm" style="left:222px;top:951px;width:200px;height:21px;font-size:13.41px;padding:0px 2px 0px 0px;"><span>ПРОМЫШЛЕННОСТЬ</span></div>
<div class="t ts al vm" style="left:222px;top:972px;width:200px;height:21px;font-size:13.7px;padding:0px 2px 0px 0px;"><span>УСЛУГИ <i class="r"><b>1970-2019</b></i></span></div>
<div class="t ts ar vb" style="left:415px;top:951px;width:71px;height:21px;font-size:17.35px;padding:0px 4px 0px 0px;"><span>-0,0035</span></div>
<div class="t ts ar vb" style="left:486px;top:951px;width:71px;height:21px;font-size:17.23px;padding:0px 4px 0px 0px;"><span>7,39071</span></div>
<div class="t ts ar vb" style="left:415px;top:972px;width:71px;height:21px;font-size:17.35px;padding:0px 4px 0px 0px;"><span>0,00353</span></div>
<div class="t ts ar vb" style="left:486px;top:972px;width:71px;height:21px;font-size:17.23px;padding:0px 4px 0px 0px;"><span>-6,3907</span></div>
<div class="t ts al vm" style="left:18px;top:993px;width:200px;height:21px;font-size:12.8px;padding:0px 2px 1px 0px;"><span><i class="r"><b>КРИЗИС</b></i> НАЧАЛО</span></div>
<div class="t ts al vm" style="left:18px;top:1014px;width:200px;height:21px;font-size:12.8px;padding:0px 2px 1px 0px;"><span><i class="r"><b>КРИЗИС</b></i> КОНЕЦ</span></div>
<div class="t ts ar vb" style="left:219px;top:993px;width:196px;height:21px;font-size:17.3px;padding:0px 3px 0px 2px;"><span>0,5</span></div>
<div class="t ts ar vb" style="left:219px;top:1014px;width:196px;height:22px;font-size:17.3px;padding:0px 3px 0px 2px;"><span>0,3</span></div>
<div style="left:415px;top:993px;width:71px;height:21px;background:#ff0;"></div>
<div class="t ts b ar vb" style="left:415px;top:993px;width:71px;height:21px;font-size:17.54px;color:#f00;padding:0px 4px 0px 0px;"><span>1954,77</span></div>
<div style="left:415px;top:1014px;width:71px;height:22px;background:#92d050;"></div>
<div class="t ts b ar vb" style="left:415px;top:1014px;width:71px;height:22px;font-size:17.54px;color:#f00;padding:0px 4px 0px 0px;"><span>2011,5</span></div>
<div class="t td al vm" style="left:19px;top:1048px;width:300px;height:22px;font-size:15.06px;color:#0563c1;padding:0px 2px 0px 0px;white-space:pre;"><span><i style="color:#0563c1;text-decoration:underline">см. </i><i style="color:#f00;text-decoration:underline">Точечная</i><i style="color:#0563c1;text-decoration:underline"> диаграмма в Excel</i></span></div>
<div class="t ts ar vm" style="left:415px;top:1046px;width:71px;height:22px;font-size:14.2px;padding:0px 2px 3px 2px;"><span>9</span></div>
<div class="t ts ar vm" style="left:486px;top:1046px;width:71px;height:22px;font-size:14.2px;padding:0px 2px 3px 0px;"><span>5,5343168</span></div>
<div class="t ts ar vb" style="left:415px;top:1068px;width:71px;height:18px;font-size:14.2px;padding:0px 2px 2px 2px;"><span>6</span></div>
<div class="t ts ar vb" style="left:486px;top:1068px;width:71px;height:18px;font-size:14.2px;padding:0px 2px 2.5px 0px;"><span>0,5949667</span></div>
<div class="t ts ar vt" style="left:100px;top:1086px;width:21px;height:12px;font-size:7px;padding:1.5px 1px 0px 0px;"><span>0,1</span></div>
<div class="t ts ar vt" style="left:160px;top:1086px;width:59px;height:12px;font-size:7.6px;padding:1.5px 1px 0px 0px;"><span>2018,498116</span></div>
<div class="t ts al vb" style="left:222px;top:1086px;width:200px;height:16px;font-size:12.91px;padding:0px 2px 0px 0px;"><span>Manufacturing (ISIC D)</span></div>
<div class="t ts ar vb" style="left:415px;top:1086px;width:71px;height:16px;font-size:12.4px;padding:0px 2px 0px 0px;"><span>-0,00272967</span></div>
<div class="t ts ar vb" style="left:486px;top:1086px;width:71px;height:16px;font-size:12.4px;padding:0px 2px 0px 0px;"><span>5,609825022</span></div>
<div class="t ta al vt" style="left:79px;top:1153px;width:30px;height:10px;font-size:6.3px;padding:1px 2px 0px 0px;"><span>Code</span></div>
<div class="t ts b al vb" style="left:124px;top:1150px;width:200px;height:19px;font-size:15.33px;padding:0px 2px 0px 0px;"><span>Производство стали</span></div>
<div style="left:77px;top:1171px;width:142px;height:76.5px;background:#d9e1f2;"></div>
<div style="left:415px;top:1171px;width:71px;height:76.5px;background:#d9e1f2;"></div>
<div style="left:219px;top:1171px;width:196px;height:23px;background:#f8cbad;"></div>
<div style="left:219px;top:1194px;width:196px;height:53.5px;background:#ff0;"></div>
<svg style="left:408px;top:1172px" width="7" height="7"><path d="M0 0h7v7z" fill="#f00"/></svg>
<div class="t ts ar vt" style="left:77px;top:1171px;width:44px;height:23px;font-size:13.5px;padding:3.2px 3px 0px 2px;"><span>5000</span></div>
<div class="t ts ar vt" style="left:77px;top:1194px;width:44px;height:30.5px;font-size:13.5px;padding:3.2px 3px 0px 2px;"><span>231</span></div>
<div class="t ts al vt" style="left:121px;top:1171px;width:98px;height:23px;font-size:13.5px;padding:3.2px 0px 0px 3px;"><span>Производство стали</span></div>
<div class="t ts al vt" style="left:121px;top:1194px;width:98px;height:30.5px;font-size:13.5px;padding:3.2px 0px 0px 3px;"><span>Производство стали</span></div>
<div class="t ts al vt" style="left:219px;top:1171px;width:196px;height:23px;font-size:13.5px;padding:3.2px 2px 0px 3px;"><span>Мир</span></div>
<div class="t ts al vt" style="left:219px;top:1194px;width:196px;height:30.5px;font-size:13.5px;padding:3.2px 2px 0px 3px;"><span>США</span></div>
<div class="t ts al vt" style="left:415px;top:1171px;width:71px;height:23px;font-size:13.5px;padding:3.2px 2px 0px 3px;"><span>тыс. тонн</span></div>
<div class="t ts al vt" style="left:415px;top:1194px;width:71px;height:30.5px;font-size:13.5px;padding:3.2px 2px 0px 3px;"><span>тыс. тонн</span></div>
<div class="t ts ar vt" style="left:486px;top:1171px;width:71px;height:23px;font-size:9.3px;padding:3px 2px 0px 0px;"><span>595443</span></div>
<div class="t ts ar vt" style="left:486px;top:1194px;width:71px;height:30.5px;font-size:9.3px;padding:3px 2px 0px 0px;"><span>119307</span></div>
<div class="t ts ar vt" style="left:557px;top:1171px;width:33px;height:23px;font-size:9.3px;padding:3px 2px 0px 0px;"><span>2E+06</span></div>
<div class="t ts ar vt" style="left:557px;top:1194px;width:33px;height:30.5px;font-size:9.3px;padding:3px 2px 0px 0px;"><span>81612</span></div>
<div class="t ts ar vt" style="left:590px;top:1171px;width:57px;height:23px;font-size:9.3px;padding:3px 2px 0px 0px;"><span>1825484</span></div>
<div class="t ts ar vt" style="left:590px;top:1194px;width:57px;height:30.5px;font-size:9.3px;padding:3px 2px 0px 0px;"><span>86607</span></div>
<div class="t ts ar vt" style="left:647px;top:1171px;width:62px;height:23px;font-size:9.3px;padding:3px 2px 0px 0px;"><span>1875154</span></div>
<div class="t ts ar vt" style="left:647px;top:1194px;width:62px;height:30.5px;font-size:9.3px;padding:3px 2px 0px 0px;"><span>87761</span></div>
<div class="t ts ar vt" style="left:705px;top:1171px;width:60px;height:12px;font-size:8px;padding:2px 0px 0px 0px;"><span>3,149174648</span></div>
<div class="t ts ar vt" style="left:705px;top:1194px;width:60px;height:12px;font-size:8px;padding:2px 0px 0px 0px;"><span>0,735589697</span></div>
<div style="left:76px;top:1170px;width:633px;height:55px;border:2px solid #000;"></div>
<div style="left:76px;top:1193px;width:633px;height:2px;background:#000;"></div>
<div style="left:121px;top:1171px;width:1px;height:53px;background:#000;"></div>
<div style="left:219px;top:1171px;width:1px;height:53px;background:#000;"></div>
<div style="left:415px;top:1171px;width:1px;height:53px;background:#000;"></div>
<div style="left:485px;top:1171px;width:2px;height:53px;background:#000;"></div>
<div style="left:589px;top:1171px;width:2px;height:53px;background:#000;"></div>
<div style="left:646px;top:1171px;width:2px;height:53px;background:#000;"></div>
<div style="left:998px;top:1194px;width:73px;height:136px;background:#ffd966;"></div>
<div style="left:1071px;top:1171px;width:82px;height:23px;background:#c6e0b4;"></div>
<div class="t ts ac vb" style="left:1071px;top:1171px;width:82px;height:23px;font-size:17.7px;padding:0px 2px 0px 2px;"><span>MX</span></div>
<div style="left:1071px;top:1194px;width:82px;height:30.5px;background:#c6e0b4;"></div>
<div style="left:1071px;top:1224.5px;width:82px;height:23.0px;background:#c6e0b4;"></div>
<div style="left:1071px;top:1277px;width:82px;height:23px;background:#c6e0b4;"></div>
<div class="t ts ac vb" style="left:1071px;top:1277px;width:82px;height:23px;font-size:17.7px;padding:0px 2px 0px 2px;"><span>MX</span></div>
<div style="left:1153px;top:1171px;width:81px;height:23px;background:#c6e0b4;"></div>
<div class="t ts ac vb" style="left:1153px;top:1171px;width:81px;height:23px;font-size:17.7px;padding:0px 2px 0px 2px;"><span>Min</span></div>
<div style="left:1153px;top:1194px;width:81px;height:30.5px;background:#c6e0b4;"></div>
<div style="left:1153px;top:1224.5px;width:81px;height:23.0px;background:#c6e0b4;"></div>
<div style="left:1153px;top:1277px;width:81px;height:23px;background:#c6e0b4;"></div>
<div class="t ts ac vb" style="left:1153px;top:1277px;width:81px;height:23px;font-size:17.7px;padding:0px 2px 0px 2px;"><span>Min</span></div>
<div style="left:1234px;top:1171px;width:89px;height:23px;background:#c6e0b4;"></div>
<div class="t ts ac vb" style="left:1234px;top:1171px;width:89px;height:23px;font-size:17.7px;padding:0px 2px 0px 2px;"><span>Max</span></div>
<div style="left:1234px;top:1194px;width:89px;height:30.5px;background:#c6e0b4;"></div>
<div style="left:1234px;top:1224.5px;width:89px;height:23.0px;background:#c6e0b4;"></div>
<div style="left:1234px;top:1277px;width:89px;height:23px;background:#c6e0b4;"></div>
<div class="t ts ac vb" style="left:1234px;top:1277px;width:89px;height:23px;font-size:17.7px;padding:0px 2px 0px 2px;"><span>Max</span></div>
<div style="left:1234px;top:1224.5px;width:89px;height:23.0px;background:#ff0;"></div>
<div style="left:1234px;top:1247.5px;width:89px;height:29.5px;background:#ff0;"></div>
<div style="left:1323px;top:1277px;width:94px;height:23px;background:#ff0;"></div>
<div style="left:1323px;top:1300px;width:94px;height:30px;background:#ff0;"></div>
<div class="t ts ac vb" style="left:1071px;top:1194px;width:82px;height:30.5px;font-size:22.3px;padding:0px 0px 2px 0px;"><span>10,6%</span></div>
<div class="t ts ac vb" style="left:1153px;top:1194px;width:81px;height:30.5px;font-size:22.3px;padding:0px 0px 2px 0px;"><span>4,7%</span></div>
<div class="t ts ac vb" style="left:1234px;top:1194px;width:89px;height:30.5px;font-size:22.3px;padding:0px 0px 2px 0px;"><span>20,0%</span></div>
<div class="t ts ac vb" style="left:1071px;top:1224.5px;width:82px;height:23.0px;font-size:17.7px;padding:0px 2px 0px 2px;"><span>1970</span></div>
<div class="t ts ac vb" style="left:1153px;top:1224.5px;width:81px;height:23.0px;font-size:17.7px;padding:0px 2px 0px 2px;"><span>2019</span></div>
<div class="t ts b ac vb" style="left:1234px;top:1224.5px;width:89px;height:23.0px;font-size:17.7px;color:#f00;padding:0px 2px 0px 2px;"><span>50 Лет</span></div>
<div class="t ts ar vb" style="left:1071px;top:1247.5px;width:82px;height:29.5px;font-size:21.8px;padding:0px 4px 2px 0px;"><span>101907</span></div>
<div class="t ts ar vb" style="left:1153px;top:1247.5px;width:81px;height:29.5px;font-size:21.8px;padding:0px 4px 2px 2px;"><span>70159</span></div>
<div class="t ts b ar vb" style="left:1234px;top:1247.5px;width:89px;height:29.5px;font-size:24px;color:#f00;padding:0px 3px 1px 0px;"><span>-31748</span></div>
<div class="t ts b ac vb" style="left:1323px;top:1277px;width:94px;height:23px;font-size:17.7px;color:#f00;padding:0px 2px 0px 2px;"><span>50 Лет</span></div>
<div class="t ts ar vt" style="left:1071px;top:1300px;width:82px;height:30px;font-size:21.8px;padding:4px 4px 0px 2px;"><span>86033</span></div>
<div class="t ts ar vt" style="left:1153px;top:1300px;width:81px;height:30px;font-size:21.8px;padding:4px 4px 0px 2px;"><span>44123</span></div>
<div class="t ts ar vt" style="left:1234px;top:1300px;width:89px;height:30px;font-size:21.8px;padding:4px 4px 0px 0px;"><span>136802</span></div>
<div class="t ts b ar vt" style="left:1323px;top:1300px;width:94px;height:30px;font-size:24.5px;color:#f00;padding:2px 4px 0px 2px;"><span>92679</span></div>
<div class="t ts b ar vb" style="left:998px;top:1194px;width:73px;height:30.5px;font-size:24px;color:#f00;padding:0px 3px 1px 2px;"><span>4,28</span></div>
<div class="t ts b ar vb" style="left:998px;top:1247.5px;width:73px;height:29.5px;font-size:24px;color:#f00;padding:0px 3px 1px 2px;"><span>1,45</span></div>
<div class="t ts b ar vt" style="left:998px;top:1300px;width:73px;height:30px;font-size:24px;color:#f00;padding:2px 3px 0px 2px;"><span>3,10</span></div>
<div style="left:1323px;top:1171px;width:94px;height:23px;background:#c6e0b4;"></div>
<div class="t ta ac vt" style="left:1323px;top:1171px;width:94px;height:23px;font-size:5.2px;padding:3px 0px 0px 0px;"><span>4301657</span></div>
<div style="left:1417px;top:1171px;width:48px;height:23px;background:#e2efda;"></div>
<div class="t ts ac vt" style="left:1417px;top:1171px;width:48px;height:23px;font-size:5.2px;padding:3px 0px 0px 0px;"><span>9,7%</span></div>
<div style="left:1417px;top:1171px;width:1px;height:23px;background:#000;"></div>
<div style="left:1465px;top:1171px;width:53px;height:23px;background:#fff2cc;"></div>
<div class="t ta ac vt" style="left:1465px;top:1171px;width:53px;height:23px;font-size:4.6px;padding:3px 0px 0px 0px;"><span>Эластичность =1</span></div>
<div style="left:1465px;top:1171px;width:1px;height:23px;background:#000;"></div>
<div style="left:1518px;top:1171px;width:33px;height:23px;background:#c6e0b4;"></div>
<div class="t ta ac vt" style="left:1518px;top:1171px;width:33px;height:23px;font-size:5.2px;padding:3px 0px 0px 0px;"><span>15,6%</span></div>
<div style="left:1518px;top:1171px;width:1px;height:23px;background:#000;"></div>
<div style="left:1551px;top:1171px;width:48px;height:23px;background:#c6e0b4;"></div>
<div class="t ta ac vt" style="left:1551px;top:1171px;width:48px;height:23px;font-size:5.2px;padding:3px 0px 0px 0px;"><span>166,7%</span></div>
<div style="left:1551px;top:1171px;width:1px;height:23px;background:#000;"></div>
<div style="left:1599px;top:1171px;width:33px;height:23px;background:#c6e0b4;"></div>
<div class="t ta ac vt" style="left:1599px;top:1171px;width:33px;height:23px;font-size:5.2px;padding:3px 0px 0px 0px;"><span>0,205%</span></div>
<div style="left:1599px;top:1171px;width:1px;height:23px;background:#000;"></div>
<div style="left:1632px;top:1171px;width:33px;height:23px;background:#c6e0b4;"></div>
<div class="t ta ac vt" style="left:1632px;top:1171px;width:33px;height:23px;font-size:5.2px;padding:3px 0px 0px 0px;"><span>6,522%</span></div>
<div style="left:1632px;top:1171px;width:1px;height:23px;background:#000;"></div>
<div style="left:1665px;top:1171px;width:33px;height:23px;background:#c6e0b4;"></div>
<div class="t ta ac vt" style="left:1665px;top:1171px;width:33px;height:23px;font-size:5.2px;padding:3px 0px 0px 0px;"><span>6,079%</span></div>
<div style="left:1665px;top:1171px;width:1px;height:23px;background:#000;"></div>
<div style="left:1698px;top:1171px;width:33px;height:23px;background:#c6e0b4;"></div>
<div class="t ta ac vt" style="left:1698px;top:1171px;width:33px;height:23px;font-size:5.2px;padding:3px 0px 0px 0px;"><span>15,166%</span></div>
<div style="left:1698px;top:1171px;width:1px;height:23px;background:#000;"></div>
<div style="left:1731px;top:1171px;width:33px;height:23px;background:#c6e0b4;"></div>
<div class="t ta ac vt" style="left:1731px;top:1171px;width:33px;height:23px;font-size:5.2px;padding:3px 0px 0px 0px;"><span>50</span></div>
<div style="left:1731px;top:1171px;width:1px;height:23px;background:#000;"></div>
<div style="left:1764px;top:1171px;width:33px;height:23px;background:#c6e0b4;"></div>
<div class="t ta ac vt" style="left:1764px;top:1171px;width:33px;height:23px;font-size:5.2px;padding:3px 0px 0px 0px;"><span>0,661%</span></div>
<div style="left:1764px;top:1171px;width:1px;height:23px;background:#000;"></div>
<div style="left:1797px;top:1171px;width:33px;height:23px;background:#c6e0b4;"></div>
<div class="t ta ac vt" style="left:1797px;top:1171px;width:33px;height:23px;font-size:4.6px;padding:3px 0px 0px 0px;"><span>16,5562256</span></div>
<div style="left:1797px;top:1171px;width:1px;height:23px;background:#000;"></div>
<div style="left:1830px;top:1171px;width:33px;height:23px;background:#c6e0b4;"></div>
<div class="t ta ac vt" style="left:1830px;top:1171px;width:33px;height:23px;font-size:5.2px;padding:3px 0px 0px 0px;"><span>1,282%</span></div>
<div style="left:1830px;top:1171px;width:1px;height:23px;background:#000;"></div>
<div style="left:1863px;top:1171px;width:33px;height:23px;background:#c6e0b4;"></div>
<div class="t ta ac vt" style="left:1863px;top:1171px;width:33px;height:23px;font-size:5.2px;padding:3px 0px 0px 0px;"><span>9,229%</span></div>
<div style="left:1863px;top:1171px;width:1px;height:23px;background:#000;"></div>
<div style="left:1896px;top:1171px;width:33px;height:23px;background:#c6e0b4;"></div>
<div class="t ta ac vt" style="left:1896px;top:1171px;width:33px;height:23px;font-size:5.2px;padding:3px 0px 0px 0px;"><span>11,893%</span></div>
<div style="left:1896px;top:1171px;width:1px;height:23px;background:#000;"></div>
<div style="left:1929px;top:1171px;width:33px;height:23px;background:#c6e0b4;"></div>
<div class="t ta ac vt" style="left:1929px;top:1171px;width:33px;height:23px;font-size:5.2px;padding:3px 0px 0px 0px;"><span>62,715%</span></div>
<div style="left:1929px;top:1171px;width:1px;height:23px;background:#000;"></div>
<div style="left:1962px;top:1171px;width:33px;height:23px;background:#92d050;"></div>
<div class="t ta ac vt" style="left:1962px;top:1171px;width:33px;height:23px;font-size:4.6px;padding:3px 0px 0px 0px;"><span>0,60192036</span></div>
<div style="left:1962px;top:1171px;width:1px;height:23px;background:#000;"></div>
<div style="left:1995px;top:1171px;width:33px;height:23px;background:#c6e0b4;"></div>
<div class="t ta ac vt" style="left:1995px;top:1171px;width:33px;height:23px;font-size:4.6px;padding:3px 0px 0px 0px;"><span>-0,5882987</span></div>
<div style="left:1995px;top:1171px;width:1px;height:23px;background:#000;"></div>
<div style="left:1071px;top:1171px;width:957px;height:1px;background:#000;"></div>
<div style="left:1323px;top:1194px;width:705px;height:1px;background:#000;"></div>
<div style="left:2028px;top:1171px;width:1px;height:23px;background:#000;"></div>
<div style="left:1323px;top:1194px;width:94px;height:30px;background:#d9e1f2;"></div>
<div class="t ts b al vt nc" style="left:1323px;top:1194px;width:1100px;height:30px;font-size:16.85px;padding:5px 2px 0px 4px;"><span>НАБЛЮДАЕМ УСТОЙЧИВУЮ ДЕГРАДАЦИЮ ЭКОНОМИКИ. Производство стали США % от МИРА</span></div>
<div style="left:1071px;top:1223px;width:346px;height:1.5px;background:#000;"></div>
<div style="left:1518px;top:1224px;width:510px;height:24px;background:#c6e0b4;"></div>
<div style="left:1962px;top:1224px;width:33px;height:24px;background:#92d050;"></div>
<div class="t ts b al vt nc" style="left:1323px;top:1247px;width:1200px;height:30px;font-size:16.85px;padding:4px 2px 0px 4px;"><span>НАБЛЮДАЕМ ПОВЫШЕННЫЕ РИСКИ, НЕЭФФЕКТИВНОСТЬ В НАТУРАЛЬНОМ ВЫРАЖЕНИИ, ТЫС.ТОНН</span></div>
<div style="left:1323px;top:1277px;width:142px;height:1px;background:#000;"></div>
<div style="left:1417px;top:1300px;width:101px;height:1px;background:#000;"></div>
<div style="left:1465px;top:1277px;width:1px;height:23px;background:#000;"></div>
<div style="left:1518px;top:1277px;width:1px;height:23px;background:#000;"></div>
<div class="t ts b al vt nc" style="left:1417px;top:1300px;width:1200px;height:30px;font-size:21px;padding:5px 2px 0px 4px;"><span><i class="u">МОДЕЛЬ</i> <i class="r">ЭФФЕКТИВНОСТЬ/</i><i class="u">РИСКИ</i> <i style="font-weight:normal">В</i> <i class="u">НАТУРАЛЬНОМ</i> <i style="font-weight:normal">ВЫРАЖЕНИИ,</i> <i class="u">ТЫС.ТОНН</i></span></div>
<div style="left:1071px;top:1171px;width:1px;height:159px;background:#000;"></div>
<div style="left:1153px;top:1171px;width:1px;height:159px;background:#000;"></div>
<div style="left:1234px;top:1171px;width:1px;height:159px;background:#000;"></div>
<div style="left:998px;top:1194px;width:1px;height:136px;background:#000;"></div>
<div style="left:1323px;top:1171px;width:1px;height:159px;background:#000;"></div>
<div style="left:1417px;top:1277px;width:1px;height:53px;background:#000;"></div>
<div style="left:1070px;top:1171px;width:2px;height:53px;background:#000;"></div>
<div style="left:998px;top:1194px;width:325px;height:1px;background:#000;"></div>
<div style="left:998px;top:1224px;width:325px;height:1px;background:#000;"></div>
<div style="left:998px;top:1247px;width:325px;height:1px;background:#000;"></div>
<div style="left:998px;top:1277px;width:419px;height:1px;background:#000;"></div>
<div style="left:998px;top:1300px;width:419px;height:1px;background:#000;"></div>
<div style="left:998px;top:1194px;width:73px;height:1.5px;background:#000;"></div>
<div style="left:557px;top:131px;width:1px;height:1186px;background:#9b9b9b;"></div>
<div style="left:15px;top:295px;width:2514px;height:1px;background:#a6a6a6;"></div>
<div style="left:219px;top:139.8px;width:196px;height:2.2px;background:#217346;"></div>
<div style="left:2529px;top:131px;width:31px;height:1186px;background:#f0f0f0;"></div>
<div style="left:2529px;top:131px;width:1px;height:1186px;background:#c6c6c6;"></div>
<div style="left:2532.5px;top:132.5px;width:24px;height:23.5px;background:#fff;border:1px solid #d0d0d0;"></div>
<svg style="left:2539px;top:139px" width="12" height="8"><path d="M0 7h11L5.500 1z" fill="#777"/></svg>
<div style="left:2532.5px;top:803px;width:24px;height:453px;background:#fff;border:1px solid #c0c0c0;"></div>
<div style="left:2532.5px;top:1293.5px;width:24px;height:23.5px;background:#fff;border:1px solid #d0d0d0;"></div>
<svg style="left:2539px;top:1302px" width="12" height="8"><path d="M0 0h11L5.500 6z" fill="#777"/></svg>
<svg style="left:8px;top:2px" width="28" height="26" viewBox="0 0 28 26"><path d="M2 4 L16 1 L16 25 L2 22Z" fill="#217346"/><rect x="15" y="5" width="11" height="16" fill="#fff" stroke="#217346" stroke-width="1.4"/><path d="M15 9h11M15 13h11M15 17h11M20.5 5v16" stroke="#217346" stroke-width="1.3"/><path d="M5.5 8.5l6 9M11.5 8.5l-6 9" stroke="#fff" stroke-width="2.2"/></svg>
<svg style="left:48px;top:4px" width="22" height="22" viewBox="0 0 22 22"><path d="M1 1h19v19H1z" fill="#9159b6"/><rect x="3.500" y="3" width="14" height="9.500" fill="#fff"/><rect x="6" y="14.500" width="8.500" height="5.500" fill="#fff"/><rect x="8" y="15.500" width="2.500" height="4.500" fill="#9159b6"/></svg>
<svg style="left:84px;top:5px" width="24" height="22" viewBox="0 0 24 22"><path d="M3 7 h10 a7 7 0 0 1 0 13 h-1" fill="none" stroke="#3e75b5" stroke-width="3"/><path d="M1 7 l7 -6 v12z" fill="#3e75b5"/></svg>
<svg style="left:112px;top:12px" width="9" height="6" viewBox="0 0 9 6"><path d="M0 0h8l-4 5z" fill="#666"/></svg>
<svg style="left:134px;top:5px" width="24" height="22" viewBox="0 0 24 22"><path d="M20 7 h-10 a7 7 0 0 0 0 13 h1" fill="none" stroke="#b5b5b5" stroke-width="3"/><path d="M22 7 l-7 -6 v12z" fill="#b5b5b5"/></svg>
<svg style="left:163px;top:12px" width="9" height="6" viewBox="0 0 9 6"><path d="M0 0h8l-4 5z" fill="#c8c8c8"/></svg>
<svg style="left:187px;top:8px" width="18" height="14" viewBox="0 0 18 14"><path d="M16 6.5H5" stroke="#b5b5b5" stroke-width="2.6"/><path d="M8 1 L2 6.5 L8 12" fill="none" stroke="#b5b5b5" stroke-width="2.6"/></svg>
<div class="t ta ac vb" style="left:220px;top:1px;width:26px;height:23px;font-size:23px;color:#444;"><span>A</span></div>
<div style="left:221px;top:21px;width:24px;height:6px;background:#3e78b8;"></div>
<svg style="left:259px;top:3px" width="22" height="24" viewBox="0 0 22 24"><rect x="0" y="1.0" width="20" height="1.1" fill="#555"/><rect x="3" y="4.5" width="14" height="1.1" fill="#555"/><rect x="0" y="8.0" width="20" height="1.1" fill="#555"/><rect x="3" y="11.5" width="14" height="1.1" fill="#555"/><rect x="0" y="15.0" width="20" height="1.1" fill="#555"/><rect x="3" y="18.5" width="14" height="1.1" fill="#555"/><rect x="0" y="22.0" width="20" height="1.1" fill="#555"/></svg>
<div class="t ta ac vm" style="left:295px;top:1px;width:26px;height:26px;font-size:27px;color:#444;"><span>%</span></div>
<svg style="left:0;top:0" width="1200" height="32"><text x="340.5" y="22" text-anchor="middle" font-size="24.5" font-weight="bold" fill="#3e75b5" font-family="Liberation Sans">A</text><path d="M356 9.500L349.500 18.500" stroke="#666" stroke-width="3"/><path d="M349.500 18.500q-6-1-10.500 6.500q9 1.500 10.500-6.500z" fill="#3e75b5" stroke="#fff" stroke-width=".8"/><path d="M374.400 3.500h6.200v4.600M374.400 26.500h6.200v-5.200" fill="none" stroke="#777" stroke-width="1.100"/><rect x="383.750" y="12.100" width="7.250" height="5.400" fill="#bdd0e9" stroke="#8aa6c8" stroke-width=".6"/><path d="M382 15h-9" stroke="#3e75b5" stroke-width="2.200"/><path d="M377 10.500l-5.300 4.500 5.300 4.500" fill="none" stroke="#3e75b5" stroke-width="2.200"/><path d="M406.250 8.500v5.900h5M429.750 8.500v5.900h-5.350M411.250 8.500v5.900M424.400 8.500v5.900" fill="none" stroke="#777" stroke-width="1.100"/><rect x="415.250" y="17.500" width="5.350" height="7.100" fill="#bdd0e9" stroke="#8aa6c8" stroke-width=".6"/><path d="M418.100 15.600v-9" stroke="#3e75b5" stroke-width="2.200"/><path d="M413.700 10.500l4.400-5 4.400 5" fill="none" stroke="#3e75b5" stroke-width="2.200"/><rect x="444.400" y="4.400" width="11.850" height="3.700" fill="none" stroke="#777" stroke-width="1"/><path d="M450.300 4.400v3.700" stroke="#777"/><rect x="453.500" y="11.500" width="12.100" height="4.100" fill="#bdd0e9" stroke="#777" stroke-width=".8"/><path d="M459.500 11.500v4.100" stroke="#777" stroke-width=".8"/><path d="M452.500 13.100h-6.500" stroke="#3e75b5" stroke-width="2"/><path d="M449 9.800l-3.800 3.300 3.800 3.300" fill="none" stroke="#3e75b5" stroke-width="2"/><rect x="444.400" y="17.500" width="12.100" height="8.100" fill="none" stroke="#777" stroke-width="1"/><path d="M444.400 21.500h12.100M450.400 17.500v8.100" stroke="#777"/><path d="M484.750 4.400v6.850h3.250M499.600 4.400v6.850h-3.350" fill="none" stroke="#777" stroke-width="1.100"/><path d="M490 4.400h4.600v9.500l-2.300 2.400-2.300-2.400z" fill="#bdd0e9" stroke="#8aa6c8" stroke-width=".5"/><path d="M486.500 17.200l10.800 8.800M497.300 17.200l-10.800 8.800" stroke="#d4472a" stroke-width="2.100"/><path d="M517.250 7.500h7.350v3.500M517.250 22.500h7.350v-3.700" fill="none" stroke="#777" stroke-width="1.100"/><path d="M517.250 12.100h9.500l3.200 2.700-3.200 2.700h-9.500z" fill="#bdd0e9"/><path d="M529 10.800l10.500 9M539.500 10.800l-10.500 9" stroke="#d4472a" stroke-width="2.100"/><rect x="555.250" y="4.750" width="12.250" height="3.750" fill="none" stroke="#777" stroke-width="1"/><path d="M561.300 4.750v3.750" stroke="#777"/><path d="M560.600 10.250h4.500l2 2.250-2 2.250h-4.500z" fill="#bdd0e9" stroke="#777" stroke-width=".7"/><path d="M566.500 8.300l10.700 10.200M577.200 8.300l-10.700 10.200" stroke="#d4472a" stroke-width="2"/><rect x="555.250" y="17.500" width="12.250" height="8.100" fill="none" stroke="#777" stroke-width="1"/><path d="M555.250 21.500h12.250M561.300 17.500v8.100" stroke="#777"/><text x="598.6999999999999" y="13.300" text-anchor="middle" font-size="12.300" font-weight="bold" fill="#3e75b5" font-family="Liberation Sans">А</text><text x="598.6999999999999" y="24.200" text-anchor="middle" font-size="12.300" font-weight="bold" fill="#9159b6" font-family="Liberation Sans">Я</text><path d="M609.4 5v20.300M605.9 21.500l3.500 4 3.500-4" fill="none" stroke="#666" stroke-width="1.300"/><text x="635.9" y="13.300" text-anchor="middle" font-size="12.300" font-weight="bold" fill="#9159b6" font-family="Liberation Sans">Я</text><text x="635.9" y="24.200" text-anchor="middle" font-size="12.300" font-weight="bold" fill="#3e75b5" font-family="Liberation Sans">А</text><path d="M646.6 5v20.300M643.1 21.500l3.500 4 3.500-4" fill="none" stroke="#666" stroke-width="1.300"/><path d="M666 24.500v-9l2.500-6v-4h5v4l1.500 3.500h3.500l1.500-3.500v-4h5v4l2.500 6v9h-8.500v-7h-4.500v7z" fill="#606060"/><path d="M667 18h6.500v5.500H667zM680.500 18h6.500v5.500h-6.500z" fill="none" stroke="#fff" stroke-width=".5" opacity=".5"/><path d="M693 12.500h7.500l-3.750 4.500z" fill="#444"/><text x="726.500" y="23.700" text-anchor="middle" font-size="28" fill="#444" font-family="Liberation Serif" textLength="17.500" lengthAdjust="spacingAndGlyphs">Σ</text><path d="M744 12.500h7.500l-3.750 4.500z" fill="#888"/><text x="776.500" y="23.500" text-anchor="middle" font-size="30" fill="#b4b4b4" font-family="Liberation Serif" textLength="18" lengthAdjust="spacingAndGlyphs">π</text><text x="813.900" y="23.700" text-anchor="middle" font-size="27" fill="#3e75b5" font-family="Liberation Serif" font-weight="bold" textLength="19.700" lengthAdjust="spacingAndGlyphs">Ω</text></svg>
<svg style="left:839px;top:3px" width="26" height="25" viewBox="0 0 26 25"><circle cx="10" cy="10" r="8.500" fill="none" stroke="#777" stroke-width="1.300"/><ellipse cx="10" cy="10" rx="4" ry="8.500" fill="none" stroke="#777"/><path d="M1.500 10h17M3 5.500h14M3 14.500h14" stroke="#777"/><rect x="5" y="15.500" width="10.500" height="7" rx="3.500" fill="#fff" stroke="#3e75b5" stroke-width="2.400"/><rect x="11.500" y="17.500" width="10.500" height="7" rx="3.500" fill="none" stroke="#3e75b5" stroke-width="2.400"/></svg>
<svg style="left:877px;top:3px" width="26" height="25" viewBox="0 0 26 25"><rect x="1" y="10" width="5.500" height="12" fill="#3e75b5"/><rect x="8" y="1" width="5.500" height="21" fill="#e8b96a"/><rect x="15" y="5" width="6" height="2.200" fill="#777"/><text x="17" y="24.500" text-anchor="middle" font-family="Liberation Sans" font-weight="bold" font-size="19" fill="#3e75b5" stroke="#fff" stroke-width=".6" paint-order="stroke">?</text></svg>
<svg style="left:913px;top:3px" width="30" height="25" viewBox="0 0 30 25"><rect x="1" y="10" width="5.500" height="12" fill="#3e75b5"/><rect x="8" y="1" width="5.500" height="21" fill="#e8b96a"/><rect x="14.500" y="5" width="6" height="6" fill="#777"/><rect x="11.500" y="11.500" width="12.500" height="12" fill="#fff" stroke="#777" stroke-width="1.200"/><path d="M13.500 14h8" stroke="#aaa" stroke-width="1.500"/><path d="M13.500 17.500h2M13.500 20.500h2" stroke="#aaa"/><path d="M17 20h4.500v-3.500M18.500 18.500l-1.500 1.500 1.500 1.500M20 18l1.500-1.500 1.500 1.500" stroke="#3e75b5" fill="none" stroke-width="1.100"/></svg>
<svg style="left:941px;top:12px" width="9" height="6" viewBox="0 0 9 6"><path d="M0 0.500h7.500l-3.750 4.500z" fill="#888"/></svg>
<svg style="left:955px;top:3px" width="26" height="24" viewBox="0 0 26 24"><path d="M3 22L9 3l6 19 5-14 4 14" fill="none" stroke="#3e75b5" stroke-width="1.500"/><path d="M2 10L9 22l6-19 5 19 4-14" fill="none" stroke="#666" stroke-width="1.200"/><circle cx="3" cy="22" r="1.800" fill="#666"/><circle cx="9" cy="3" r="1.800" fill="#666"/><circle cx="15" cy="22" r="1.800" fill="#3e75b5"/><circle cx="20" cy="8" r="1.800" fill="#666"/><circle cx="24" cy="22" r="1.800" fill="#3e75b5"/></svg>
<svg style="left:983px;top:12px" width="9" height="6" viewBox="0 0 9 6"><path d="M0 0.500h7.500l-3.750 4.500z" fill="#555"/></svg>
<svg style="left:1000px;top:3px" width="24" height="24" viewBox="0 0 24 24"><rect x="1" y="10" width="6" height="12" fill="#3e75b5"/><rect x="8" y="1" width="6" height="21" fill="#e8b96a"/><rect x="15" y="6" width="6" height="16" fill="#666"/></svg>
<svg style="left:1026px;top:12px" width="9" height="6" viewBox="0 0 9 6"><path d="M0 0.500h7.500l-3.750 4.500z" fill="#555"/></svg>
<svg style="left:1042px;top:3px" width="26" height="24" viewBox="0 0 26 24"><path d="M1 22V15L9 2l7 12 4-7 4 9v6z" fill="#3e75b5"/><path d="M4 12L9 2l5 9z" fill="#e8b96a"/><path d="M17 12l3-5 4 9v6z" fill="#666"/></svg>
<svg style="left:1069px;top:12px" width="9" height="6" viewBox="0 0 9 6"><path d="M0 0.500h7.500l-3.750 4.500z" fill="#555"/></svg>
<svg style="left:1085px;top:3px" width="26" height="24" viewBox="0 0 26 24"><path d="M1 1v21h23" fill="none" stroke="#777" stroke-width="1.200"/><rect x="5" y="4" width="3" height="3" fill="#e8b96a"/><rect x="15" y="2" width="3" height="3" fill="#3e75b5"/><rect x="10" y="9" width="3" height="3" fill="#3e75b5"/><rect x="20" y="8" width="3" height="3" fill="#3e75b5"/><rect x="5" y="14" width="3" height="3" fill="#3e75b5"/><rect x="14" y="13" width="3" height="3" fill="#e8b96a"/><rect x="19" y="16" width="3" height="3" fill="#e8b96a"/></svg>
<svg style="left:1113px;top:12px" width="9" height="6" viewBox="0 0 9 6"><path d="M0 0.500h7.500l-3.750 4.500z" fill="#555"/></svg>
<svg style="left:1135px;top:11px" width="9" height="9" viewBox="0 0 9 9"><path d="M0 0.500h8" stroke="#666" stroke-width="1.200"/><path d="M0 3h8l-4 4.500z" fill="#666"/></svg>
<div class="t ta ac vm nc" style="left:1478px;top:1px;width:562px;height:32px;font-size:17.2px;color:#444;padding:0px 2px 0px 2px;"><span>GDP+VA V1-Red01-SVL-Чел+WS.xlsm - Excel</span></div>
<div class="t ta b ac vm nc" style="left:2382px;top:0.5px;width:20px;height:30px;font-size:22px;color:#777;"><span>?</span></div>
<svg style="left:2419px;top:6px" width="22" height="18" viewBox="0 0 22 18"><rect x="1.600" y="1.600" width="19" height="15" fill="none" stroke="#777" stroke-width="1.200"/><path d="M1.600 4.600h19" stroke="#777" stroke-width="1.200"/><path d="M11 16V8" stroke="#777" stroke-width="2"/><path d="M7.500 11.500Q8 8.500 11 8q3 .5 3.500 3.500" fill="none" stroke="#777" stroke-width="2"/><path d="M11 6l-3.500 4h7z" fill="#777"/></svg>
<div style="left:2458px;top:19px;width:18px;height:3px;background:#777;"></div>
<svg style="left:2494px;top:5px" width="20" height="20" viewBox="0 0 20 20"><rect x="5.600" y="1.600" width="13" height="11" fill="none" stroke="#777" stroke-width="1.200"/><rect x="5" y="1" width="14.200" height="3.200" fill="#777"/><rect x="1.600" y="7.600" width="13" height="11" fill="#fff" stroke="#777" stroke-width="1.200"/><rect x="1" y="7" width="14.200" height="3.200" fill="#777"/></svg>
<svg style="left:2532px;top:7px" width="18" height="18" viewBox="0 0 18 18"><path d="M2 2.500l13.500 13.500M15.500 2.500L2 16" stroke="#777" stroke-width="3.400"/></svg>
<div style="left:0px;top:33px;width:88px;height:35px;background:#217346;"></div>
<div class="t ta ac vm" style="left:0px;top:34px;width:88px;height:35px;font-size:17.8px;color:#fff;"><span>ФАЙЛ</span></div>
<div class="t ta ac vm nc" style="left:97px;top:34px;width:97px;height:35px;font-size:16.79px;color:#444;"><span>ГЛАВНАЯ</span></div>
<div class="t ta ac vm nc" style="left:204px;top:34px;width:93px;height:35px;font-size:16.28px;color:#444;"><span>ВСТАВКА</span></div>
<div class="t ta ac vm nc" style="left:307px;top:34px;width:207px;height:35px;font-size:16.8px;color:#444;"><span>РАЗМЕТКА СТРАНИЦЫ</span></div>
<div class="t ta ac vm nc" style="left:523px;top:34px;width:109px;height:35px;font-size:17.21px;color:#444;"><span>ФОРМУЛЫ</span></div>
<div class="t ta ac vm nc" style="left:642px;top:34px;width:93px;height:35px;font-size:16.82px;color:#444;"><span>ДАННЫЕ</span></div>
<div class="t ta ac vm nc" style="left:744px;top:34px;width:178px;height:35px;font-size:16.43px;color:#444;"><span>РЕЦЕНЗИРОВАНИЕ</span></div>
<div class="t ta ac vm nc" style="left:931px;top:34px;width:55px;height:35px;font-size:16.97px;color:#444;"><span>ВИД</span></div>
<div class="t ta ac vm nc" style="left:995px;top:34px;width:142px;height:35px;font-size:17.11px;color:#444;"><span>РАЗРАБОТЧИК</span></div>
<div class="t ta ac vm nc" style="left:2472px;top:34px;width:50px;height:35px;font-size:16.5px;color:#444;"><span>Вход</span></div>
<div style="left:2524px;top:33px;width:36px;height:36px;background:#ababab;"></div>
<svg style="left:2524px;top:33px" width="36" height="36" viewBox="0 0 36 36"><ellipse cx="17.500" cy="13" rx="7" ry="8.300" fill="#fff"/><path d="M4 36q0-10 4-12t6-3.500q3.500 2 7 0 2 1.500 6 3.500t4 12z" fill="#fff"/></svg>
<div style="left:5px;top:86px;width:154px;height:34.5px;background:#fff;border:1px solid #c6c6c6;"></div>
<div class="t ta al vm" style="left:13px;top:88px;width:80px;height:34px;font-size:17.5px;color:#333;padding:0px 2px 0px 0px;"><span>E4</span></div>
<svg style="left:140.5px;top:101px" width="8" height="5" viewBox="0 0 8 5"><path d="M0 0h7l-3.500 4z" fill="#777"/></svg>
<div style="left:180px;top:98px;width:2px;height:2px;background:#999;"></div>
<div style="left:180px;top:103px;width:2px;height:2px;background:#999;"></div>
<div style="left:180px;top:108px;width:2px;height:2px;background:#999;"></div>
<div style="left:204px;top:86px;width:164px;height:34.5px;background:#fff;border:1px solid #c6c6c6;"></div>
<svg style="left:222px;top:96px" width="18" height="16" viewBox="0 0 18 16"><path d="M2 1l14 14M16 1L2 15" stroke="#bbb" stroke-width="2.200"/></svg>
<svg style="left:276px;top:96px" width="20" height="16" viewBox="0 0 20 16"><path d="M2 8l5 6L18 1" fill="none" stroke="#bbb" stroke-width="3"/></svg>
<div class="t ts b ac vm nc" style="left:326px;top:87px;width:30px;height:34px;font-size:23px;color:#808080;"><span><i style="font-style:italic">f</i><i style="font-style:italic;font-size:17px">x</i></span></div>
<div style="left:372px;top:86px;width:2200px;height:34.5px;background:#fff;border:1px solid #c6c6c6;"></div>
<div class="t ta al vm" style="left:386px;top:88px;width:300px;height:34px;font-size:19.5px;color:#333;padding:0px 2px 0px 0px;"><span>КИТАЙ</span></div>
<svg style="left:2535px;top:100px" width="12" height="8" viewBox="0 0 12 8"><path d="M1 1l5 5 5-5" fill="none" stroke="#444" stroke-width="2.200"/></svg>
<div style="left:0px;top:1317px;width:2560px;height:33px;background:#f3f3f3;"></div>
<div style="left:0px;top:1317px;width:2529px;height:1px;background:#ababab;"></div>
<svg style="left:28px;top:1326px" width="10" height="14"><path d="M9 1v12L1 7z" fill="#c8c8c8"/></svg>
<svg style="left:63px;top:1326px" width="10" height="14"><path d="M1 1v12l8-6z" fill="#217346"/></svg>
<div style="left:118px;top:1320px;width:1px;height:27px;background:#c6c6c6;"></div>
<div style="left:121px;top:1320px;width:73px;height:27.5px;background:#c00000;"></div>
<div class="t ta ac vm nc" style="left:112.80000000000001px;top:1318px;width:87.79999999999998px;height:30px;font-size:17.21px;color:#fff;"><span>NOTE</span></div>
<div style="left:196px;top:1321px;width:1px;height:26px;background:#c6c6c6;"></div>
<div style="left:199px;top:1320px;width:99px;height:27.5px;background:#c00000;"></div>
<div class="t ta ac vm nc" style="left:189.4px;top:1318px;width:114.99999999999997px;height:30px;font-size:19.0px;color:#fff;"><span>ISO3166</span></div>
<div style="left:300px;top:1321px;width:1px;height:26px;background:#c6c6c6;"></div>
<div style="left:303px;top:1320px;width:59px;height:27.5px;background:#8ea9db;"></div>
<div class="t ta ac vm nc" style="left:294px;top:1318px;width:74.39999999999998px;height:30px;font-size:18.76px;color:#000;"><span>Test</span></div>
<div style="left:364px;top:1321px;width:1px;height:26px;background:#c6c6c6;"></div>
<div class="t ta ac vm nc" style="left:359px;top:1318px;width:97.89999999999998px;height:30px;font-size:18.28px;color:#444;"><span>TestSX</span></div>
<div style="left:452px;top:1321px;width:1px;height:26px;background:#c6c6c6;"></div>
<div style="left:455px;top:1320px;width:80px;height:27.5px;background:#f00;"></div>
<div class="t ta ac vm nc" style="left:447.2px;top:1318px;width:94.09999999999997px;height:30px;font-size:17.98px;color:#fff;"><span>ГУЛАГ</span></div>
<div style="left:537px;top:1321px;width:1px;height:26px;background:#c6c6c6;"></div>
<div style="left:540px;top:1320px;width:86px;height:27.5px;background:#0070c0;"></div>
<div class="t ta ac vm nc" style="left:531.6px;top:1318px;width:100.89999999999998px;height:30px;font-size:18.89px;color:#fff;"><span>WSteel</span></div>
<div style="left:628px;top:1321px;width:1px;height:26px;background:#c6c6c6;"></div>
<div style="left:696px;top:1320px;width:68px;height:27.5px;background:#ffc000;"></div>
<div class="t ta ac vm nc" style="left:687.2px;top:1318px;width:83.79999999999995px;height:30px;font-size:19.7px;color:#000;"><span>anl1r</span></div>
<div style="left:766px;top:1321px;width:1px;height:26px;background:#c6c6c6;"></div>
<div style="left:769px;top:1320px;width:55px;height:27.5px;background:#00b050;"></div>
<div class="t ta ac vm nc" style="left:758.1px;top:1318px;width:73.5px;height:30px;font-size:20.08px;color:#000;"><span>bd1</span></div>
<div style="left:826px;top:1321px;width:1px;height:26px;background:#c6c6c6;"></div>
<div style="left:829px;top:1320px;width:63px;height:27.5px;background:#bf8f00;"></div>
<div class="t ta ac vm nc" style="left:819.7px;top:1318px;width:81.19999999999993px;height:30px;font-size:20.59px;color:#000;"><span>bd1r</span></div>
<div style="left:894px;top:1321px;width:1px;height:26px;background:#c6c6c6;"></div>
<div style="left:897px;top:1320px;width:128px;height:27.5px;background:#305496;"></div>
<div class="t ta ac vm nc" style="left:889px;top:1318px;width:143.5px;height:30px;font-size:18.62px;color:#fff;"><span>bd3-GDPPC</span></div>
<div style="left:1027px;top:1321px;width:1px;height:26px;background:#c6c6c6;"></div>
<div style="left:1030px;top:1320px;width:112px;height:27.5px;background:#00b050;"></div>
<div class="t ta ac vm nc" style="left:1020.3px;top:1318px;width:129.10000000000014px;height:30px;font-size:20.03px;color:#000;"><span>bd2-XPop</span></div>
<div style="left:1144px;top:1321px;width:1px;height:26px;background:#c6c6c6;"></div>
<div style="left:1147px;top:1320px;width:121.5px;height:27.5px;background:#00b0f0;"></div>
<div class="t ta ac vm nc" style="left:1139.4px;top:1318px;width:135.89999999999986px;height:30px;font-size:20.78px;color:#000;"><span>population</span></div>
<div style="left:1270.5px;top:1321px;width:1px;height:26px;background:#c6c6c6;"></div>
<div style="left:1273.5px;top:1320px;width:61.5px;height:27.5px;background:#f8cbad;"></div>
<div class="t ta ac vm nc" style="left:1264.4px;top:1318px;width:77.19999999999982px;height:30px;font-size:19.68px;color:#000;"><span>ind1</span></div>
<div style="left:1337px;top:1321px;width:1px;height:26px;background:#c6c6c6;"></div>
<div style="left:1340px;top:1320px;width:44px;height:27.5px;background:#f00;"></div>
<div class="t ta ac vm nc" style="left:1330px;top:1318px;width:61.90000000000009px;height:30px;font-size:17.13px;color:#fff;"><span>R2</span></div>
<div style="left:1386px;top:1321px;width:1px;height:26px;background:#c6c6c6;"></div>
<div style="left:1389px;top:1320px;width:82px;height:27.5px;background:#f00;"></div>
<div class="t ta ac vm nc" style="left:1379px;top:1318px;width:99.40000000000009px;height:30px;font-size:19.97px;color:#fff;"><span>R2+b0</span></div>
<div style="left:1473px;top:1321px;width:1px;height:26px;background:#c6c6c6;"></div>
<div class="t ta ac vm nc" style="left:1472.2px;top:1318px;width:260.29999999999995px;height:30px;font-size:19.43px;color:#444;"><span>GDPcurrent-USD-regions</span></div>
<div style="left:1733px;top:1321px;width:1px;height:26px;background:#c6c6c6;"></div>
<div class="t ta ac vm nc" style="left:1729.4px;top:1318px;width:220.89999999999986px;height:30px;font-size:18.82px;color:#444;"><span>GDPPC-USD-regions</span></div>
<div style="left:1948px;top:1321px;width:1px;height:26px;background:#c6c6c6;"></div>
<div class="t ta ac vm nc" style="left:1946.6px;top:1318px;width:214.70000000000027px;height:30px;font-size:19.29px;color:#444;"><span>GDPcurrent-USD-all</span></div>
<div style="left:2161.5px;top:1321px;width:1px;height:26px;background:#c6c6c6;"></div>
<div class="t ta ac vm nc" style="left:2159.1px;top:1318px;width:158.4000000000001px;height:30px;font-size:18.21px;color:#444;"><span>GDPPCconsta</span></div>
<div style="left:2602px;top:1321px;width:1px;height:26px;background:#c6c6c6;"></div>
<div style="left:628.5px;top:1317px;width:65px;height:31px;background:#fff;"></div>
<div style="left:631px;top:1320px;width:60px;height:24.7px;background:linear-gradient(#fff,#fff 15%,#fde9b8);"></div>
<div style="left:628px;top:1346px;width:66px;height:2px;background:#217346;"></div>
<div style="left:628px;top:1317px;width:1px;height:29px;background:#ababab;"></div>
<div style="left:693px;top:1317px;width:1px;height:29px;background:#ababab;"></div>
<div class="t ta b ac vm nc" style="left:620px;top:1318px;width:82px;height:30px;font-size:19.84px;color:#217346;"><span>anl1</span></div>
<div class="t ta b ac vm nc" style="left:2302px;top:1318px;width:24px;height:28px;font-size:22px;color:#217346;"><span>...</span></div>
<svg style="left:2335px;top:1322px" width="24" height="24"><circle cx="11.700" cy="11.300" r="10.300" fill="none" stroke="#666" stroke-width="1.400"/><path d="M6 11.300h11.400M11.700 5.600v11.400" stroke="#666" stroke-width="1.400"/></svg>
<div style="left:2381px;top:1327px;width:2px;height:2px;background:#999;"></div>
<div style="left:2381px;top:1332px;width:2px;height:2px;background:#999;"></div>
<div style="left:2381px;top:1337px;width:2px;height:2px;background:#999;"></div>
<div style="left:2400.5px;top:1321.5px;width:128px;height:24px;background:#e8e8e8;"></div>
<div style="left:2400.5px;top:1321.5px;width:24px;height:24px;background:#fff;border:1px solid #d0d0d0;"></div>
<svg style="left:2408px;top:1327px" width="9" height="13"><path d="M8 1v11L1 6.500z" fill="#555"/></svg>
<div style="left:2457.3px;top:1321.5px;width:31.2px;height:24px;background:#fff;border:1px solid #c0c0c0;"></div>
<div style="left:2504.2px;top:1321.5px;width:24px;height:24px;background:#fff;border:1px solid #d0d0d0;"></div>
<svg style="left:2513px;top:1327px" width="9" height="13"><path d="M1 1v11l7-5.500z" fill="#555"/></svg>
<div style="left:0px;top:1350.5px;width:2560px;height:34px;background:#217346;"></div>
<div class="t ta al vm nc" style="left:7px;top:1350px;width:80px;height:34px;font-size:15.004665629860032px;color:#fff;padding:0px 2px 0px 0px;"><span>ГОТОВО</span></div>
<svg style="left:89px;top:1357px" width="22" height="20"><circle cx="5" cy="4.500" r="4" fill="#fff"/><rect x="3" y="5" width="16" height="13" fill="none" stroke="#fff" stroke-width="1.500"/><path d="M3 9h16M6 12h10M6 15h10" stroke="#fff" stroke-width="1.200" stroke-dasharray="2 1"/></svg>
<div style="left:2224.8px;top:1350.5px;width:45px;height:33.5px;background:#0e6a3b;"></div>
<svg style="left:2238px;top:1358.5px" width="19" height="18"><rect x="0.700" y="0.700" width="17.600" height="16.600" fill="none" stroke="#fff" stroke-width="1.400"/><path d="M0 6.300h19M0 11.900h19M6.500 0v18M12.500 0v18" stroke="#fff" stroke-width="1.300"/></svg>
<svg style="left:2283px;top:1358.5px" width="19" height="18"><rect x="0.700" y="0.700" width="17.600" height="16.600" fill="none" stroke="#fff" stroke-width="1.400"/><rect x="4.500" y="4" width="10" height="10.500" fill="none" stroke="#fff" stroke-width="1.200"/><path d="M7 7.500h5M7 10.500h5" stroke="#fff"/></svg>
<svg style="left:2328px;top:1358.5px" width="19" height="18"><rect x="0.700" y="0.700" width="17.600" height="16.600" fill="none" stroke="#fff" stroke-width="1.400"/><rect x="1" y="1" width="6" height="9" fill="#fff" opacity=".9"/><rect x="12" y="1" width="6" height="9" fill="#fff" opacity=".9"/></svg>
<div style="left:2366px;top:1365.8px;width:11px;height:2.4px;background:#fff;"></div>
<div style="left:2382px;top:1366.5px;width:150px;height:1.2px;background:#fff;"></div>
<div style="left:2457px;top:1363px;width:1.2px;height:8px;background:#fff;"></div>
<div style="left:2403px;top:1359px;width:6px;height:16px;background:#fff;"></div>
<div style="left:2538px;top:1365.8px;width:12.5px;height:2.4px;background:#fff;"></div>
<div style="left:2543px;top:1361px;width:2.4px;height:12.5px;background:#fff;"></div>
<div style="left:0px;top:1384px;width:2560px;height:56px;background:linear-gradient(90deg,#1b2a3d 0px,#22344a 200px,#2a3d52 350px,#2c4460 500px,#33557a 650px,#2f5278 800px,#2a4d73 1000px,#24456a 1150px,#203c5e 1300px,#223a58 1450px,#263f5c 1600px,#2a4a66 1750px,#1d3c5a 1900px,#17324f 2050px,#1f3352 2250px,#3c4068 2400px,#55507c 2480px,#4a4870 2560px);"></div>
<div style="left:0px;top:1384px;width:2560px;height:56px;background:linear-gradient(180deg,rgba(255,255,255,.28) 0,rgba(255,255,255,.08) 3px,rgba(255,255,255,0) 10px,rgba(0,0,0,0) 60%,rgba(0,0,0,.18) 100%);"></div>
<div style="left:0px;top:1384px;width:2560px;height:1.5px;background:#16301f;"></div>
<div style="left:260.3px;top:1386px;width:73.19999999999999px;height:53px;background:linear-gradient(180deg,rgba(255,255,255,.42),rgba(255,255,255,.24) 45%,rgba(255,255,255,.12) 55%,rgba(255,255,255,.24));border:1px solid rgba(255,255,255,.45);border-radius:3px;box-shadow:0 0 0 1px rgba(0,0,0,.35);"></div>
<div style="left:572px;top:1386px;width:73px;height:53px;background:linear-gradient(180deg,rgba(255,255,255,.42),rgba(255,255,255,.24) 45%,rgba(255,255,255,.12) 55%,rgba(255,255,255,.24));border:1px solid rgba(255,255,255,.45);border-radius:3px;box-shadow:0 0 0 1px rgba(0,0,0,.35);"></div>
<div style="left:884.4px;top:1386px;width:73.39999999999998px;height:53px;background:linear-gradient(180deg,rgba(255,255,255,.42),rgba(255,255,255,.24) 45%,rgba(255,255,255,.12) 55%,rgba(255,255,255,.24));border:1px solid rgba(255,255,255,.45);border-radius:3px;box-shadow:0 0 0 1px rgba(0,0,0,.35);"></div>
<div style="left:1040.3px;top:1386px;width:73.5px;height:53px;background:linear-gradient(180deg,rgba(255,255,255,.42),rgba(255,255,255,.24) 45%,rgba(255,255,255,.12) 55%,rgba(255,255,255,.24));border:1px solid rgba(255,255,255,.45);border-radius:3px;box-shadow:0 0 0 1px rgba(0,0,0,.35);"></div>
<div style="left:1430.3px;top:1386px;width:65.0px;height:53px;background:linear-gradient(180deg,rgba(255,255,255,.42),rgba(255,255,255,.24) 45%,rgba(255,255,255,.12) 55%,rgba(255,255,255,.24));border:1px solid rgba(255,255,255,.45);border-radius:3px;box-shadow:0 0 0 1px rgba(0,0,0,.35);"></div>
<div style="left:1508.4px;top:1386px;width:72.89999999999986px;height:53px;background:linear-gradient(180deg,rgba(255,255,255,.42),rgba(255,255,255,.24) 45%,rgba(255,255,255,.12) 55%,rgba(255,255,255,.24));border:1px solid rgba(255,255,255,.45);border-radius:3px;box-shadow:0 0 0 1px rgba(0,0,0,.35);"></div>
<div style="left:1586.6px;top:1386px;width:72.80000000000018px;height:53px;background:linear-gradient(180deg,rgba(255,255,255,.42),rgba(255,255,255,.24) 45%,rgba(255,255,255,.12) 55%,rgba(255,255,255,.24));border:1px solid rgba(255,255,255,.45);border-radius:3px;box-shadow:0 0 0 1px rgba(0,0,0,.35);"></div>
<div style="left:1664px;top:1386px;width:68.79999999999995px;height:53px;background:linear-gradient(180deg,rgba(255,255,255,.62),rgba(255,255,255,.42) 45%,rgba(255,255,255,.28) 55%,rgba(255,255,255,.4));border:1px solid rgba(255,255,255,.45);border-radius:3px;box-shadow:0 0 0 1px rgba(0,0,0,.35);"></div>
<div style="left:1496.5px;top:1386px;width:3px;height:52px;background:rgba(255,255,255,.25);"></div>
<div style="left:1734px;top:1386px;width:3px;height:52px;background:rgba(255,255,255,.25);"></div>
<svg style="left:13px;top:1385px" width="54" height="54"><defs><radialGradient id="og" cx=".5" cy=".35" r=".7"><stop offset="0" stop-color="#8ec3ea"/><stop offset=".6" stop-color="#2d6fb0"/><stop offset="1" stop-color="#143b6b"/></radialGradient></defs><circle cx="27" cy="27" r="25.500" fill="url(#og)" stroke="#9fc3df" stroke-width="1.500"/><path d="M15 17q5-3 10 0l-1.500 9q-5-3-10 0z" fill="#e8542c"/><path d="M28 17.500q5 3 10 0l-1.500 9q-5 3-10 0z" fill="#7fba2c"/><path d="M13 29q5-3 10 0l-1.500 9q-5-3-10 0z" fill="#2d9ee0"/><path d="M26 29.500q5 3 10 0l-1.500 9q-5 3-10 0z" fill="#f7c325"/></svg>
<svg style="left:103px;top:1387px" width="50" height="50"><circle cx="24.600" cy="24" r="24" fill="#a855f7"/><path d="M24.600 11q3 0 5 4l6 12q2 6-4 7h-14q-6-1-4-7l6-12q2-4 5-4z" fill="#fff"/></svg>
<svg style="left:195px;top:1389px" width="50" height="48"><defs><linearGradient id="eg" x1="0" y1="0" x2="0" y2="1"><stop offset="0" stop-color="#a9defa"/><stop offset="1" stop-color="#3d9bd9"/></linearGradient></defs><path d="M3 9h11l3 3h28v26H3z" fill="#f3d377" stroke="#c49a2e"/><path d="M6 5h12l3 3h21v12H6z" fill="#fbe9a9" stroke="#c9a537"/><path d="M5 14h12l3 3h22v20H5z" fill="#f8df8f" stroke="#c9a537"/><rect x="9" y="6" width="4" height="3" fill="#3a3"/><rect x="25" y="10" width="4" height="3" fill="#d33"/><rect x="33" y="13" width="4" height="3" fill="#36c"/><path d="M2 27h46l-2 19H4z" fill="url(#eg)" stroke="#6aa9d6" stroke-width=".8"/><path d="M14 37h22v9H14z" fill="#22344a"/><path d="M13 36h24v10" fill="none" stroke="#8fd0f5" stroke-width="1"/></svg>
<svg style="left:274px;top:1389px" width="46" height="46"><circle cx="22.600" cy="23" r="22" fill="#db4437"/><path d="M22.600 23L3.600 12A22 22 0 0 0 15 43.700z" fill="#0f9d58"/><path d="M22.600 23L15 43.700A22 22 0 0 0 41.600 12z" fill="#ffcd40"/><path d="M22.600 23L41.600 12A22 22 0 0 0 3.600 12z" fill="#db4437"/><circle cx="22.600" cy="23" r="10.300" fill="#fff"/><circle cx="22.600" cy="23" r="8.300" fill="#4285f4"/></svg>
<svg style="left:350px;top:1389px" width="48" height="48"><ellipse cx="20" cy="14" rx="17" ry="10" fill="#f4f4f4" stroke="#d33" stroke-width="1.500" transform="rotate(-15 20 14)"/><ellipse cx="14" cy="22" rx="12" ry="6" fill="#9aa" opacity=".8"/><path d="M12 5l20 28M30 5L18 33" stroke="#bbb" stroke-width="2.500"/><circle cx="20" cy="38" r="5" fill="none" stroke="#2a8fd6" stroke-width="3"/><circle cx="36" cy="36" r="5" fill="none" stroke="#2a8fd6" stroke-width="3"/></svg>
<svg style="left:429px;top:1388px" width="48" height="48"><circle cx="23.500" cy="23.500" r="23" fill="#f5f5f5"/><path d="M12 9l11.500 15v17M35 9L23.500 24" fill="none" stroke="#e0161b" stroke-width="6"/></svg>
<svg style="left:508px;top:1393px" width="44" height="36"><rect x="1" y="1" width="42" height="34" fill="#000" stroke="#bbb" stroke-width="1.500"/><rect x="1" y="1" width="42" height="4" fill="#ccc"/><text x="4" y="15" font-size="9" fill="#fff" font-family="Liberation Mono">C:\_</text></svg>
<svg style="left:582px;top:1388px" width="54" height="50"><defs><linearGradient id="mg1" x1="0" y1="0" x2="1" y2="1"><stop offset="0" stop-color="#0a1fa8"/><stop offset=".55" stop-color="#1a4fe0"/><stop offset="1" stop-color="#8cc6ff"/></linearGradient></defs><path d="M6 5l42-3-4 33-35 2z" fill="#e8eef4" stroke="#9aa8b6" stroke-width="1"/><path d="M9.500 8l35-2.500-3.300 27-29 1.700z" fill="url(#mg1)"/><path d="M20 37h14l3 7H17z" fill="#c5ccd4"/><ellipse cx="27" cy="45" rx="14" ry="3.500" fill="#e6eaee" stroke="#aab"/><g transform="rotate(-3 18 20)"><rect x="1" y="13" width="34" height="13" rx="1.500" fill="#3d8fe0" stroke="#cfe6ff"/><path d="M4 16.500h28M4 19.500h28M6 22.500h24" stroke="#fff" stroke-width="1.800" stroke-dasharray="2.200 1"/></g></svg>
<svg style="left:659px;top:1388px" width="54" height="50"><defs><linearGradient id="mg2" x1="0" y1="0" x2="1" y2="1"><stop offset="0" stop-color="#0a1fa8"/><stop offset=".55" stop-color="#1a4fe0"/><stop offset="1" stop-color="#8cc6ff"/></linearGradient></defs><path d="M6 5l42-3-4 33-35 2z" fill="#e8eef4" stroke="#9aa8b6" stroke-width="1"/><path d="M9.500 8l35-2.500-3.300 27-29 1.700z" fill="url(#mg2)"/><path d="M20 37h14l3 7H17z" fill="#c5ccd4"/><ellipse cx="27" cy="45" rx="14" ry="3.500" fill="#e6eaee" stroke="#aab"/><rect x="14" y="11" width="24" height="19" fill="#e9f1fb" stroke="#9ab"/><path d="M16.500 16l2 2 3.500-4M16.500 23l2 2 3.500-4" fill="none" stroke="#2a7de1" stroke-width="1.800"/><path d="M25 16.500h10M25 23.500h10" stroke="#345" stroke-width="1.500"/></svg>
<svg style="left:748px;top:1390px" width="36" height="46"><rect x="1" y="1" width="33" height="44" rx="3" fill="#bcd9ee" stroke="#6fa3c8"/><rect x="5" y="5" width="25" height="10" fill="#e9f6ff" stroke="#6fa3c8"/><text x="20" y="14" font-size="9" fill="#345" font-family="Liberation Sans">0</text><rect x="5.0" y="19.0" width="5" height="5" fill="#5b9bd0"/><rect x="5.0" y="25.5" width="5" height="5" fill="#5b9bd0"/><rect x="5.0" y="32.0" width="5" height="5" fill="#5b9bd0"/><rect x="5.0" y="38.5" width="5" height="5" fill="#5b9bd0"/><rect x="11.5" y="19.0" width="5" height="5" fill="#5b9bd0"/><rect x="11.5" y="25.5" width="5" height="5" fill="#5b9bd0"/><rect x="11.5" y="32.0" width="5" height="5" fill="#5b9bd0"/><rect x="11.5" y="38.5" width="5" height="5" fill="#5b9bd0"/><rect x="18.0" y="19.0" width="5" height="5" fill="#5b9bd0"/><rect x="18.0" y="25.5" width="5" height="5" fill="#5b9bd0"/><rect x="18.0" y="32.0" width="5" height="5" fill="#5b9bd0"/><rect x="18.0" y="38.5" width="5" height="5" fill="#5b9bd0"/><rect x="24.5" y="19.0" width="5" height="5" fill="#5b9bd0"/><rect x="24.5" y="25.5" width="5" height="5" fill="#5b9bd0"/><rect x="24.5" y="32.0" width="5" height="5" fill="#5b9bd0"/><rect x="24.5" y="38.5" width="5" height="5" fill="#5b9bd0"/><rect x="24.500" y="32" width="5" height="11.500" fill="#f7a41d"/></svg>
<svg style="left:816px;top:1388px" width="52" height="50"><defs><linearGradient id="mg3" x1="0" y1="0" x2="1" y2="1"><stop offset="0" stop-color="#0a1fa8"/><stop offset=".6" stop-color="#1a4fe0"/><stop offset="1" stop-color="#8cc6ff"/></linearGradient></defs><rect x="10" y="10" width="8" height="24" fill="#d5dbe2" stroke="#99a"/><path d="M18 4l30-3-3 27-25 2z" fill="#e8eef4" stroke="#9aa8b6"/><path d="M21 7l24-2.300-2.400 21-20 1.500z" fill="url(#mg3)"/><rect x="3" y="27" width="36" height="20" rx="2.500" fill="#a9b6c3" stroke="#5d6b79"/><rect x="3" y="27" width="36" height="7" rx="2.500" fill="#c9d3dd" stroke="#5d6b79"/><path d="M14 27v-4.500h14V27" fill="none" stroke="#4a5662" stroke-width="2.500"/><rect x="10" y="32" width="5" height="5" fill="#e6ebf0" stroke="#556"/><rect x="27" y="32" width="5" height="5" fill="#e6ebf0" stroke="#556"/></svg>
<svg style="left:896px;top:1389px" width="52" height="48"><rect x="2" y="3" width="46" height="32" rx="3" fill="#5aa7e0" stroke="#cfe3f3" stroke-width="2"/><circle cx="14" cy="15" r="7" fill="#f7b54a"/><path d="M14 15V8A7 7 0 0 0 7 15z" fill="#fff"/><path d="M25 10h18M25 16h18M25 22h18" stroke="#fff" stroke-width="3"/><path d="M8 27h8" stroke="#fff" stroke-width="2" stroke-dasharray="2 1"/><ellipse cx="25" cy="40" rx="10" ry="5" fill="#dfe5ea"/></svg>
<svg style="left:975px;top:1388px" width="48" height="48"><path d="M33 7L6 31M33 41L6 17" stroke="#1a7fd0" stroke-width="8" stroke-linecap="round"/><path d="M33 1l13 6v34l-13 6z" fill="#23a9f2"/><path d="M33 14v20l-12-10z" fill="#2b4f74"/></svg>
<svg style="left:1052px;top:1389px" width="50" height="48"><rect x="10" y="4" width="36" height="28" fill="#111" stroke="#bbb" stroke-width="2.500"/><path d="M12 20l6-2 4-9 4 18 4-14 4 8 10-2" fill="none" stroke="#3d3" stroke-width="1.500"/><path d="M12 10h32M12 15h32M12 25h32" stroke="#3d3" stroke-width=".5"/><rect x="2" y="10" width="7" height="24" fill="#ccc"/><path d="M22 34h12l3 8H19z" fill="#cfd6dd"/><ellipse cx="28" cy="43" rx="13" ry="3" fill="#e3e8ec"/></svg>
<svg style="left:1132px;top:1388px" width="46" height="48"><path d="M3 4h26l8 8v34H3z" fill="#f4f4e6" stroke="#888"/><path d="M7 10h20M7 14h24M7 18h24" stroke="#999"/><rect x="5" y="20" width="30" height="24" fill="#9fdc4a"/><ellipse cx="20" cy="22" rx="9" ry="6" fill="#cfee8a" stroke="#363"/><path d="M40 4l3 2-14 34-3 2z" fill="#f7c325" stroke="#963"/></svg>
<svg style="left:1209px;top:1388px" width="48" height="47"><rect width="48" height="47" fill="#a3171b"/><text x="24" y="37" text-anchor="middle" font-size="36" font-weight="bold" fill="#fff" font-family="Liberation Sans" textLength="42" lengthAdjust="spacingAndGlyphs">64</text></svg>
<svg style="left:1287px;top:1388px" width="48" height="47"><rect width="48" height="47" fill="#4b1e8a"/><rect x="12" y="11" width="24" height="24" fill="none" stroke="#fff" stroke-width="2"/><rect x="19" y="18" width="10" height="10" fill="#fff"/><path d="M15 6v5M21 6v5M27 6v5M33 6v5M15 35v5M21 35v5M27 35v5M33 35v5M7 14h5M7 20h5M7 26h5M7 32h5M36 14h5M36 20h5M36 26h5M36 32h5" stroke="#fff" stroke-width="2"/></svg>
<svg style="left:1372px;top:1388px" width="40" height="48"><circle cx="19" cy="11" r="9" fill="#111"/><path d="M12 10h14v4H12z" fill="#f3d2b3"/><path d="M8 20h22l4 12-6 2 2 13h-8l-3-9-3 9H8l2-13-6-2z" fill="#111"/><path d="M27 6l8-4" stroke="#777" stroke-width="2"/></svg>
<svg style="left:1440px;top:1390px" width="46" height="44"><rect x="18" y="5" width="24" height="34" fill="#fff" stroke="#2b579a"/><path d="M22 11h16M22 16h16M22 21h16M22 26h16M22 31h16" stroke="#2b579a" stroke-width="2.200"/><path d="M2 5l24-4v42L2 39z" fill="#2b579a"/><text x="14" y="30" text-anchor="middle" font-size="19" font-weight="bold" fill="#fff" font-family="Liberation Sans">W</text></svg>
<svg style="left:1521px;top:1388px" width="50" height="50"><circle cx="20" cy="20" r="17" fill="#00aff0"/><circle cx="11" cy="11" r="9" fill="#00aff0"/><circle cx="30" cy="30" r="9" fill="#00aff0"/><text x="21" y="30" text-anchor="middle" font-size="27" font-weight="bold" fill="#fff" font-family="Liberation Sans">S</text><circle cx="34" cy="37" r="10.500" fill="#e84c3d"/><text x="34" y="42" text-anchor="middle" font-size="13" fill="#fff" font-family="Liberation Sans">9+</text></svg>
<svg style="left:1599px;top:1388px" width="48" height="48"><rect x="1" y="1" width="46" height="46" rx="9" fill="#141414"/><path d="M7 15V10a3 3 0 0 1 3-3h5M33 7h5a3 3 0 0 1 3 3v5M41 33v5a3 3 0 0 1-3 3h-5M15 41h-5a3 3 0 0 1-3-3v-5" fill="none" stroke="#e8262d" stroke-width="2"/><rect x="10" y="15" width="22" height="18" rx="5" fill="#e8262d"/><path d="M32 24l8-6v12z" fill="#e8262d"/><path d="M15 24q3-5 6 0t6 0q-3 5-6 0t-6 0" fill="none" stroke="#fff" stroke-width="1.800"/></svg>
<svg style="left:1675px;top:1390px" width="46" height="44"><rect x="20" y="5" width="24" height="34" fill="#fff" stroke="#217346"/><path d="M26 10h6v4h-6zM34 10h7v4h-7zM26 16h6v4h-6zM34 16h7v4h-7zM26 22h6v4h-6zM34 22h7v4h-7zM26 28h6v4h-6zM34 28h7v4h-7z" fill="#217346"/><path d="M2 5l24-4v42L2 39z" fill="#217346"/><path d="M8 13l10 17M18 13L8 30" stroke="#fff" stroke-width="3.200"/></svg>
<div class="t ta ac vm nc" style="left:2090px;top:1398px;width:38px;height:24px;font-size:16.5px;color:#fff;"><span>RU</span></div>
<svg style="left:2142px;top:1399px" width="26" height="26"><path d="M3 8q2-7 11-6t10 9-5 12-12 0T3 8z" fill="#5bb52b"/><path d="M8 13l3 3 6-6" fill="none" stroke="#fff" stroke-width="2.500"/><circle cx="18.500" cy="20" r="4" fill="#e8262d" stroke="#fff" stroke-width="1.200"/></svg>
<svg style="left:2178px;top:1401px" width="24" height="24"><rect width="24" height="24" rx="5" fill="#141414"/><rect x="5" y="7" width="11" height="10" rx="3" fill="#e8262d"/><path d="M16 12l5-4v8z" fill="#e8262d"/><path d="M3 7V5a2 2 0 0 1 2-2h2M17 3h2a2 2 0 0 1 2 2v2M21 17v2a2 2 0 0 1-2 2h-2M7 21H5a2 2 0 0 1-2-2v-2" fill="none" stroke="#e8262d"/></svg>
<svg style="left:2217px;top:1402px" width="19" height="20"><rect width="19" height="20" fill="#0a0" stroke="#ddd" stroke-width="1.500"/><path d="M2 4h15M2 7h15M2 10h15M2 13h15M5 2v13M9 2v13M13 2v13" stroke="#000" stroke-width="1.400"/><rect x="1" y="15" width="17" height="4" fill="#3f3"/></svg>
<svg style="left:2250px;top:1401px" width="25" height="25"><circle cx="12" cy="12" r="12" fill="#f47b20"/><path d="M5 14q7-8 15-6M5 18q7-7 16-5M8 21q5-5 12-4" fill="none" stroke="#fff" stroke-width="2.200"/></svg>
<svg style="left:2286px;top:1401px" width="24" height="24"><rect width="24" height="24" rx="3" fill="#3a3a3a" stroke="#666"/><path d="M4 12q6-8 13-3-4 0-6 3 2 3 6 3-7 5-13-3z" fill="#76b900"/><rect x="19" y="6" width="3" height="10" fill="#ff0"/><rect x="19" y="18" width="3" height="3" fill="#ff0"/></svg>
<svg style="left:2322px;top:1400px" width="26" height="26"><path d="M1 9h6l8-7v22l-8-7H1z" fill="#eee"/><path d="M18 8q3 5 0 10M21 5q5 8 0 16" fill="none" stroke="#ddd" stroke-width="1.500"/></svg>
<svg style="left:2358px;top:1400px" width="26" height="27"><path d="M3 2v23" stroke="#eee" stroke-width="2"/><path d="M4 3q6-3 10 0t8 0v11q-4 3-8 0t-10 0z" fill="#f2f2f2"/><circle cx="18" cy="20" r="5.500" fill="#e8262d" stroke="#fff"/><path d="M15.500 17.500l5 5M20.500 17.500l-5 5" stroke="#fff" stroke-width="1.500"/></svg>
<svg style="left:2393px;top:1400px" width="26" height="27"><rect x="6" y="8" width="18" height="13" fill="#2b4a6b" stroke="#eee" stroke-width="2"/><path d="M10 25h10" stroke="#eee" stroke-width="2"/><rect x="1" y="2" width="6" height="9" fill="#ddd" stroke="#fff"/><path d="M4 11v10h3" fill="none" stroke="#eee" stroke-width="1.500"/></svg>
<div class="t ta ac vm nc" style="left:2440px;top:1391px;width:92px;height:22px;font-size:16.8px;color:#fff;"><span>15:21</span></div>
<div class="t ta ac vm nc" style="left:2440px;top:1417px;width:92px;height:22px;font-size:16.8px;color:#fff;"><span>16.06.2022</span></div>
<div style="left:2547px;top:1385px;width:13px;height:55px;background:linear-gradient(90deg,rgba(255,255,255,.35),rgba(255,255,255,.12));border:1px solid rgba(255,255,255,.4);"></div>
</body></html>
